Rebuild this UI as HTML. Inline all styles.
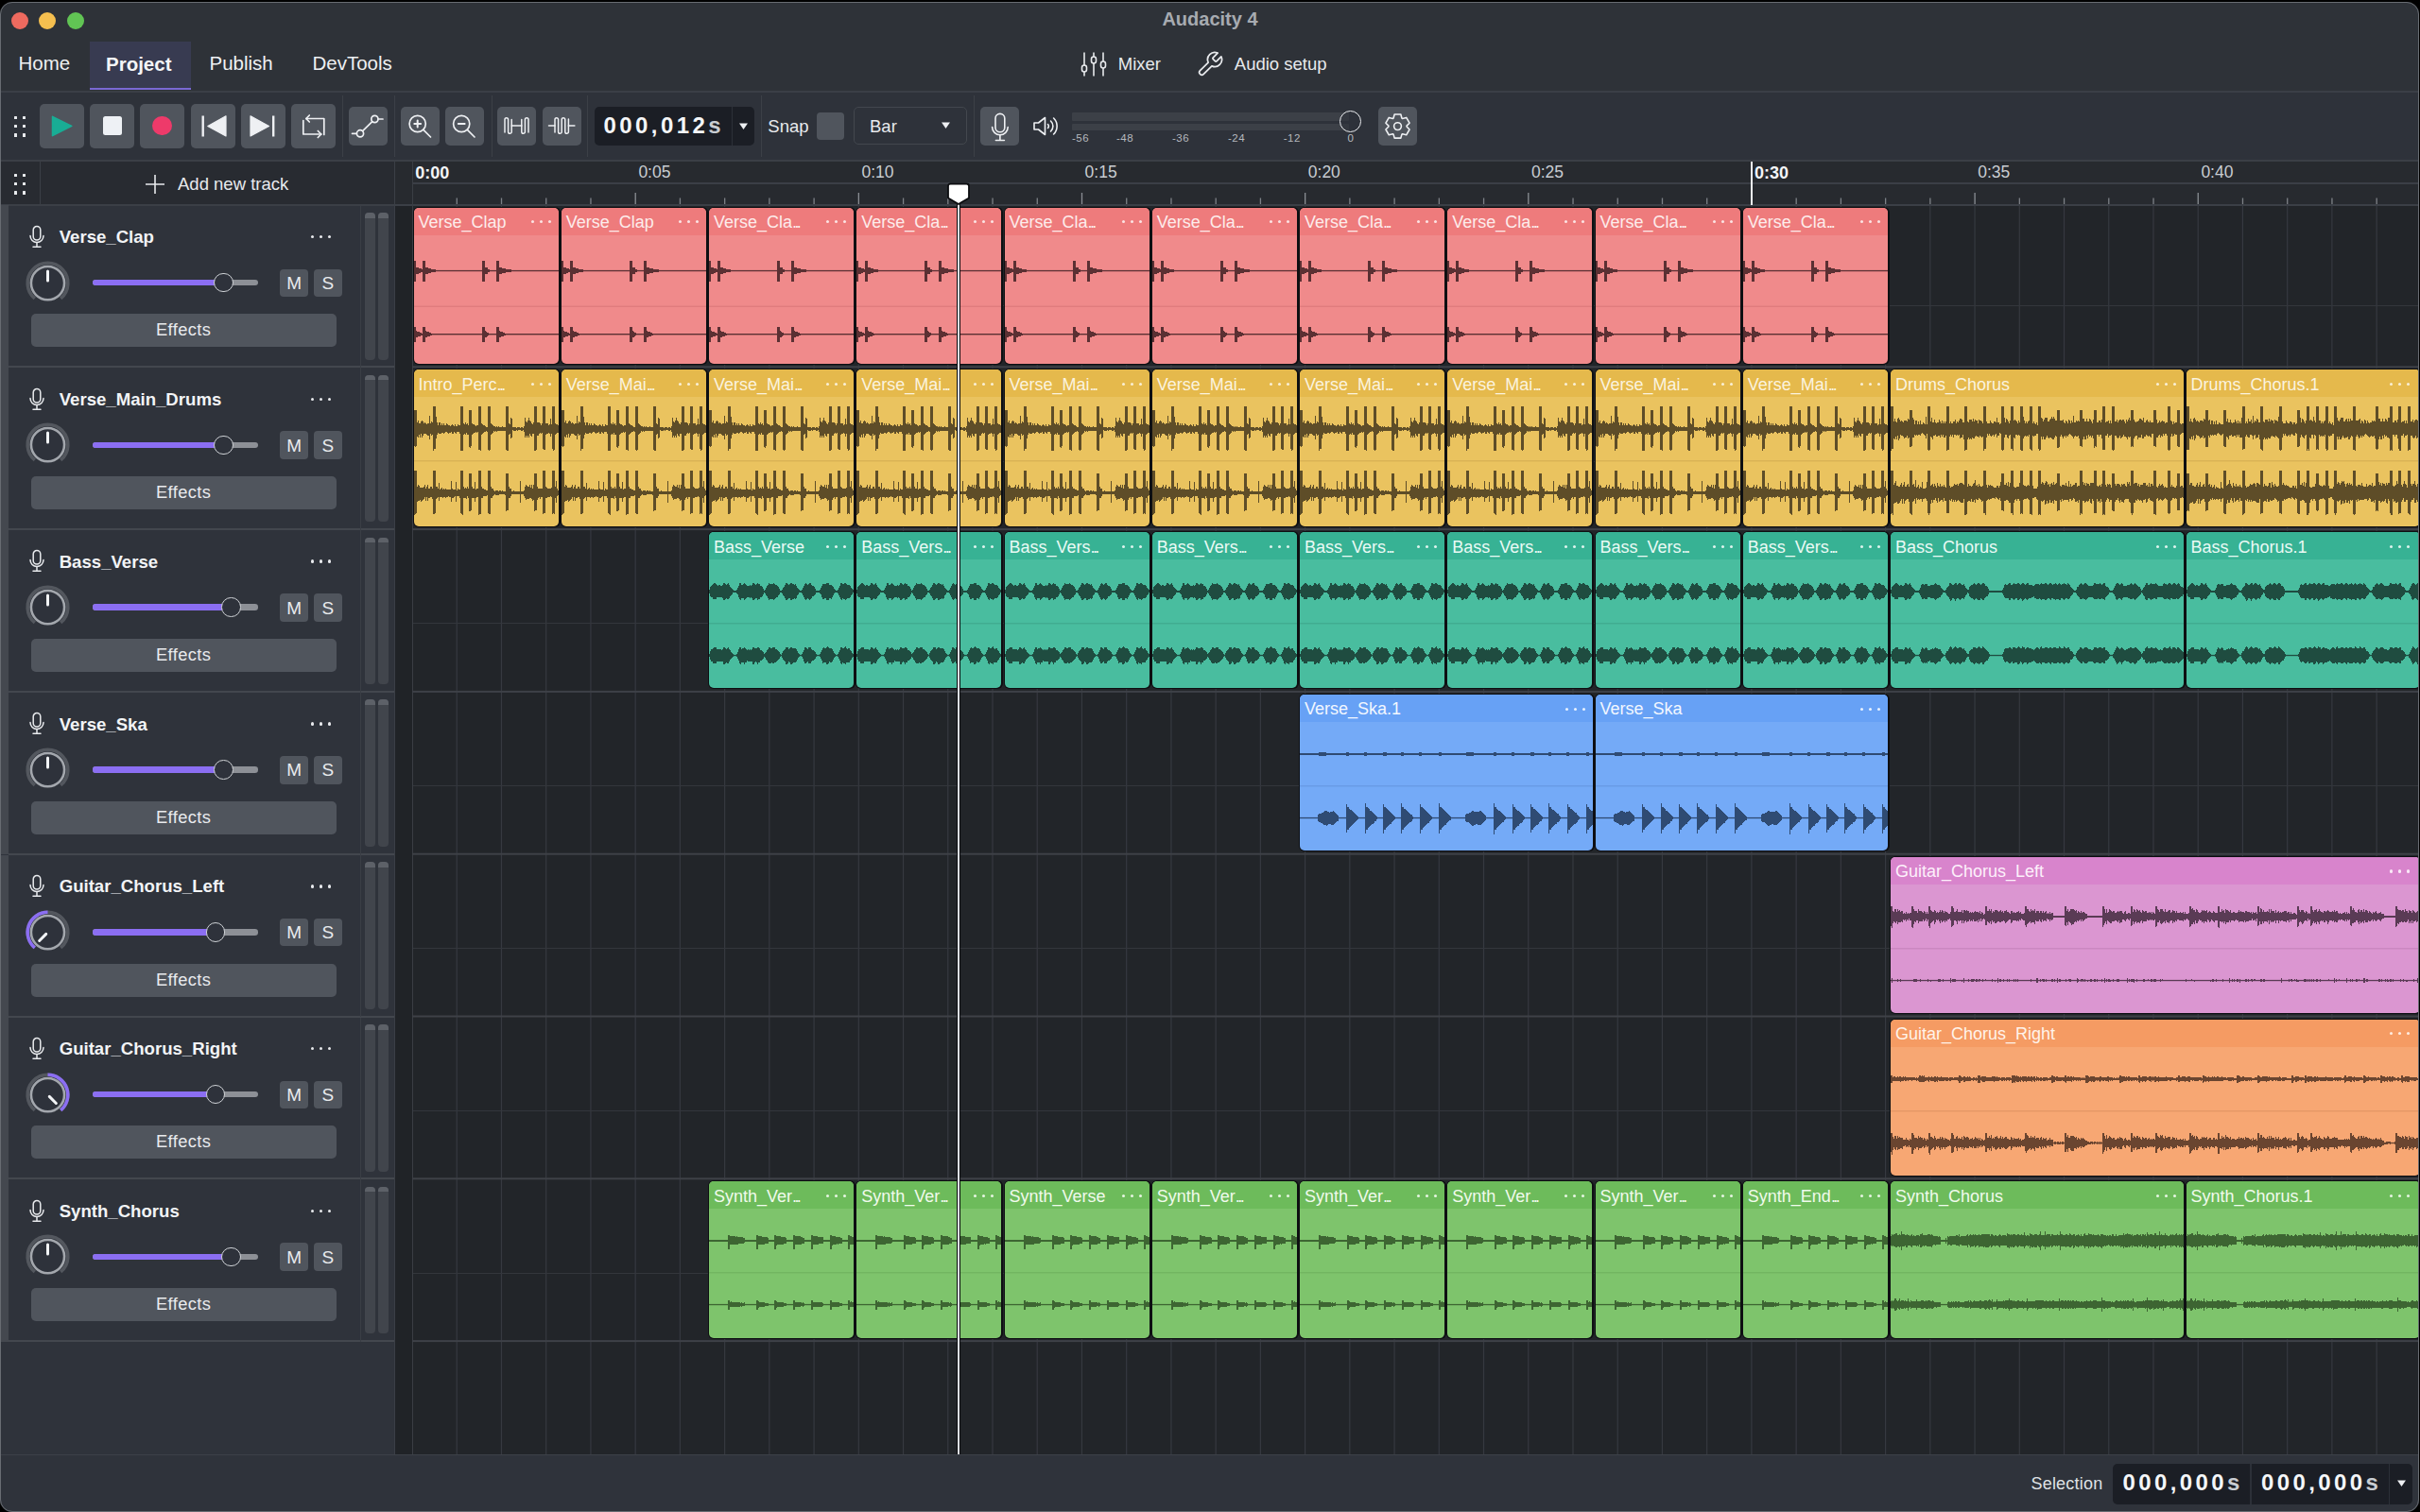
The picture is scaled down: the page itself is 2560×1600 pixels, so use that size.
<!DOCTYPE html><html><head><meta charset="utf-8"><style>
*{box-sizing:border-box;margin:0;padding:0}
html,body{width:2560px;height:1600px;overflow:hidden;background:#000;font-family:"Liberation Sans", sans-serif;}
.a{position:absolute}
.win{position:absolute;left:0;top:0;width:2560px;height:1600px;background:#2e3238;overflow:hidden;clip-path:inset(2px 1px 0px 0px round 13px);}
.wb{position:absolute;left:0;top:2px;width:2559px;height:1598px;border-radius:13px;border:1px solid #686c72;pointer-events:none}
.btn{position:absolute;background:#50555d;border-radius:5px}
.sep{position:absolute;width:1px;background:#3c4047}
.t{position:absolute;white-space:nowrap;line-height:1}
.clip{position:absolute;background:#0e0f12;border-radius:6px}
.ci{position:absolute;left:1px;top:1px;right:2px;bottom:1px;border-radius:5px;overflow:hidden}
.ch{position:absolute;left:0;top:0;right:0;height:29px}
.ct{position:absolute;left:5px;top:6.5px;font-size:18px;line-height:1;white-space:nowrap}
.cd{position:absolute;right:7px;top:13.5px;width:22px;height:4px}
.cd i{position:absolute;top:0.3px;width:3.1px;height:3.1px;border-radius:50%;opacity:0.92}
.cw{position:absolute;left:0;top:0}
</style></head><body>
<div class="win">
<svg width="0" height="0" style="position:absolute"><defs><g id="w0"><rect x="0" y="103.7" width="158" height="1" fill="rgba(120,40,45,0.18)"/><rect x="0" y="65.9" width="158" height="1.3" fill="#5b3033"/><rect x="0" y="133.1" width="158" height="1.3" fill="#5b3033"/><path d="M0 56H1V56H2H2V63H3H3V63H4H4V63H5H5V64H6H6V64H7H7V64H8H8V65H9H9V56H10H10V56H11H11V56H12H12V63H13H13V63H14H14V63H15H15V64H16H16V64H17H17V64H18H18V65H19H19V65H20H20V65H21H21V65H22H22V65H23H23V66H24H24V66H25H25V66H26H26V66H27H27V66H28H28V66H29H29V66H30H30V66H31H31V66H32H32V66H33H33V66H34H34V66H35H35V66H36H36V66H37H37V66H38H38V66H39H39V66H40H40V66H41H41V66H42H42V66H43H43V66H44H44V66H45H45V66H46H46V66H47H47V66H48H48V66H49H49V66H50H50V66H51H51V66H52H52V66H53H53V66H54H54V66H55H55V66H56H56V66H57H57V66H58H58V66H59H59V66H60H60V66H61H61V66H62H62V66H63H63V66H64H64V66H65H65V66H66H66V66H67H67V66H68H68V66H69H69V66H70H70V66H71H71V66H72H72V56H73H73V56H74H74V56H75H75V63H76H76V63H77H77V63H78H78V65H79H79V65H80H80V66H81H81V66H82H82V66H83H83V66H84H84V66H85H85V66H86H86V66H87H87V56H88H88V56H89H89V56H90H90V63H91H91V63H92H92V63H93H93V64H94H94V64H95H95V64H96H96V64H97H97V65H98H98V65H99H99V65H100H100V65H101H101V65H102H102V65H103H103V66H104H104V66H105H105V66H106H106V66H107H107V66H108H108V66H109H109V66H110H110V66H111H111V66H112H112V66H113H113V66H114H114V66H115H115V66H116H116V66H117H117V66H118H118V66H119H119V66H120H120V66H121H121V66H122H122V66H123H123V66H124H124V66H125H125V66H126H126V66H127H127V66H128H128V66H129H129V66H130H130V66H131H131V66H132H132V66H133H133V66H134H134V66H135H135V66H136H136V66H137H137V66H138H138V66H139H139V66H140H140V66H141H141V66H142H142V66H143H143V66H144H144V66H145H145V66H146H146V66H147H147V66H148H148V66H149H149V66H150H150V66H151H151V66H152H152V66H153H153V66H154H154V66H155H155V56H156H156V56H157H157V56H158H158V78H157H157V78H156H156V78H155H155V67H154H154V67H153H153V67H152H152V67H151H151V67H150H150V67H149H149V67H148H148V67H147H147V67H146H146V67H145H145V67H144H144V67H143H143V67H142H142V67H141H141V67H140H140V67H139H139V67H138H138V67H137H137V67H136H136V67H135H135V67H134H134V67H133H133V67H132H132V67H131H131V67H130H130V67H129H129V67H128H128V67H127H127V67H126H126V67H125H125V67H124H124V67H123H123V67H122H122V67H121H121V67H120H120V67H119H119V67H118H118V67H117H117V67H116H116V67H115H115V67H114H114V67H113H113V67H112H112V67H111H111V67H110H110V67H109H109V67H108H108V67H107H107V67H106H106V67H105H105V67H104H104V67H103H103V68H102H102V68H101H101V68H100H100V68H99H99V68H98H98V68H97H97V69H96H96V69H95H95V69H94H94V69H93H93V70H92H92V70H91H91V70H90H90V78H89H89V78H88H88V78H87H87V67H86H86V67H85H85V67H84H84V67H83H83V67H82H82V67H81H81V67H80H80V68H79H79V68H78H78V70H77H77V70H76H76V70H75H75V78H74H74V78H73H73V78H72H72V67H71H71V67H70H70V67H69H69V67H68H68V67H67H67V67H66H66V67H65H65V67H64H64V67H63H63V67H62H62V67H61H61V67H60H60V67H59H59V67H58H58V67H57H57V67H56H56V67H55H55V67H54H54V67H53H53V67H52H52V67H51H51V67H50H50V67H49H49V67H48H48V67H47H47V67H46H46V67H45H45V67H44H44V67H43H43V67H42H42V67H41H41V67H40H40V67H39H39V67H38H38V67H37H37V67H36H36V67H35H35V67H34H34V67H33H33V67H32H32V67H31H31V67H30H30V67H29H29V67H28H28V67H27H27V67H26H26V67H25H25V67H24H24V67H23H23V68H22H22V68H21H21V68H20H20V68H19H19V68H18H18V69H17H17V69H16H16V69H15H15V70H14H14V70H13H13V70H12H12V78H11H11V78H10H10V78H9H9V68H8H8V68H7H7V69H6H6V69H5H5V70H4H4V70H3H3V70H2H2V78H1H1V78H0H0Z" fill="#5b3033" shape-rendering="crispEdges"/><path d="M0 126H1V126H2H2V130H3H3V131H4H4V131H5H5V131H6H6V132H7H7V132H8H8V133H9H9V126H10H10V126H11H11V126H12H12V130H13H13V131H14H14V131H15H15V131H16H16V132H17H17V132H18H18V133H19H19V133H20H20V133H21H21V133H22H22V133H23H23V133H24H24V133H25H25V133H26H26V133H27H27V133H28H28V133H29H29V133H30H30V133H31H31V133H32H32V133H33H33V133H34H34V133H35H35V133H36H36V133H37H37V133H38H38V133H39H39V133H40H40V133H41H41V133H42H42V133H43H43V133H44H44V133H45H45V133H46H46V133H47H47V133H48H48V133H49H49V133H50H50V133H51H51V133H52H52V133H53H53V133H54H54V133H55H55V133H56H56V133H57H57V133H58H58V133H59H59V133H60H60V133H61H61V133H62H62V133H63H63V133H64H64V133H65H65V133H66H66V133H67H67V133H68H68V133H69H69V133H70H70V133H71H71V133H72H72V126H73H73V126H74H74V126H75H75V130H76H76V131H77H77V132H78H78V132H79H79V133H80H80V133H81H81V133H82H82V133H83H83V133H84H84V133H85H85V133H86H86V133H87H87V126H88H88V126H89H89V126H90H90V130H91H91V131H92H92V131H93H93V131H94H94V132H95H95V132H96H96V133H97H97V133H98H98V133H99H99V133H100H100V133H101H101V133H102H102V133H103H103V133H104H104V133H105H105V133H106H106V133H107H107V133H108H108V133H109H109V133H110H110V133H111H111V133H112H112V133H113H113V133H114H114V133H115H115V133H116H116V133H117H117V133H118H118V133H119H119V133H120H120V133H121H121V133H122H122V133H123H123V133H124H124V133H125H125V133H126H126V133H127H127V133H128H128V133H129H129V133H130H130V133H131H131V133H132H132V133H133H133V133H134H134V133H135H135V133H136H136V133H137H137V133H138H138V133H139H139V133H140H140V133H141H141V133H142H142V133H143H143V133H144H144V133H145H145V133H146H146V133H147H147V133H148H148V133H149H149V133H150H150V133H151H151V133H152H152V133H153H153V133H154H154V133H155H155V126H156H156V126H157H157V126H158H158V142H157H157V142H156H156V142H155H155V134H154H154V134H153H153V134H152H152V134H151H151V134H150H150V134H149H149V134H148H148V134H147H147V134H146H146V134H145H145V134H144H144V134H143H143V134H142H142V134H141H141V134H140H140V134H139H139V134H138H138V134H137H137V134H136H136V134H135H135V134H134H134V134H133H133V134H132H132V134H131H131V134H130H130V134H129H129V134H128H128V134H127H127V134H126H126V134H125H125V134H124H124V134H123H123V134H122H122V134H121H121V134H120H120V134H119H119V134H118H118V134H117H117V134H116H116V134H115H115V134H114H114V134H113H113V134H112H112V134H111H111V134H110H110V134H109H109V134H108H108V134H107H107V134H106H106V134H105H105V134H104H104V134H103H103V134H102H102V134H101H101V134H100H100V134H99H99V134H98H98V134H97H97V135H96H96V135H95H95V136H94H94V136H93H93V136H92H92V137H91H91V137H90H90V142H89H89V142H88H88V142H87H87V134H86H86V134H85H85V134H84H84V134H83H83V134H82H82V134H81H81V134H80H80V134H79H79V135H78H78V136H77H77V137H76H76V137H75H75V142H74H74V142H73H73V142H72H72V134H71H71V134H70H70V134H69H69V134H68H68V134H67H67V134H66H66V134H65H65V134H64H64V134H63H63V134H62H62V134H61H61V134H60H60V134H59H59V134H58H58V134H57H57V134H56H56V134H55H55V134H54H54V134H53H53V134H52H52V134H51H51V134H50H50V134H49H49V134H48H48V134H47H47V134H46H46V134H45H45V134H44H44V134H43H43V134H42H42V134H41H41V134H40H40V134H39H39V134H38H38V134H37H37V134H36H36V134H35H35V134H34H34V134H33H33V134H32H32V134H31H31V134H30H30V134H29H29V134H28H28V134H27H27V134H26H26V134H25H25V134H24H24V134H23H23V134H22H22V134H21H21V134H20H20V134H19H19V135H18H18V135H17H17V136H16H16V136H15H15V136H14H14V137H13H13V137H12H12V142H11H11V142H10H10V142H9H9V135H8H8V135H7H7V136H6H6V136H5H5V136H4H4V137H3H3V137H2H2V142H1H1V142H0H0Z" fill="#5b3033" shape-rendering="crispEdges"/></g><g id="w1"><rect x="0" y="96.3" width="158" height="1" fill="rgba(110,80,20,0.18)"/><rect x="0" y="62.199999999999996" width="158" height="1.3" fill="#5e4d28"/><rect x="0" y="129.9" width="158" height="1.3" fill="#5e4d28"/><path d="M0 43H1V43H2H2V43H3H3V56H4H4V54H5H5V57H6H6V57H7H7V55H8H8V54H9H9V55H10H10V57H11H11V56H12H12V57H13H13V58H14H14V57H15H15V57H16H16V49H17H17V57H18H18V55H19H19V56H20H20V39H21H21V39H22H22V39H23H23V50H24H24V56H25H25V59H26H26V56H27H27V56H28H28V59H29H29V57H30H30V59H31H31V57H32H32V59H33H33V59H34H34V57H35H35V58H36H36V59H37H37V59H38H38V60H39H39V59H40H40V58H41H41V59H42H42V60H43H43V58H44H44V60H45H45V60H46H46V58H47H47V59H48H48V59H49H49V39H50H50V39H51H51V39H52H52V57H53H53V58H54H54V56H55H55V58H56H56V57H57H57V59H58H58V43H59H59V43H60H60V43H61H61V57H62H62V58H63H63V58H64H64V59H65H65V60H66H66V59H67H67V59H68H68V39H69H69V39H70H70V39H71H71V57H72H72V58H73H73V59H74H74V59H75H75V60H76H76V61H77H77V61H78H78V39H79H79V39H80H80V39H81H81V57H82H82V58H83H83V59H84H84V60H85H85V60H86H86V61H87H87V60H88H88V61H89H89V60H90H90V61H91H91V61H92H92V61H93H93V60H94H94V61H95H95V61H96H96V61H97H97V39H98H98V39H99H99V39H100H100V57H101H101V58H102H102V51H103H103V52H104H104V61H105H105V61H106H106V61H107H107V61H108H108V62H109H109V61H110H110V61H111H111V61H112H112V62H113H113V61H114H114V61H115H115V62H116H116V60H117H117V51H118H118V55H119H119V56H120H120V54H121H121V51H122H122V54H123H123V55H124H124V57H125H125V58H126H126V56H127H127V39H128H128V39H129H129V39H130H130V56H131H131V56H132H132V56H133H133V57H134H134V59H135H135V57H136H136V39H137H137V39H138H138V39H139H139V57H140H140V57H141H141V57H142H142V59H143H143V58H144H144V52H145H145V58H146H146V39H147H147V39H148H148V39H149H149V57H150H150V58H151H151V58H152H152V59H153H153V60H154H154V59H155H155V61H156H156V39H157H157V39H158H158V86H157H157V86H156H156V66H155H155V66H154H154V67H153H153V67H152H152V67H151H151V68H150H150V69H149H149V85H148H148V86H147H147V84H146H146V68H145H145V71H144H144V68H143H143V67H142H142V68H141H141V68H140H140V69H139H139V85H138H138V85H137H137V84H136H136V67H135H135V68H134H134V67H133H133V68H132H132V70H131H131V70H130H130V85H129H129V86H128H128V86H127H127V68H126H126V68H125H125V71H124H124V70H123H123V68H122H122V72H121H121V70H120H120V72H119H119V70H118H118V72H117H117V66H116H116V64H115H115V65H114H114V65H113H113V64H112H112V64H111H111V64H110H110V65H109H109V64H108H108V65H107H107V65H106H106V65H105H105V64H104H104V72H103H103V73H102H102V68H101H101V69H100H100V86H99H99V86H98H98V85H97H97V65H96H96V65H95H95V65H94H94V65H93H93V65H92H92V65H91H91V65H90H90V65H89H89V65H88H88V66H87H87V65H86H86V66H85H85V65H84H84V67H83H83V68H82H82V69H81H81V85H80H80V86H79H79V85H78H78V66H77H77V65H76H76V66H75H75V66H74H74V67H73H73V68H72H72V69H71H71V86H70H70V85H69H69V85H68H68V66H67H67V67H66H66V66H65H65V67H64H64V67H63H63V68H62H62V69H61H61V81H60H60V83H59H59V82H58H58V69H57H57V69H56H56V67H55H55V69H54H54V68H53H53V69H52H52V86H51H51V86H50H50V86H49H49V68H48H48V66H47H47V66H46H46V66H45H45V68H44H44V67H43H43V66H42H42V68H41H41V68H40H40V66H39H39V67H38H38V67H37H37V68H36H36V67H35H35V66H34H34V66H33H33V67H32H32V68H31H31V67H30H30V67H29H29V68H28H28V68H27H27V68H26H26V67H25H25V69H24H24V73H23H23V84H22H22V84H21H21V86H20H20V69H19H19V70H18H18V68H17H17V74H16H16V70H15H15V70H14H14V69H13H13V68H12H12V68H11H11V68H10H10V70H9H9V72H8H8V68H7H7V72H6H6V69H5H5V72H4H4V71H3H3V81H2H2V82H1H1V81H0H0Z" fill="#5e4d28" shape-rendering="crispEdges"/><path d="M0 107H1V107H2H2V107H3H3V124H4H4V122H5H5V123H6H6V125H7H7V125H8H8V125H9H9V125H10H10V124H11H11V122H12H12V126H13H13V124H14H14V122H15H15V126H16H16V126H17H17V124H18H18V124H19H19V126H20H20V107H21H21V107H22H22V107H23H23V124H24H24V124H25H25V126H26H26V120H27H27V127H28H28V126H29H29V125H30H30V127H31H31V126H32H32V127H33H33V126H34H34V127H35H35V127H36H36V127H37H37V127H38H38V127H39H39V118H40H40V126H41H41V127H42H42V127H43H43V127H44H44V119H45H45V128H46H46V126H47H47V127H48H48V127H49H49V107H50H50V107H51H51V107H52H52V124H53H53V126H54H54V125H55H55V126H56H56V124H57H57V126H58H58V110H59H59V110H60H60V110H61H61V124H62H62V126H63H63V126H64H64V119H65H65V127H66H66V126H67H67V126H68H68V107H69H69V107H70H70V107H71H71V124H72H72V126H73H73V126H74H74V127H75H75V127H76H76V128H77H77V128H78H78V107H79H79V107H80H80V107H81H81V124H82H82V126H83H83V126H84H84V128H85H85V129H86H86V128H87H87V128H88H88V128H89H89V129H90H90V128H91H91V128H92H92V129H93H93V128H94H94V129H95H95V129H96H96V129H97H97V110H98H98V110H99H99V110H100H100V124H101H101V126H102H102V126H103H103V129H104H104V129H105H105V128H106H106V129H107H107V129H108H108V129H109H109V129H110H110V129H111H111V129H112H112V118H113H113V129H114H114V129H115H115V129H116H116V128H117H117V124H118H118V122H119H119V123H120H120V124H121H121V124H122H122V122H123H123V125H124H124V122H125H125V126H126H126V122H127H127V110H128H128V110H129H129V110H130H130V124H131H131V126H132H132V126H133H133V126H134H134V126H135H135V126H136H136V107H137H137V107H138H138V107H139H139V124H140H140V125H141H141V126H142H142V126H143H143V126H144H144V126H145H145V125H146H146V107H147H147V107H148H148V107H149H149V124H150H150V118H151H151V126H152H152V128H153H153V128H154H154V128H155H155V127H156H156V107H157H157V107H158H158V154H157H157V153H156H156V134H155H155V134H154H154V133H153H153V133H152H152V134H151H151V141H150H150V136H149H149V153H148H148V152H147H147V153H146H146V135H145H145V134H144H144V135H143H143V135H142H142V135H141H141V136H140H140V136H139H139V152H138H138V152H137H137V153H136H136V135H135H135V135H134H134V137H133H133V135H132H132V136H131H131V138H130H130V149H129H129V149H128H128V150H127H127V138H126H126V139H125H125V137H124H124V136H123H123V136H122H122V137H121H121V137H120H120V137H119H119V138H118H118V136H117H117V134H116H116V132H115H115V132H114H114V132H113H113V141H112H112V132H111H111V132H110H110V132H109H109V132H108H108V132H107H107V132H106H106V132H105H105V132H104H104V132H103H103V134H102H102V136H101H101V136H100H100V149H99H99V149H98H98V150H97H97V133H96H96V132H95H95V132H94H94V132H93H93V132H92H92V132H91H91V132H90H90V133H89H89V133H88H88V133H87H87V133H86H86V132H85H85V133H84H84V134H83H83V136H82H82V136H81H81V153H80H80V153H79H79V152H78H78V133H77H77V134H76H76V134H75H75V134H74H74V134H73H73V136H72H72V136H71H71V153H70H70V153H69H69V154H68H68V135H67H67V135H66H66V136H65H65V140H64H64V136H63H63V136H62H62V136H61H61V149H60H60V150H59H59V150H58H58V136H57H57V134H56H56V137H55H55V136H54H54V136H53H53V136H52H52V154H51H51V153H50H50V152H49H49V136H48H48V134H47H47V134H46H46V134H45H45V140H44H44V134H43H43V135H42H42V136H41H41V136H40H40V140H39H39V135H38H38V135H37H37V134H36H36V135H35H35V135H34H34V136H33H33V135H32H32V135H31H31V136H30H30V135H29H29V135H28H28V135H27H27V139H26H26V135H25H25V136H24H24V137H23H23V152H22H22V153H21H21V153H20H20V137H19H19V135H18H18V135H17H17V136H16H16V136H15H15V139H14H14V135H13H13V139H12H12V135H11H11V137H10H10V138H9H9V139H8H8V140H7H7V138H6H6V139H5H5V139H4H4V140H3H3V152H2H2V153H1H1V154H0H0Z" fill="#5e4d28" shape-rendering="crispEdges"/></g><g id="w2"><rect x="0" y="96.3" width="314" height="1" fill="rgba(110,80,20,0.18)"/><rect x="0" y="62.199999999999996" width="314" height="1.3" fill="#5e4d28"/><rect x="0" y="129.9" width="314" height="1.3" fill="#5e4d28"/><path d="M0 39H1V39H2H2V39H3H3V55H4H4V52H5H5V55H6H6V56H7H7V52H8H8V51H9H9V53H10H10V55H11H11V54H12H12V55H13H13V56H14H14V54H15H15V54H16H16V54H17H17V55H18H18V52H19H19V53H20H20V43H21H21V43H22H22V43H23H23V51H24H24V53H25H25V58H26H26V54H27H27V54H28H28V58H29H29V55H30H30V58H31H31V54H32H32V58H33H33V58H34H34V56H35H35V57H36H36V58H37H37V50H38H38V58H39H39V39H40H40V39H41H41V39H42H42V55H43H43V51H44H44V56H45H45V56H46H46V53H47H47V56H48H48V57H49H49V56H50H50V56H51H51V53H52H52V55H53H53V57H54H54V54H55H55V57H56H56V55H57H57V57H58H58V55H59H59V39H60H60V39H61H61V39H62H62V57H63H63V55H64H64V57H65H65V57H66H66V55H67H67V55H68H68V53H69H69V57H70H70V55H71H71V56H72H72V54H73H73V52H74H74V52H75H75V53H76H76V56H77H77V56H78H78V39H79H79V39H80H80V39H81H81V55H82H82V56H83H83V53H84H84V53H85H85V53H86H86V55H87H87V52H88H88V55H89H89V53H90H90V54H91H91V54H92H92V57H93H93V53H94H94V54H95H95V54H96H96V55H97H97V57H98H98V39H99H99V39H100H100V39H101H101V55H102H102V57H103H103V57H104H104V57H105H105V54H106H106V56H107H107V57H108H108V57H109H109V55H110H110V55H111H111V56H112H112V51H113H113V56H114H114V56H115H115V58H116H116V57H117H117V39H118H118V39H119H119V39H120H120V51H121H121V56H122H122V52H123H123V53H124H124V55H125H125V57H126H126V54H127H127V39H128H128V39H129H129V39H130H130V54H131H131V53H132H132V54H133H133V55H134H134V57H135H135V54H136H136V56H137H137V39H138H138V39H139H139V39H140H140V50H141H141V54H142H142V57H143H143V55H144H144V57H145H145V55H146H146V54H147H147V39H148H148V39H149H149V39H150H150V57H151H151V55H152H152V57H153H153V58H154H154V56H155H155V59H156H156V39H157H157V39H158H158V39H159H159V51H160H160V52H161H161V55H162H162V53H163H163V51H164H164V51H165H165V51H166H166V55H167H167V55H168H168V53H169H169V52H170H170V50H171H171V52H172H172V50H173H173V52H174H174V54H175H175V54H176H176V43H177H177V43H178H178V43H179H179V54H180H180V54H181H181V54H182H182V53H183H183V56H184H184V57H185H185V54H186H186V55H187H187V57H188H188V53H189H189V54H190H190V57H191H191V54H192H192V56H193H193V49H194H194V56H195H195V56H196H196V54H197H197V55H198H198V54H199H199V55H200H200V43H201H201V43H202H202V43H203H203V52H204H204V52H205H205V55H206H206V55H207H207V52H208H208V55H209H209V55H210H210V52H211H211V53H212H212V55H213H213V57H214H214V53H215H215V43H216H216V43H217H217V43H218H218V56H219H219V56H220H220V54H221H221V54H222H222V56H223H223V53H224H224V39H225H225V39H226H226V39H227H227V56H228H228V55H229H229V55H230H230V54H231H231V57H232H232V54H233H233V57H234H234V39H235H235V39H236H236V39H237H237V55H238H238V55H239H239V53H240H240V56H241H241V54H242H242V53H243H243V53H244H244V54H245H245V53H246H246V53H247H247V55H248H248V57H249H249V53H250H250V55H251H251V53H252H252V51H253H253V54H254H254V43H255H255V43H256H256V43H257H257V53H258H258V55H259H259V56H260H260V55H261H261V55H262H262V54H263H263V52H264H264V52H265H265V53H266H266V54H267H267V51H268H268V56H269H269V56H270H270V54H271H271V53H272H272V55H273H273V56H274H274V54H275H275V56H276H276V56H277H277V56H278H278V43H279H279V43H280H280V43H281H281V53H282H282V57H283H283V56H284H284V54H285H285V56H286H286V55H287H287V54H288H288V55H289H289V55H290H290V57H291H291V56H292H292V56H293H293V39H294H294V39H295H295V39H296H296V54H297H297V55H298H298V58H299H299V55H300H300V57H301H301V56H302H302V56H303H303V43H304H304V43H305H305V43H306H306V57H307H307V58H308H308V57H309H309V57H310H310V58H311H311V57H312H312V58H313H313V43H314H314V83H313H313V68H312H312V69H311H311V69H310H310V67H309H309V67H308H308V68H307H307V69H306H306V82H305H305V82H304H304V81H303H303V69H302H302V69H301H301V68H300H300V70H299H299V71H298H298V68H297H297V71H296H296V85H295H295V86H294H294V85H293H293V70H292H292V68H291H291V68H290H290V70H289H289V68H288H288V71H287H287V70H286H286V72H285H285V69H284H284V70H283H283V72H282H282V72H281H281V82H280H280V81H279H279V81H278H278V68H277H277V68H276H276V72H275H275V71H274H274V70H273H273V71H272H272V70H271H271V69H270H270V71H269H269V71H268H268V73H267H267V73H266H266V69H265H265V72H264H264V72H263H263V72H262H262V74H261H261V70H260H260V70H259H259V71H258H258V73H257H257V82H256H256V81H255H255V82H254H254V71H253H253V72H252H252V71H251H251V74H250H250V72H249H249V71H248H248V71H247H247V69H246H246V71H245H245V72H244H244V73H243H243V70H242H242V72H241H241V73H240H240V72H239H239V70H238H238V70H237H237V85H236H236V86H235H235V85H234H234V69H233H233V70H232H232V70H231H231V72H230H230V68H229H229V70H228H228V70H227H227V85H226H226V85H225H225V85H224H224V73H223H223V69H222H222V69H221H221V71H220H220V69H219H219V69H218H218V82H217H217V81H216H216V83H215H215V73H214H214V70H213H213V72H212H212V70H211H211V71H210H210V69H209H209V73H208H208V70H207H207V74H206H206V74H205H205V71H204H204V74H203H203V82H202H202V81H201H201V81H200H200V73H199H199V70H198H198V71H197H197V71H196H196V70H195H195V71H194H194V73H193H193V71H192H192V70H191H191V69H190H190V68H189H189V69H188H188V71H187H187V70H186H186V72H185H185V70H184H184V71H183H183V73H182H182V71H181H181V69H180H180V71H179H179V82H178H178V83H177H177V83H176H176V71H175H175V70H174H174V72H173H173V74H172H172V74H171H171V73H170H170V72H169H169V72H168H168V73H167H167V72H166H166V70H165H165V72H164H164V74H163H163V74H162H162V71H161H161V74H160H160V71H159H159V85H158H158V86H157H157V84H156H156V68H155H155V68H154H154V70H153H153V70H152H152V71H151H151V70H150H150V86H149H149V85H148H148V84H147H147V69H146H146V71H145H145V70H144H144V71H143H143V70H142H142V71H141H141V73H140H140V86H139H139V86H138H138V85H137H137V70H136H136V69H135H135V70H134H134V69H133H133V69H132H132V73H131H131V72H130H130V86H129H129V84H128H128V84H127H127V69H126H126V70H125H125V73H124H124V72H123H123V69H122H122V69H121H121V72H120H120V85H119H119V86H118H118V85H117H117V68H116H116V67H115H115V70H114H114V70H113H113V72H112H112V68H111H111V69H110H110V71H109H109V69H108H108V70H107H107V71H106H106V70H105H105V68H104H104V70H103H103V68H102H102V72H101H101V84H100H100V84H99H99V86H98H98V71H97H97V72H96H96V71H95H95V70H94H94V72H93H93V71H92H92V71H91H91V70H90H90V71H89H89V73H88H88V73H87H87V72H86H86V74H85H85V73H84H84V74H83H83V72H82H82V74H81H81V85H80H80V85H79H79V86H78H78V74H77H77V69H76H76V72H75H75V72H74H74V73H73H73V69H72H72V70H71H71V69H70H70V70H69H69V69H68H68V69H67H67V72H66H66V69H65H65V71H64H64V69H63H63V71H62H62V85H61H61V85H60H60V86H59H59V70H58H58V72H57H57V72H56H56V69H55H55V71H54H54V69H53H53V72H52H52V70H51H51V70H50H50V71H49H49V71H48H48V69H47H47V70H46H46V70H45H45V74H44H44V72H43H43V71H42H42V85H41H41V86H40H40V85H39H39V68H38H38V73H37H37V70H36H36V69H35H35V68H34H34V67H33H33V68H32H32V70H31H31V69H30H30V69H29H29V70H28H28V69H27H27V70H26H26V69H25H25V72H24H24V72H23H23V81H22H22V82H21H21V82H20H20V72H19H19V73H18H18V70H17H17V72H16H16V72H15H15V73H14H14V71H13H13V70H12H12V70H11H11V69H10H10V73H9H9V75H8H8V70H7H7V74H6H6V71H5H5V74H4H4V73H3H3V84H2H2V84H1H1V86H0H0Z" fill="#5e4d28" shape-rendering="crispEdges"/><path d="M0 107H1V107H2H2V107H3H3V122H4H4V120H5H5V118H6H6V123H7H7V123H8H8V124H9H9V124H10H10V122H11H11V120H12H12V124H13H13V122H14H14V119H15H15V124H16H16V124H17H17V122H18H18V121H19H19V124H20H20V107H21H21V107H22H22V107H23H23V122H24H24V121H25H25V124H26H26V117H27H27V125H28H28V124H29H29V122H30H30V126H31H31V124H32H32V125H33H33V119H34H34V126H35H35V126H36H36V126H37H37V125H38H38V119H39H39V107H40H40V107H41H41V107H42H42V123H43H43V122H44H44V121H45H45V124H46H46V121H47H47V123H48H48V125H49H49V120H50H50V123H51H51V124H52H52V121H53H53V124H54H54V123H55H55V124H56H56V122H57H57V124H58H58V125H59H59V107H60H60V107H61H61V107H62H62V123H63H63V125H64H64V124H65H65V124H66H66V123H67H67V121H68H68V122H69H69V122H70H70V121H71H71V123H72H72V121H73H73V120H74H74V120H75H75V120H76H76V121H77H77V122H78H78V107H79H79V107H80H80V107H81H81V124H82H82V121H83H83V123H84H84V123H85H85V124H86H86V123H87H87V121H88H88V120H89H89V117H90H90V123H91H91V122H92H92V124H93H93V121H94H94V123H95H95V124H96H96V124H97H97V123H98H98V107H99H99V107H100H100V107H101H101V122H102H102V125H103H103V122H104H104V123H105H105V122H106H106V123H107H107V123H108H108V124H109H109V125H110H110V125H111H111V125H112H112V123H113H113V123H114H114V125H115H115V123H116H116V119H117H117V110H118H118V110H119H119V110H120H120V122H121H121V122H122H122V120H123H123V123H124H124V119H125H125V124H126H126V120H127H127V107H128H128V107H129H129V107H130H130V124H131H131V125H132H132V125H133H133V124H134H134V124H135H135V124H136H136V120H137H137V107H138H138V107H139H139V107H140H140V122H141H141V123H142H142V123H143H143V124H144H144V123H145H145V122H146H146V123H147H147V107H148H148V107H149H149V107H150H150V123H151H151V126H152H152V126H153H153V126H154H154V126H155H155V124H156H156V107H157H157V107H158H158V107H159H159V121H160H160V119H161H161V120H162H162V122H163H163V120H164H164V118H165H165V119H166H166V122H167H167V121H168H168V124H169H169V121H170H170V120H171H171V122H172H172V119H173H173V122H174H174V121H175H175V120H176H176V110H177H177V110H178H178V110H179H179V123H180H180V124H181H181V122H182H182V122H183H183V122H184H184V123H185H185V120H186H186V123H187H187V124H188H188V118H189H189V124H190H190V121H191H191V124H192H192V123H193H193V122H194H194V122H195H195V120H196H196V120H197H197V124H198H198V123H199H199V123H200H200V107H201H201V107H202H202V107H203H203V119H204H204V122H205H205V120H206H206V123H207H207V120H208H208V121H209H209V121H210H210V123H211H211V120H212H212V120H213H213V120H214H214V120H215H215V107H216H216V107H217H217V107H218H218V123H219H219V124H220H220V123H221H221V122H222H222V124H223H223V121H224H224V107H225H225V107H226H226V107H227H227V122H228H228V124H229H229V121H230H230V122H231H231V121H232H232V122H233H233V125H234H234V110H235H235V110H236H236V110H237H237V121H238H238V123H239H239V121H240H240V121H241H241V121H242H242V122H243H243V124H244H244V121H245H245V122H246H246V121H247H247V121H248H248V123H249H249V124H250H250V119H251H251V121H252H252V119H253H253V123H254H254V107H255H255V107H256H256V107H257H257V121H258H258V120H259H259V120H260H260V120H261H261V123H262H262V121H263H263V124H264H264V122H265H265V122H266H266V122H267H267V120H268H268V120H269H269V120H270H270V123H271H271V122H272H272V124H273H273V120H274H274V124H275H275V121H276H276V121H277H277V123H278H278V107H279H279V107H280H280V107H281H281V124H282H282V125H283H283V123H284H284V121H285H285V123H286H286V122H287H287V121H288H288V123H289H289V125H290H290V124H291H291V125H292H292V125H293H293V107H294H294V107H295H295V107H296H296V124H297H297V122H298H298V124H299H299V124H300H300V125H301H301V125H302H302V123H303H303V110H304H304V110H305H305V110H306H306V124H307H307V123H308H308V123H309H309V125H310H310V126H311H311V126H312H312V126H313H313V107H314H314V152H313H313V135H312H312V135H311H311V137H310H310V136H309H309V135H308H308V136H307H307V136H306H306V149H305H305V149H304H304V149H303H303V137H302H302V136H301H301V137H300H300V136H299H299V136H298H298V138H297H297V139H296H296V152H295H295V153H294H294V152H293H293V138H292H292V137H291H291V136H290H290V137H289H289V138H288H288V139H287H287V138H286H286V137H285H285V138H284H284V139H283H283V136H282H282V137H281H281V154H280H280V153H279H279V153H278H278V140H277H277V139H276H276V139H275H275V138H274H274V136H273H273V137H272H272V140H271H271V141H270H270V137H269H269V138H268H268V138H267H267V141H266H266V139H265H265V138H264H264V139H263H263V138H262H262V137H261H261V139H260H260V138H259H259V141H258H258V141H257H257V152H256H256V154H255H255V152H254H254V141H253H253V140H252H252V137H251H251V137H250H250V137H249H249V137H248H248V138H247H247V141H246H246V140H245H245V140H244H244V138H243H243V141H242H242V139H241H241V136H240H240V138H239H239V138H238H238V140H237H237V150H236H236V150H235H235V149H234H234V138H233H233V138H232H232V140H231H231V137H230H230V136H229H229V138H228H228V140H227H227V154H226H226V153H225H225V154H224H224V140H223H223V137H222H222V141H221H221V139H220H220V140H219H219V137H218H218V152H217H217V152H216H216V152H215H215V139H214H214V137H213H213V142H212H212V141H211H211V137H210H210V139H209H209V140H208H208V139H207H207V140H206H206V141H205H205V139H204H204V139H203H203V153H202H202V152H201H201V154H200H200V138H199H199V141H198H198V139H197H197V140H196H196V140H195H195V137H194H194V136H193H193V138H192H192V139H191H191V137H190H190V137H189H189V140H188H188V138H187H187V138H186H186V138H185H185V138H184H184V138H183H183V139H182H182V137H181H181V140H180H180V138H179H179V149H178H178V149H177H177V150H176H176V139H175H175V139H174H174V138H173H173V142H172H172V139H171H171V141H170H170V141H169H169V138H168H168V141H167H167V142H166H166V139H165H165V142H164H164V143H163H163V138H162H162V139H161H161V140H160H160V139H159H159V154H158H158V153H157H157V154H156H156V138H155H155V137H154H154V135H153H153V135H152H152V136H151H151V136H150H150V154H149H149V153H148H148V153H147H147V138H146H146V137H145H145V136H144H144V137H143H143V137H142H142V137H141H141V138H140H140V153H139H139V152H138H138V153H137H137V139H136H136V137H135H135V137H134H134V139H133H133V137H132H132V138H131H131V141H130H130V154H129H129V152H128H128V152H127H127V141H126H126V141H125H125V139H124H124V138H123H123V138H122H122V139H121H121V139H120H120V150H119H119V149H118H118V149H117H117V139H116H116V136H115H115V138H114H114V137H113H113V136H112H112V135H111H111V137H110H110V136H109H109V136H108H108V136H107H107V137H106H106V137H105H105V138H104H104V137H103H103V138H102H102V139H101H101V154H100H100V152H99H99V152H98H98V139H97H97V140H96H96V138H95H95V137H94H94V136H93H93V138H92H92V138H91H91V137H90H90V141H89H89V138H88H88V140H87H87V140H86H86V137H85H85V140H84H84V139H83H83V139H82H82V140H81H81V153H80H80V154H79H79V154H78H78V137H77H77V141H76H76V141H75H75V141H74H74V140H73H73V139H72H72V138H71H71V139H70H70V140H69H69V138H68H68V140H67H67V138H66H66V140H65H65V137H64H64V139H63H63V138H62H62V152H61H61V152H60H60V152H59H59V139H58H58V139H57H57V136H56H56V140H55H55V138H54H54V138H53H53V139H52H52V140H51H51V136H50H50V141H49H49V139H48H48V136H47H47V138H46H46V138H45H45V141H44H44V138H43H43V142H42H42V152H41H41V154H40H40V152H39H39V139H38H38V137H37H37V136H36H36V137H35H35V137H34H34V140H33H33V137H32H32V137H31H31V138H30H30V137H29H29V138H28H28V136H27H27V142H26H26V137H25H25V139H24H24V140H23H23V154H22H22V153H21H21V152H20H20V140H19H19V137H18H18V137H17H17V138H16H16V139H15H15V142H14H14V137H13H13V142H12H12V137H11H11V139H10H10V141H9H9V142H8H8V142H7H7V140H6H6V141H5H5V141H4H4V142H3H3V154H2H2V152H1H1V153H0H0Z" fill="#5e4d28" shape-rendering="crispEdges"/></g><g id="w3"><rect x="0" y="96.3" width="252" height="1" fill="rgba(110,80,20,0.18)"/><rect x="0" y="62.199999999999996" width="252" height="1.3" fill="#5e4d28"/><rect x="0" y="129.9" width="252" height="1.3" fill="#5e4d28"/><path d="M0 39H1V39H2H2V39H3H3V55H4H4V52H5H5V55H6H6V56H7H7V52H8H8V51H9H9V53H10H10V55H11H11V54H12H12V55H13H13V56H14H14V54H15H15V54H16H16V54H17H17V55H18H18V52H19H19V53H20H20V43H21H21V43H22H22V43H23H23V54H24H24V53H25H25V58H26H26V54H27H27V54H28H28V58H29H29V55H30H30V58H31H31V54H32H32V58H33H33V58H34H34V56H35H35V57H36H36V58H37H37V58H38H38V58H39H39V43H40H40V43H41H41V43H42H42V55H43H43V52H44H44V56H45H45V56H46H46V53H47H47V56H48H48V57H49H49V56H50H50V56H51H51V53H52H52V55H53H53V57H54H54V54H55H55V57H56H56V55H57H57V57H58H58V51H59H59V39H60H60V39H61H61V39H62H62V57H63H63V55H64H64V57H65H65V52H66H66V55H67H67V55H68H68V53H69H69V57H70H70V49H71H71V56H72H72V54H73H73V55H74H74V52H75H75V53H76H76V56H77H77V56H78H78V39H79H79V39H80H80V39H81H81V55H82H82V56H83H83V53H84H84V53H85H85V53H86H86V55H87H87V52H88H88V55H89H89V53H90H90V54H91H91V54H92H92V57H93H93V53H94H94V54H95H95V54H96H96V55H97H97V50H98H98V39H99H99V39H100H100V39H101H101V55H102H102V57H103H103V57H104H104V57H105H105V54H106H106V56H107H107V57H108H108V57H109H109V55H110H110V55H111H111V56H112H112V58H113H113V56H114H114V56H115H115V58H116H116V57H117H117V43H118H118V43H119H119V43H120H120V51H121H121V56H122H122V52H123H123V53H124H124V55H125H125V57H126H126V54H127H127V39H128H128V39H129H129V39H130H130V54H131H131V53H132H132V54H133H133V55H134H134V50H135H135V54H136H136V56H137H137V39H138H138V39H139H139V39H140H140V54H141H141V54H142H142V57H143H143V55H144H144V57H145H145V55H146H146V54H147H147V39H148H148V39H149H149V39H150H150V57H151H151V55H152H152V57H153H153V58H154H154V56H155H155V59H156H156V39H157H157V39H158H158V39H159H159V51H160H160V54H161H161V55H162H162V53H163H163V51H164H164V51H165H165V51H166H166V55H167H167V55H168H168V53H169H169V52H170H170V55H171H171V52H172H172V55H173H173V52H174H174V54H175H175V54H176H176V39H177H177V39H178H178V39H179H179V54H180H180V54H181H181V54H182H182V53H183H183V52H184H184V57H185H185V54H186H186V55H187H187V57H188H188V53H189H189V54H190H190V57H191H191V54H192H192V56H193H193V57H194H194V56H195H195V56H196H196V54H197H197V55H198H198V54H199H199V55H200H200V39H201H201V39H202H202V39H203H203V52H204H204V52H205H205V55H206H206V55H207H207V52H208H208V55H209H209V55H210H210V52H211H211V53H212H212V55H213H213V51H214H214V51H215H215V39H216H216V39H217H217V39H218H218V56H219H219V56H220H220V54H221H221V54H222H222V56H223H223V53H224H224V39H225H225V39H226H226V39H227H227V56H228H228V55H229H229V55H230H230V54H231H231V57H232H232V54H233H233V57H234H234V39H235H235V39H236H236V39H237H237V55H238H238V55H239H239V53H240H240V56H241H241V54H242H242V53H243H243V53H244H244V54H245H245V53H246H246V53H247H247V55H248H248V57H249H249V53H250H250V55H251H251V53H252H252V71H251H251V74H250H250V72H249H249V71H248H248V71H247H247V69H246H246V71H245H245V72H244H244V73H243H243V70H242H242V72H241H241V73H240H240V72H239H239V70H238H238V70H237H237V85H236H236V85H235H235V86H234H234V69H233H233V70H232H232V70H231H231V72H230H230V68H229H229V70H228H228V70H227H227V86H226H226V86H225H225V84H224H224V73H223H223V69H222H222V69H221H221V71H220H220V69H219H219V69H218H218V86H217H217V85H216H216V86H215H215V73H214H214V72H213H213V72H212H212V70H211H211V71H210H210V69H209H209V73H208H208V70H207H207V74H206H206V74H205H205V71H204H204V74H203H203V84H202H202V85H201H201V84H200H200V73H199H199V70H198H198V71H197H197V71H196H196V70H195H195V71H194H194V72H193H193V71H192H192V70H191H191V69H190H190V68H189H189V69H188H188V71H187H187V70H186H186V72H185H185V70H184H184V72H183H183V73H182H182V71H181H181V69H180H180V71H179H179V86H178H178V85H177H177V85H176H176V71H175H175V70H174H174V72H173H173V74H172H172V74H171H171V71H170H170V72H169H169V72H168H168V73H167H167V72H166H166V70H165H165V72H164H164V74H163H163V74H162H162V71H161H161V74H160H160V71H159H159V85H158H158V85H157H157V85H156H156V68H155H155V68H154H154V70H153H153V70H152H152V71H151H151V70H150H150V85H149H149V86H148H148V84H147H147V69H146H146V71H145H145V70H144H144V71H143H143V70H142H142V71H141H141V69H140H140V85H139H139V84H138H138V85H137H137V70H136H136V69H135H135V73H134H134V69H133H133V69H132H132V73H131H131V72H130H130V86H129H129V84H128H128V86H127H127V69H126H126V70H125H125V73H124H124V72H123H123V71H122H122V69H121H121V72H120H120V81H119H119V82H118H118V82H117H117V68H116H116V67H115H115V70H114H114V70H113H113V69H112H112V68H111H111V69H110H110V71H109H109V69H108H108V70H107H107V71H106H106V70H105H105V68H104H104V70H103H103V68H102H102V72H101H101V85H100H100V86H99H99V85H98H98V73H97H97V72H96H96V71H95H95V70H94H94V72H93H93V71H92H92V71H91H91V70H90H90V71H89H89V73H88H88V73H87H87V72H86H86V74H85H85V73H84H84V74H83H83V72H82H82V74H81H81V86H80H80V85H79H79V84H78H78V74H77H77V69H76H76V72H75H75V72H74H74V73H73H73V69H72H72V70H71H71V74H70H70V70H69H69V69H68H68V69H67H67V72H66H66V72H65H65V71H64H64V69H63H63V71H62H62V84H61H61V84H60H60V85H59H59V72H58H58V72H57H57V72H56H56V69H55H55V71H54H54V69H53H53V72H52H52V70H51H51V70H50H50V71H49H49V71H48H48V69H47H47V70H46H46V70H45H45V74H44H44V72H43H43V71H42H42V82H41H41V82H40H40V81H39H39V68H38H38V69H37H37V70H36H36V69H35H35V68H34H34V67H33H33V68H32H32V70H31H31V69H30H30V69H29H29V70H28H28V69H27H27V70H26H26V69H25H25V72H24H24V70H23H23V82H22H22V82H21H21V82H20H20V72H19H19V73H18H18V70H17H17V72H16H16V72H15H15V73H14H14V71H13H13V70H12H12V70H11H11V69H10H10V73H9H9V75H8H8V70H7H7V74H6H6V71H5H5V74H4H4V73H3H3V85H2H2V85H1H1V85H0H0Z" fill="#5e4d28" shape-rendering="crispEdges"/><path d="M0 110H1V110H2H2V110H3H3V122H4H4V120H5H5V120H6H6V123H7H7V123H8H8V124H9H9V124H10H10V122H11H11V120H12H12V124H13H13V122H14H14V119H15H15V124H16H16V124H17H17V122H18H18V121H19H19V124H20H20V110H21H21V110H22H22V110H23H23V122H24H24V121H25H25V124H26H26V122H27H27V125H28H28V124H29H29V122H30H30V126H31H31V124H32H32V125H33H33V125H34H34V126H35H35V126H36H36V119H37H37V125H38H38V126H39H39V107H40H40V107H41H41V107H42H42V123H43H43V122H44H44V121H45H45V117H46H46V121H47H47V123H48H48V125H49H49V120H50H50V123H51H51V124H52H52V121H53H53V124H54H54V123H55H55V124H56H56V122H57H57V124H58H58V125H59H59V107H60H60V107H61H61V107H62H62V123H63H63V125H64H64V124H65H65V124H66H66V123H67H67V121H68H68V122H69H69V122H70H70V121H71H71V120H72H72V121H73H73V124H74H74V120H75H75V120H76H76V121H77H77V122H78H78V107H79H79V107H80H80V107H81H81V124H82H82V121H83H83V123H84H84V123H85H85V124H86H86V123H87H87V120H88H88V120H89H89V125H90H90V119H91H91V122H92H92V124H93H93V121H94H94V123H95H95V124H96H96V124H97H97V123H98H98V107H99H99V107H100H100V107H101H101V122H102H102V120H103H103V122H104H104V123H105H105V122H106H106V123H107H107V123H108H108V124H109H109V125H110H110V125H111H111V125H112H112V123H113H113V123H114H114V125H115H115V123H116H116V126H117H117V107H118H118V107H119H119V107H120H120V122H121H121V122H122H122V120H123H123V123H124H124V119H125H125V124H126H126V120H127H127V107H128H128V107H129H129V107H130H130V124H131H131V125H132H132V125H133H133V124H134H134V124H135H135V124H136H136V121H137H137V110H138H138V110H139H139V110H140H140V122H141H141V123H142H142V123H143H143V124H144H144V123H145H145V122H146H146V123H147H147V107H148H148V107H149H149V107H150H150V123H151H151V126H152H152V126H153H153V126H154H154V126H155H155V124H156H156V107H157H157V107H158H158V107H159H159V121H160H160V119H161H161V120H162H162V122H163H163V120H164H164V118H165H165V119H166H166V118H167H167V121H168H168V124H169H169V121H170H170V120H171H171V122H172H172V120H173H173V122H174H174V121H175H175V123H176H176V107H177H177V107H178H178V107H179H179V123H180H180V124H181H181V122H182H182V122H183H183V122H184H184V123H185H185V120H186H186V123H187H187V124H188H188V124H189H189V124H190H190V121H191H191V124H192H192V123H193H193V122H194H194V122H195H195V123H196H196V120H197H197V124H198H198V123H199H199V123H200H200V110H201H201V110H202H202V110H203H203V119H204H204V122H205H205V120H206H206V123H207H207V120H208H208V121H209H209V121H210H210V123H211H211V120H212H212V122H213H213V120H214H214V120H215H215V107H216H216V107H217H217V107H218H218V123H219H219V124H220H220V123H221H221V122H222H222V118H223H223V121H224H224V107H225H225V107H226H226V107H227H227V122H228H228V124H229H229V121H230H230V118H231H231V121H232H232V122H233H233V125H234H234V107H235H235V107H236H236V107H237H237V121H238H238V123H239H239V121H240H240V121H241H241V118H242H242V122H243H243V124H244H244V121H245H245V122H246H246V121H247H247V121H248H248V118H249H249V124H250H250V119H251H251V121H252H252V137H251H251V137H250H250V137H249H249V141H248H248V138H247H247V141H246H246V140H245H245V140H244H244V138H243H243V141H242H242V141H241H241V136H240H240V138H239H239V138H238H238V140H237H237V154H236H236V153H235H235V152H234H234V138H233H233V138H232H232V140H231H231V140H230H230V136H229H229V138H228H228V140H227H227V152H226H226V152H225H225V153H224H224V140H223H223V141H222H222V141H221H221V139H220H220V140H219H219V137H218H218V154H217H217V154H216H216V152H215H215V139H214H214V137H213H213V142H212H212V141H211H211V137H210H210V139H209H209V140H208H208V139H207H207V140H206H206V141H205H205V139H204H204V139H203H203V150H202H202V149H201H201V150H200H200V138H199H199V141H198H198V139H197H197V140H196H196V140H195H195V137H194H194V136H193H193V138H192H192V139H191H191V137H190H190V137H189H189V137H188H188V138H187H187V138H186H186V138H185H185V138H184H184V138H183H183V139H182H182V137H181H181V140H180H180V138H179H179V153H178H178V154H177H177V153H176H176V138H175H175V139H174H174V138H173H173V142H172H172V139H171H171V141H170H170V141H169H169V138H168H168V141H167H167V142H166H166V139H165H165V142H164H164V143H163H163V138H162H162V139H161H161V140H160H160V139H159H159V152H158H158V154H157H157V152H156H156V138H155H155V137H154H154V135H153H153V135H152H152V136H151H151V136H150H150V153H149H149V153H148H148V154H147H147V138H146H146V137H145H145V136H144H144V137H143H143V137H142H142V137H141H141V138H140H140V149H139H139V150H138H138V149H137H137V139H136H136V137H135H135V137H134H134V139H133H133V137H132H132V138H131H131V141H130H130V152H129H129V154H128H128V154H127H127V141H126H126V141H125H125V139H124H124V138H123H123V138H122H122V139H121H121V139H120H120V153H119H119V153H118H118V152H117H117V137H116H116V136H115H115V138H114H114V137H113H113V136H112H112V135H111H111V137H110H110V136H109H109V136H108H108V136H107H107V137H106H106V137H105H105V138H104H104V137H103H103V139H102H102V139H101H101V153H100H100V152H99H99V152H98H98V139H97H97V140H96H96V138H95H95V137H94H94V136H93H93V138H92H92V138H91H91V139H90H90V139H89H89V138H88H88V140H87H87V140H86H86V137H85H85V140H84H84V139H83H83V139H82H82V140H81H81V152H80H80V152H79H79V153H78H78V137H77H77V141H76H76V141H75H75V141H74H74V140H73H73V139H72H72V139H71H71V139H70H70V140H69H69V138H68H68V140H67H67V138H66H66V140H65H65V137H64H64V139H63H63V138H62H62V152H61H61V153H60H60V154H59H59V139H58H58V139H57H57V136H56H56V140H55H55V138H54H54V138H53H53V139H52H52V140H51H51V136H50H50V141H49H49V139H48H48V136H47H47V138H46H46V141H45H45V141H44H44V138H43H43V142H42H42V153H41H41V153H40H40V152H39H39V136H38H38V137H37H37V140H36H36V137H35H35V137H34H34V138H33H33V137H32H32V137H31H31V138H30H30V137H29H29V138H28H28V136H27H27V138H26H26V137H25H25V139H24H24V140H23H23V149H22H22V149H21H21V150H20H20V140H19H19V137H18H18V137H17H17V138H16H16V139H15H15V142H14H14V137H13H13V142H12H12V137H11H11V139H10H10V141H9H9V142H8H8V142H7H7V140H6H6V141H5H5V141H4H4V142H3H3V150H2H2V149H1H1V150H0H0Z" fill="#5e4d28" shape-rendering="crispEdges"/></g><g id="w4"><rect x="0" y="96.3" width="158" height="1" fill="rgba(20,70,55,0.2)"/><rect x="0" y="62.199999999999996" width="158" height="1.3" fill="#1f4c40"/><rect x="0" y="129.9" width="158" height="1.3" fill="#1f4c40"/><path d="M0 61H1V58H2H2V57H3H3V56H4H4V55H5H5V54H6H6V54H7H7V55H8H8V56H9H9V57H10H10V56H11H11V56H12H12V57H13H13V57H14H14V56H15H15V54H16H16V54H17H17V55H18H18V56H19H19V55H20H20V54H21H21V56H22H22V58H23H23V59H24H24V60H25H25V61H26H26V62H27H27V62H28H28V62H29H29V61H30H30V59H31H31V57H32H32V54H33H33V54H34H34V56H35H35V56H36H36V55H37H37V54H38H38V55H39H39V56H40H40V57H41H41V57H42H42V57H43H43V56H44H44V57H45H45V56H46H46V54H47H47V54H48H48V55H49H49V56H50H50V55H51H51V54H52H52V55H53H53V55H54H54V57H55H55V57H56H56V58H57H57V60H58H58V62H59H59V61H60H60V59H61H61V57H62H62V56H63H63V54H64H64V55H65H65V55H66H66V55H67H67V55H68H68V54H69H69V55H70H70V56H71H71V56H72H72V57H73H73V58H74H74V60H75H75V62H76H76V62H77H77V61H78H78V59H79H79V58H80H80V56H81H81V54H82H82V54H83H83V55H84H84V56H85H85V55H86H86V54H87H87V54H88H88V55H89H89V55H90H90V56H91H91V55H92H92V57H93H93V59H94H94V60H95H95V61H96H96V62H97H97V62H98H98V61H99H99V59H100H100V57H101H101V55H102H102V54H103H103V55H104H104V56H105H105V55H106H106V54H107H107V54H108H108V56H109H109V57H110H110V57H111H111V58H112H112V60H113H113V62H114H114V62H115H115V62H116H116V62H117H117V61H118H118V59H119H119V57H120H120V55H121H121V55H122H122V55H123H123V55H124H124V54H125H125V54H126H126V54H127H127V56H128H128V56H129H129V56H130H130V57H131H131V58H132H132V60H133H133V61H134H134V62H135H135V62H136H136V61H137H137V59H138H138V57H139H139V54H140H140V54H141H141V55H142H142V55H143H143V54H144H144V54H145H145V55H146H146V56H147H147V56H148H148V56H149H149V57H150H150V59H151H151V60H152H152V61H153H153V62H154H154V62H155H155V62H156H156V61H157H157V58H158H158V67H157H157V65H156H156V64H155H155V64H154H154V64H153H153V64H152H152V66H151H151V67H150H150V69H149H149V70H148H148V70H147H147V70H146H146V71H145H145V72H144H144V71H143H143V71H142H142V70H141H141V72H140H140V71H139H139V69H138H138V67H137H137V65H136H136V64H135H135V64H134H134V64H133H133V65H132H132V67H131H131V69H130H130V71H129H129V70H128H128V70H127H127V72H126H126V72H125H125V72H124H124V70H123H123V70H122H122V71H121H121V71H120H120V69H119H119V66H118H118V65H117H117V64H116H116V64H115H115V64H114H114V64H113H113V66H112H112V67H111H111V68H110H110V68H109H109V70H108H108V71H107H107V72H106H106V71H105H105V70H104H104V71H103H103V72H102H102V71H101H101V69H100H100V67H99H99V65H98H98V64H97H97V64H96H96V64H95H95V66H94H94V67H93H93V70H92H92V71H91H91V70H90H90V71H89H89V71H88H88V72H87H87V72H86H86V70H85H85V70H84H84V71H83H83V72H82H82V72H81H81V70H80H80V68H79H79V67H78H78V65H77H77V64H76H76V64H75H75V66H74H74V67H73H73V69H72H72V69H71H71V70H70H70V71H69H69V72H68H68V71H67H67V71H66H66V71H65H65V71H64H64V72H63H63V70H62H62V68H61H61V67H60H60V65H59H59V64H58H58V66H57H57V68H56H56V69H55H55V69H54H54V71H53H53V71H52H52V72H51H51V70H50H50V70H49H49V71H48H48V72H47H47V72H46H46V70H45H45V69H44H44V70H43H43V69H42H42V69H41H41V69H40H40V70H39H39V71H38H38V72H37H37V70H36H36V70H35H35V70H34H34V72H33H33V71H32H32V69H31H31V66H30H30V65H29H29V64H28H28V64H27H27V64H26H26V64H25H25V66H24H24V67H23H23V68H22H22V70H21H21V71H20H20V71H19H19V70H18H18V71H17H17V72H16H16V72H15H15V70H14H14V69H13H13V69H12H12V69H11H11V69H10H10V69H9H9V69H8H8V71H7H7V71H6H6V71H5H5V71H4H4V69H3H3V69H2H2V68H1H1V65H0H0Z" fill="#1f4c40" shape-rendering="crispEdges"/><path d="M0 129H1V126H2H2V124H3H3V124H4H4V123H5H5V122H6H6V122H7H7V122H8H8V124H9H9V124H10H10V124H11H11V124H12H12V124H13H13V125H14H14V124H15H15V122H16H16V122H17H17V123H18H18V124H19H19V123H20H20V122H21H21V124H22H22V125H23H23V127H24H24V128H25H25V129H26H26V130H27H27V130H28H28V130H29H29V129H30H30V127H31H31V124H32H32V122H33H33V122H34H34V124H35H35V123H36H36V123H37H37V122H38H38V123H39H39V124H40H40V125H41H41V124H42H42V125H43H43V124H44H44V125H45H45V124H46H46V122H47H47V122H48H48V123H49H49V123H50H50V123H51H51V122H52H52V122H53H53V123H54H54V125H55H55V125H56H56V126H57H57V127H58H58V129H59H59V128H60H60V127H61H61V125H62H62V124H63H63V122H64H64V122H65H65V123H66H66V123H67H67V122H68H68V122H69H69V122H70H70V124H71H71V124H72H72V125H73H73V126H74H74V127H75H75V129H76H76V130H77H77V128H78H78V126H79H79V125H80H80V124H81H81V122H82H82V122H83H83V122H84H84V124H85H85V123H86H86V122H87H87V122H88H88V123H89H89V123H90H90V123H91H91V123H92H92V124H93H93V126H94H94V128H95H95V129H96H96V130H97H97V130H98H98V129H99H99V127H100H100V125H101H101V122H102H102V122H103H103V123H104H104V124H105H105V122H106H106V122H107H107V122H108H108V124H109H109V125H110H110V125H111H111V126H112H112V127H113H113V129H114H114V130H115H115V130H116H116V130H117H117V129H118H118V127H119H119V125H120H120V123H121H121V122H122H122V123H123H123V123H124H124V122H125H125V121H126H126V122H127H127V123H128H128V123H129H129V123H130H130V124H131H131V126H132H132V128H133H133V129H134H134V130H135H135V130H136H136V129H137H137V127H138H138V125H139H139V122H140H140V122H141H141V123H142H142V123H143H143V122H144H144V121H145H145V123H146H146V124H147H147V123H148H148V123H149H149V125H150H150V126H151H151V128H152H152V129H153H153V130H154H154V130H155H155V130H156H156V129H157H157V126H158H158V135H157H157V132H156H156V131H155H155V131H154H154V131H153H153V132H152H152V133H151H151V135H150H150V136H149H149V138H148H148V138H147H147V138H146H146V138H145H145V140H144H144V139H143H143V139H142H142V138H141H141V140H140H140V139H139H139V136H138H138V134H137H137V132H136H136V131H135H135V131H134H134V132H133H133V133H132H132V135H131H131V137H130H130V138H129H129V138H128H128V137H127H127V139H126H126V140H125H125V140H124H124V138H123H123V138H122H122V138H121H121V139H120H120V136H119H119V134H118H118V132H117H117V131H116H116V131H115H115V131H114H114V132H113H113V134H112H112V135H111H111V136H110H110V136H109H109V137H108H108V139H107H107V139H106H106V139H105H105V137H104H104V138H103H103V139H102H102V139H101H101V137H100H100V134H99H99V132H98H98V131H97H97V131H96H96V132H95H95V133H94H94V135H93H93V137H92H92V138H91H91V138H90H90V138H89H89V139H88H88V140H87H87V140H86H86V138H85H85V137H84H84V139H83H83V140H82H82V140H81H81V137H80H80V136H79H79V135H78H78V133H77H77V131H76H76V132H75H75V134H74H74V135H73H73V136H72H72V137H71H71V138H70H70V138H69H69V139H68H68V139H67H67V138H66H66V139H65H65V139H64H64V139H63H63V138H62H62V136H61H61V135H60H60V133H59H59V132H58H58V134H57H57V135H56H56V136H55H55V136H54H54V138H53H53V138H52H52V140H51H51V138H50H50V137H49H49V138H48H48V140H47H47V140H46H46V137H45H45V137H44H44V137H43H43V137H42H42V137H41H41V136H40H40V138H39H39V138H38H38V140H37H37V138H36H36V138H35H35V138H34H34V140H33H33V139H32H32V136H31H31V134H30H30V132H29H29V131H28H28V131H27H27V131H26H26V132H25H25V133H24H24V134H23H23V135H22H22V137H21H21V139H20H20V139H19H19V138H18H18V139H17H17V140H16H16V140H15H15V137H14H14V137H13H13V137H12H12V137H11H11V137H10H10V137H9H9V137H8H8V139H7H7V139H6H6V139H5H5V139H4H4V137H3H3V137H2H2V135H1H1V132H0H0Z" fill="#1f4c40" shape-rendering="crispEdges"/></g><g id="w5"><rect x="0" y="96.3" width="314" height="1" fill="rgba(20,70,55,0.2)"/><rect x="0" y="62.199999999999996" width="314" height="1.3" fill="#1f4c40"/><rect x="0" y="129.9" width="314" height="1.3" fill="#1f4c40"/><path d="M0 61H1V58H2H2V57H3H3V56H4H4V55H5H5V54H6H6V54H7H7V55H8H8V56H9H9V57H10H10V56H11H11V56H12H12V57H13H13V57H14H14V56H15H15V54H16H16V54H17H17V55H18H18V56H19H19V55H20H20V54H21H21V56H22H22V58H23H23V59H24H24V60H25H25V61H26H26V62H27H27V62H28H28V62H29H29V62H30H30V61H31H31V59H32H32V56H33H33V55H34H34V55H35H35V56H36H36V55H37H37V55H38H38V55H39H39V57H40H40V57H41H41V57H42H42V56H43H43V56H44H44V56H45H45V56H46H46V55H47H47V54H48H48V55H49H49V56H50H50V56H51H51V56H52H52V57H53H53V59H54H54V60H55H55V61H56H56V62H57H57V62H58H58V61H59H59V59H60H60V58H61H61V57H62H62V54H63H63V54H64H64V55H65H65V56H66H66V56H67H67V55H68H68V54H69H69V54H70H70V56H71H71V55H72H72V54H73H73V54H74H74V55H75H75V56H76H76V56H77H77V55H78H78V57H79H79V59H80H80V60H81H81V61H82H82V61H83H83V58H84H84V57H85H85V56H86H86V56H87H87V55H88H88V54H89H89V55H90H90V56H91H91V55H92H92V54H93H93V54H94H94V55H95H95V56H96H96V55H97H97V54H98H98V54H99H99V55H100H100V57H101H101V57H102H102V58H103H103V60H104H104V62H105H105V62H106H106V62H107H107V62H108H108V62H109H109V62H110H110V62H111H111V62H112H112V62H113H113V62H114H114V62H115H115V62H116H116V62H117H117V62H118H118V61H119H119V59H120H120V56H121H121V55H122H122V56H123H123V56H124H124V55H125H125V54H126H126V54H127H127V56H128H128V56H129H129V55H130H130V54H131H131V55H132H132V55H133H133V55H134H134V54H135H135V54H136H136V55H137H137V56H138H138V55H139H139V54H140H140V54H141H141V55H142H142V56H143H143V55H144H144V54H145H145V54H146H146V56H147H147V56H148H148V56H149H149V56H150H150V57H151H151V57H152H152V56H153H153V55H154H154V55H155H155V55H156H156V55H157H157V56H158H158V55H159H159V54H160H160V55H161H161V55H162H162V55H163H163V54H164H164V54H165H165V55H166H166V56H167H167V55H168H168V54H169H169V54H170H170V55H171H171V56H172H172V55H173H173V55H174H174V54H175H175V55H176H176V56H177H177V55H178H178V54H179H179V55H180H180V56H181H181V55H182H182V55H183H183V54H184H184V55H185H185V55H186H186V56H187H187V54H188H188V55H189H189V56H190H190V58H191H191V59H192H192V60H193H193V61H194H194V62H195H195V62H196H196V61H197H197V58H198H198V58H199H199V56H200H200V55H201H201V54H202H202V55H203H203V56H204H204V55H205H205V54H206H206V54H207H207V55H208H208V56H209H209V57H210H210V57H211H211V57H212H212V57H213H213V57H214H214V56H215H215V54H216H216V54H217H217V55H218H218V55H219H219V55H220H220V55H221H221V54H222H222V55H223H223V56H224H224V55H225H225V54H226H226V54H227H227V57H228H228V58H229H229V58H230H230V59H231H231V61H232H232V62H233H233V62H234H234V62H235H235V61H236H236V59H237H237V57H238H238V55H239H239V54H240H240V54H241H241V55H242H242V56H243H243V55H244H244V54H245H245V55H246H246V57H247H247V57H248H248V57H249H249V57H250H250V56H251H251V56H252H252V56H253H253V55H254H254V54H255H255V55H256H256V56H257H257V55H258H258V54H259H259V55H260H260V56H261H261V57H262H262V58H263H263V58H264H264V60H265H265V62H266H266V61H267H267V59H268H268V58H269H269V56H270H270V54H271H271V54H272H272V56H273H273V56H274H274V55H275H275V54H276H276V55H277H277V55H278H278V55H279H279V55H280H280V54H281H281V55H282H282V56H283H283V57H284H284V57H285H285V57H286H286V57H287H287V57H288H288V55H289H289V54H290H290V55H291H291V55H292H292V56H293H293V55H294H294V54H295H295V54H296H296V55H297H297V56H298H298V55H299H299V54H300H300V54H301H301V55H302H302V56H303H303V55H304H304V54H305H305V55H306H306V57H307H307V58H308H308V58H309H309V59H310H310V61H311H311V62H312H312V62H313H313V61H314H314V65H313H313V64H312H312V64H311H311V64H310H310V66H309H309V68H308H308V68H307H307V69H306H306V70H305H305V71H304H304V71H303H303V70H302H302V71H301H301V71H300H300V71H299H299V71H298H298V70H297H297V70H296H296V72H295H295V71H294H294V71H293H293V70H292H292V71H291H291V71H290H290V71H289H289V70H288H288V69H287H287V69H286H286V69H285H285V69H284H284V69H283H283V69H282H282V71H281H281V71H280H280V70H279H279V70H278H278V71H277H277V71H276H276V72H275H275V71H274H274V70H273H273V70H272H272V72H271H271V72H270H270V71H269H269V68H268H268V67H267H267V65H266H266V64H265H265V66H264H264V67H263H263V68H262H262V69H261H261V70H260H260V71H259H259V72H258H258V71H257H257V70H256H256V71H255H255V71H254H254V71H253H253V70H252H252V70H251H251V69H250H250V69H249H249V69H248H248V69H247H247V69H246H246V70H245H245V72H244H244V71H243H243V70H242H242V70H241H241V71H240H240V72H239H239V71H238H238V68H237H237V66H236H236V65H235H235V64H234H234V64H233H233V64H232H232V64H231H231V66H230H230V67H229H229V68H228H228V69H227H227V72H226H226V71H225H225V71H224H224V70H223H223V71H222H222V71H221H221V71H220H220V70H219H219V71H218H218V71H217H217V71H216H216V71H215H215V70H214H214V69H213H213V69H212H212V69H211H211V69H210H210V69H209H209V70H208H208V71H207H207V72H206H206V71H205H205V71H204H204V70H203H203V71H202H202V71H201H201V71H200H200V69H199H199V68H198H198V67H197H197V65H196H196V64H195H195V64H194H194V64H193H193V66H192H192V67H191H191V68H190H190V70H189H189V71H188H188V71H187H187V70H186H186V70H185H185V71H184H184V72H183H183V71H182H182V70H181H181V70H180H180V72H179H179V72H178H178V71H177H177V71H176H176V71H175H175V72H174H174V71H173H173V71H172H172V70H171H171V70H170H170V72H169H169V71H168H168V70H167H167V70H166H166V71H165H165V72H164H164V72H163H163V71H162H162V71H161H161V71H160H160V72H159H159V71H158H158V70H157H157V71H156H156V71H155H155V71H154H154V70H153H153V70H152H152V68H151H151V69H150H150V69H149H149V70H148H148V70H147H147V70H146H146V71H145H145V72H144H144V71H143H143V70H142H142V71H141H141V72H140H140V73H139H139V71H138H138V70H137H137V71H136H136V72H135H135V72H134H134V70H133H133V70H132H132V71H131H131V72H130H130V71H129H129V70H128H128V70H127H127V72H126H126V72H125H125V70H124H124V70H123H123V70H122H122V70H121H121V69H120H120V67H119H119V65H118H118V64H117H117V64H116H116V64H115H115V64H114H114V64H113H113V64H112H112V64H111H111V64H110H110V64H109H109V64H108H108V64H107H107V64H106H106V64H105H105V64H104H104V66H103H103V68H102H102V68H101H101V69H100H100V70H99H99V72H98H98V72H97H97V71H96H96V70H95H95V72H94H94V72H93H93V72H92H92V71H91H91V70H90H90V71H89H89V72H88H88V71H87H87V70H86H86V70H85H85V69H84H84V68H83H83V65H82H82V64H81H81V66H80H80V67H79H79V69H78H78V71H77H77V70H76H76V70H75H75V71H74H74V72H73H73V71H72H72V70H71H71V70H70H70V71H69H69V73H68H68V71H67H67V70H66H66V70H65H65V72H64H64V73H63H63V71H62H62V69H61H61V68H60H60V67H59H59V65H58H58V64H57H57V64H56H56V64H55H55V66H54H54V67H53H53V69H52H52V69H51H51V70H50H50V70H49H49V71H48H48V72H47H47V71H46H46V70H45H45V70H44H44V70H43H43V70H42H42V69H41H41V69H40H40V69H39H39V71H38H38V71H37H37V71H36H36V70H35H35V71H34H34V71H33H33V69H32H32V67H31H31V65H30H30V64H29H29V64H28H28V64H27H27V64H26H26V64H25H25V66H24H24V67H23H23V68H22H22V70H21H21V71H20H20V71H19H19V70H18H18V71H17H17V72H16H16V72H15H15V70H14H14V69H13H13V69H12H12V69H11H11V69H10H10V69H9H9V69H8H8V71H7H7V71H6H6V71H5H5V71H4H4V69H3H3V69H2H2V68H1H1V65H0H0Z" fill="#1f4c40" shape-rendering="crispEdges"/><path d="M0 129H1V126H2H2V124H3H3V124H4H4V123H5H5V122H6H6V122H7H7V122H8H8V124H9H9V124H10H10V124H11H11V124H12H12V124H13H13V125H14H14V124H15H15V122H16H16V122H17H17V123H18H18V124H19H19V123H20H20V122H21H21V124H22H22V125H23H23V127H24H24V128H25H25V129H26H26V130H27H27V130H28H28V130H29H29V130H30H30V129H31H31V127H32H32V124H33H33V122H34H34V123H35H35V124H36H36V123H37H37V122H38H38V123H39H39V125H40H40V125H41H41V125H42H42V124H43H43V124H44H44V123H45H45V124H46H46V123H47H47V122H48H48V123H49H49V123H50H50V124H51H51V124H52H52V124H53H53V126H54H54V128H55H55V129H56H56V130H57H57V130H58H58V128H59H59V126H60H60V126H61H61V124H62H62V122H63H63V121H64H64V122H65H65V124H66H66V123H67H67V122H68H68V121H69H69V122H70H70V123H71H71V123H72H72V122H73H73V122H74H74V122H75H75V123H76H76V124H77H77V123H78H78V125H79H79V126H80H80V128H81H81V129H82H82V129H83H83V126H84H84V125H85H85V124H86H86V124H87H87V122H88H88V122H89H89V122H90H90V123H91H91V123H92H92V122H93H93V121H94H94V122H95H95V123H96H96V123H97H97V121H98H98V122H99H99V123H100H100V124H101H101V125H102H102V126H103H103V127H104H104V129H105H105V130H106H106V130H107H107V130H108H108V130H109H109V130H110H110V130H111H111V130H112H112V130H113H113V130H114H114V130H115H115V130H116H116V130H117H117V130H118H118V129H119H119V127H120H120V124H121H121V123H122H122V123H123H123V123H124H124V123H125H125V122H126H126V122H127H127V123H128H128V124H129H129V122H130H130V122H131H131V122H132H132V123H133H133V123H134H134V122H135H135V121H136H136V122H137H137V123H138H138V123H139H139V121H140H140V122H141H141V122H142H142V124H143H143V123H144H144V122H145H145V122H146H146V123H147H147V123H148H148V123H149H149V124H150H150V124H151H151V125H152H152V124H153H153V123H154H154V122H155H155V122H156H156V123H157H157V124H158H158V122H159H159V121H160H160V123H161H161V123H162H162V123H163H163V122H164H164V122H165H165V122H166H166V123H167H167V123H168H168V122H169H169V122H170H170V123H171H171V123H172H172V122H173H173V122H174H174V122H175H175V123H176H176V123H177H177V123H178H178V121H179H179V122H180H180V123H181H181V123H182H182V123H183H183V121H184H184V122H185H185V123H186H186V123H187H187V122H188H188V122H189H189V124H190H190V126H191H191V126H192H192V127H193H193V129H194H194V130H195H195V130H196H196V128H197H197V126H198H198V125H199H199V124H200H200V122H201H201V122H202H202V123H203H203V124H204H204V123H205H205V122H206H206V122H207H207V122H208H208V123H209H209V124H210H210V124H211H211V124H212H212V125H213H213V125H214H214V124H215H215V122H216H216V122H217H217V122H218H218V123H219H219V123H220H220V122H221H221V122H222H222V122H223H223V123H224H224V123H225H225V122H226H226V122H227H227V125H228H228V125H229H229V126H230H230V127H231H231V129H232H232V130H233H233V130H234H234V130H235H235V129H236H236V127H237H237V125H238H238V123H239H239V121H240H240V122H241H241V123H242H242V124H243H243V123H244H244V122H245H245V123H246H246V124H247H247V125H248H248V125H249H249V124H250H250V124H251H251V123H252H252V123H253H253V122H254H254V122H255H255V123H256H256V123H257H257V123H258H258V122H259H259V122H260H260V123H261H261V124H262H262V125H263H263V126H264H264V127H265H265V129H266H266V128H267H267V126H268H268V126H269H269V123H270H270V122H271H271V121H272H272V123H273H273V123H274H274V123H275H275V122H276H276V122H277H277V123H278H278V123H279H279V123H280H280V122H281H281V123H282H282V124H283H283V125H284H284V125H285H285V124H286H286V125H287H287V125H288H288V123H289H289V122H290H290V122H291H291V123H292H292V123H293H293V123H294H294V122H295H295V121H296H296V123H297H297V124H298H298V122H299H299V122H300H300V122H301H301V123H302H302V124H303H303V122H304H304V122H305H305V123H306H306V124H307H307V125H308H308V126H309H309V127H310H310V129H311H311V130H312H312V130H313H313V129H314H314V133H313H313V131H312H312V131H311H311V132H310H310V134H309H309V135H308H308V136H307H307V137H306H306V138H305H305V139H304H304V138H303H303V137H302H302V138H301H301V139H300H300V139H299H299V139H298H298V138H297H297V138H296H296V139H295H295V139H294H294V139H293H293V138H292H292V139H291H291V139H290H290V139H289H289V138H288H288V137H287H287V136H286H286V137H285H285V137H284H284V137H283H283V137H282H282V138H281H281V139H280H280V138H279H279V138H278H278V139H277H277V138H276H276V139H275H275V139H274H274V137H273H273V138H272H272V139H271H271V139H270H270V138H269H269V135H268H268V135H267H267V133H266H266V132H265H265V134H264H264V135H263H263V136H262H262V136H261H261V138H260H260V139H259H259V140H258H258V139H257H257V138H256H256V138H255H255V139H254H254V139H253H253V138H252H252V137H251H251V137H250H250V137H249H249V136H248H248V136H247H247V137H246H246V138H245H245V140H244H244V138H243H243V137H242H242V138H241H241V139H240H240V140H239H239V138H238H238V136H237H237V134H236H236V133H235H235V131H234H234V131H233H233V131H232H232V132H231H231V134H230H230V135H229H229V136H228H228V136H227H227V139H226H226V139H225H225V138H224H224V138H223H223V139H222H222V139H221H221V139H220H220V138H219H219V138H218H218V138H217H217V139H216H216V139H215H215V138H214H214V137H213H213V137H212H212V137H211H211V137H210H210V137H209H209V138H208H208V139H207H207V139H206H206V139H205H205V138H204H204V137H203H203V139H202H202V139H201H201V138H200H200V137H199H199V136H198H198V135H197H197V133H196H196V131H195H195V131H194H194V132H193H193V134H192H192V135H191H191V135H190H190V138H189H189V139H188H188V139H187H187V138H186H186V138H185H185V139H184H184V140H183H183V139H182H182V138H181H181V138H180H180V139H179H179V139H178H178V138H177H177V138H176H176V139H175H175V139H174H174V139H173H173V139H172H172V138H171H171V138H170H170V140H169H169V139H168H168V138H167H167V138H166H166V139H165H165V139H164H164V139H163H163V138H162H162V138H161H161V138H160H160V140H159H159V139H158H158V138H157H157V139H156H156V139H155H155V139H154H154V138H153H153V137H152H152V136H151H151V137H150H150V137H149H149V138H148H148V138H147H147V138H146H146V139H145H145V140H144H144V138H143H143V138H142H142V138H141H141V139H140H140V140H139H139V138H138H138V137H137H137V139H136H136V140H135H135V140H134H134V138H133H133V138H132H132V138H131H131V139H130H130V139H129H129V137H128H128V138H127H127V139H126H126V139H125H125V138H124H124V137H123H123V137H122H122V138H121H121V137H120H120V135H119H119V132H118H118V131H117H117V131H116H116V131H115H115V131H114H114V131H113H113V131H112H112V131H111H111V131H110H110V131H109H109V131H108H108V131H107H107V131H106H106V131H105H105V132H104H104V134H103H103V136H102H102V136H101H101V137H100H100V138H99H99V140H98H98V140H97H97V138H96H96V138H95H95V139H94H94V140H93H93V139H92H92V139H91H91V138H90H90V139H89H89V140H88H88V139H87H87V138H86H86V138H85H85V137H84H84V135H83H83V132H82H82V132H81H81V133H80H80V135H79H79V137H78H78V138H77H77V137H76H76V138H75H75V139H74H74V140H73H73V139H72H72V138H71H71V138H70H70V139H69H69V140H68H68V139H67H67V138H66H66V138H65H65V139H64H64V140H63H63V139H62H62V137H61H61V136H60H60V135H59H59V133H58H58V131H57H57V131H56H56V132H55H55V133H54H54V134H53H53V137H52H52V137H51H51V137H50H50V138H49H49V139H48H48V140H47H47V139H46H46V138H45H45V138H44H44V138H43H43V138H42H42V136H41H41V137H40H40V137H39H39V139H38H38V138H37H37V139H36H36V138H35H35V139H34H34V138H33H33V137H32H32V134H31H31V132H30H30V131H29H29V131H28H28V131H27H27V131H26H26V132H25H25V133H24H24V134H23H23V135H22H22V137H21H21V139H20H20V139H19H19V138H18H18V139H17H17V140H16H16V140H15H15V137H14H14V137H13H13V137H12H12V137H11H11V137H10H10V137H9H9V137H8H8V139H7H7V139H6H6V139H5H5V139H4H4V137H3H3V137H2H2V135H1H1V132H0H0Z" fill="#1f4c40" shape-rendering="crispEdges"/></g><g id="w6"><rect x="0" y="96.3" width="252" height="1" fill="rgba(20,70,55,0.2)"/><rect x="0" y="62.199999999999996" width="252" height="1.3" fill="#1f4c40"/><rect x="0" y="129.9" width="252" height="1.3" fill="#1f4c40"/><path d="M0 61H1V58H2H2V57H3H3V56H4H4V55H5H5V54H6H6V54H7H7V55H8H8V56H9H9V57H10H10V56H11H11V56H12H12V57H13H13V57H14H14V56H15H15V54H16H16V54H17H17V55H18H18V56H19H19V55H20H20V54H21H21V56H22H22V58H23H23V59H24H24V60H25H25V61H26H26V62H27H27V62H28H28V62H29H29V62H30H30V61H31H31V59H32H32V56H33H33V55H34H34V55H35H35V56H36H36V55H37H37V55H38H38V55H39H39V57H40H40V57H41H41V57H42H42V56H43H43V56H44H44V56H45H45V56H46H46V55H47H47V54H48H48V55H49H49V56H50H50V56H51H51V56H52H52V57H53H53V59H54H54V60H55H55V61H56H56V62H57H57V62H58H58V61H59H59V59H60H60V58H61H61V57H62H62V54H63H63V54H64H64V55H65H65V56H66H66V56H67H67V55H68H68V54H69H69V54H70H70V56H71H71V55H72H72V54H73H73V54H74H74V55H75H75V56H76H76V56H77H77V55H78H78V57H79H79V59H80H80V60H81H81V61H82H82V61H83H83V58H84H84V57H85H85V56H86H86V56H87H87V55H88H88V54H89H89V55H90H90V56H91H91V55H92H92V54H93H93V54H94H94V55H95H95V56H96H96V55H97H97V54H98H98V54H99H99V55H100H100V57H101H101V57H102H102V58H103H103V60H104H104V62H105H105V62H106H106V62H107H107V62H108H108V62H109H109V62H110H110V62H111H111V62H112H112V62H113H113V62H114H114V62H115H115V62H116H116V62H117H117V62H118H118V61H119H119V59H120H120V56H121H121V55H122H122V56H123H123V56H124H124V55H125H125V54H126H126V54H127H127V56H128H128V56H129H129V55H130H130V54H131H131V55H132H132V55H133H133V55H134H134V54H135H135V54H136H136V55H137H137V56H138H138V55H139H139V54H140H140V54H141H141V55H142H142V56H143H143V55H144H144V54H145H145V54H146H146V56H147H147V56H148H148V56H149H149V56H150H150V57H151H151V57H152H152V56H153H153V55H154H154V55H155H155V55H156H156V55H157H157V56H158H158V55H159H159V54H160H160V55H161H161V55H162H162V55H163H163V54H164H164V54H165H165V55H166H166V56H167H167V55H168H168V54H169H169V54H170H170V55H171H171V56H172H172V55H173H173V55H174H174V54H175H175V55H176H176V56H177H177V55H178H178V54H179H179V55H180H180V56H181H181V55H182H182V55H183H183V54H184H184V55H185H185V55H186H186V56H187H187V54H188H188V55H189H189V56H190H190V58H191H191V59H192H192V60H193H193V61H194H194V62H195H195V62H196H196V61H197H197V58H198H198V58H199H199V56H200H200V55H201H201V54H202H202V55H203H203V56H204H204V55H205H205V54H206H206V54H207H207V55H208H208V56H209H209V57H210H210V57H211H211V57H212H212V57H213H213V57H214H214V56H215H215V54H216H216V54H217H217V55H218H218V55H219H219V55H220H220V55H221H221V54H222H222V55H223H223V56H224H224V55H225H225V54H226H226V54H227H227V57H228H228V58H229H229V58H230H230V59H231H231V61H232H232V62H233H233V62H234H234V62H235H235V61H236H236V59H237H237V57H238H238V55H239H239V54H240H240V54H241H241V55H242H242V56H243H243V55H244H244V54H245H245V55H246H246V57H247H247V57H248H248V57H249H249V57H250H250V56H251H251V56H252H252V70H251H251V69H250H250V69H249H249V69H248H248V69H247H247V69H246H246V70H245H245V72H244H244V71H243H243V70H242H242V70H241H241V71H240H240V72H239H239V71H238H238V68H237H237V66H236H236V65H235H235V64H234H234V64H233H233V64H232H232V64H231H231V66H230H230V67H229H229V68H228H228V69H227H227V72H226H226V71H225H225V71H224H224V70H223H223V71H222H222V71H221H221V71H220H220V70H219H219V71H218H218V71H217H217V71H216H216V71H215H215V70H214H214V69H213H213V69H212H212V69H211H211V69H210H210V69H209H209V70H208H208V71H207H207V72H206H206V71H205H205V71H204H204V70H203H203V71H202H202V71H201H201V71H200H200V69H199H199V68H198H198V67H197H197V65H196H196V64H195H195V64H194H194V64H193H193V66H192H192V67H191H191V68H190H190V70H189H189V71H188H188V71H187H187V70H186H186V70H185H185V71H184H184V72H183H183V71H182H182V70H181H181V70H180H180V72H179H179V72H178H178V71H177H177V71H176H176V71H175H175V72H174H174V71H173H173V71H172H172V70H171H171V70H170H170V72H169H169V71H168H168V70H167H167V70H166H166V71H165H165V72H164H164V72H163H163V71H162H162V71H161H161V71H160H160V72H159H159V71H158H158V70H157H157V71H156H156V71H155H155V71H154H154V70H153H153V70H152H152V68H151H151V69H150H150V69H149H149V70H148H148V70H147H147V70H146H146V71H145H145V72H144H144V71H143H143V70H142H142V71H141H141V72H140H140V73H139H139V71H138H138V70H137H137V71H136H136V72H135H135V72H134H134V70H133H133V70H132H132V71H131H131V72H130H130V71H129H129V70H128H128V70H127H127V72H126H126V72H125H125V70H124H124V70H123H123V70H122H122V70H121H121V69H120H120V67H119H119V65H118H118V64H117H117V64H116H116V64H115H115V64H114H114V64H113H113V64H112H112V64H111H111V64H110H110V64H109H109V64H108H108V64H107H107V64H106H106V64H105H105V64H104H104V66H103H103V68H102H102V68H101H101V69H100H100V70H99H99V72H98H98V72H97H97V71H96H96V70H95H95V72H94H94V72H93H93V72H92H92V71H91H91V70H90H90V71H89H89V72H88H88V71H87H87V70H86H86V70H85H85V69H84H84V68H83H83V65H82H82V64H81H81V66H80H80V67H79H79V69H78H78V71H77H77V70H76H76V70H75H75V71H74H74V72H73H73V71H72H72V70H71H71V70H70H70V71H69H69V73H68H68V71H67H67V70H66H66V70H65H65V72H64H64V73H63H63V71H62H62V69H61H61V68H60H60V67H59H59V65H58H58V64H57H57V64H56H56V64H55H55V66H54H54V67H53H53V69H52H52V69H51H51V70H50H50V70H49H49V71H48H48V72H47H47V71H46H46V70H45H45V70H44H44V70H43H43V70H42H42V69H41H41V69H40H40V69H39H39V71H38H38V71H37H37V71H36H36V70H35H35V71H34H34V71H33H33V69H32H32V67H31H31V65H30H30V64H29H29V64H28H28V64H27H27V64H26H26V64H25H25V66H24H24V67H23H23V68H22H22V70H21H21V71H20H20V71H19H19V70H18H18V71H17H17V72H16H16V72H15H15V70H14H14V69H13H13V69H12H12V69H11H11V69H10H10V69H9H9V69H8H8V71H7H7V71H6H6V71H5H5V71H4H4V69H3H3V69H2H2V68H1H1V65H0H0Z" fill="#1f4c40" shape-rendering="crispEdges"/><path d="M0 129H1V126H2H2V124H3H3V124H4H4V123H5H5V122H6H6V122H7H7V122H8H8V124H9H9V124H10H10V124H11H11V124H12H12V124H13H13V125H14H14V124H15H15V122H16H16V122H17H17V123H18H18V124H19H19V123H20H20V122H21H21V124H22H22V125H23H23V127H24H24V128H25H25V129H26H26V130H27H27V130H28H28V130H29H29V130H30H30V129H31H31V127H32H32V124H33H33V122H34H34V123H35H35V124H36H36V123H37H37V122H38H38V123H39H39V125H40H40V125H41H41V125H42H42V124H43H43V124H44H44V123H45H45V124H46H46V123H47H47V122H48H48V123H49H49V123H50H50V124H51H51V124H52H52V124H53H53V126H54H54V128H55H55V129H56H56V130H57H57V130H58H58V128H59H59V126H60H60V126H61H61V124H62H62V122H63H63V121H64H64V122H65H65V124H66H66V123H67H67V122H68H68V121H69H69V122H70H70V123H71H71V123H72H72V122H73H73V122H74H74V122H75H75V123H76H76V124H77H77V123H78H78V125H79H79V126H80H80V128H81H81V129H82H82V129H83H83V126H84H84V125H85H85V124H86H86V124H87H87V122H88H88V122H89H89V122H90H90V123H91H91V123H92H92V122H93H93V121H94H94V122H95H95V123H96H96V123H97H97V121H98H98V122H99H99V123H100H100V124H101H101V125H102H102V126H103H103V127H104H104V129H105H105V130H106H106V130H107H107V130H108H108V130H109H109V130H110H110V130H111H111V130H112H112V130H113H113V130H114H114V130H115H115V130H116H116V130H117H117V130H118H118V129H119H119V127H120H120V124H121H121V123H122H122V123H123H123V123H124H124V123H125H125V122H126H126V122H127H127V123H128H128V124H129H129V122H130H130V122H131H131V122H132H132V123H133H133V123H134H134V122H135H135V121H136H136V122H137H137V123H138H138V123H139H139V121H140H140V122H141H141V122H142H142V124H143H143V123H144H144V122H145H145V122H146H146V123H147H147V123H148H148V123H149H149V124H150H150V124H151H151V125H152H152V124H153H153V123H154H154V122H155H155V122H156H156V123H157H157V124H158H158V122H159H159V121H160H160V123H161H161V123H162H162V123H163H163V122H164H164V122H165H165V122H166H166V123H167H167V123H168H168V122H169H169V122H170H170V123H171H171V123H172H172V122H173H173V122H174H174V122H175H175V123H176H176V123H177H177V123H178H178V121H179H179V122H180H180V123H181H181V123H182H182V123H183H183V121H184H184V122H185H185V123H186H186V123H187H187V122H188H188V122H189H189V124H190H190V126H191H191V126H192H192V127H193H193V129H194H194V130H195H195V130H196H196V128H197H197V126H198H198V125H199H199V124H200H200V122H201H201V122H202H202V123H203H203V124H204H204V123H205H205V122H206H206V122H207H207V122H208H208V123H209H209V124H210H210V124H211H211V124H212H212V125H213H213V125H214H214V124H215H215V122H216H216V122H217H217V122H218H218V123H219H219V123H220H220V122H221H221V122H222H222V122H223H223V123H224H224V123H225H225V122H226H226V122H227H227V125H228H228V125H229H229V126H230H230V127H231H231V129H232H232V130H233H233V130H234H234V130H235H235V129H236H236V127H237H237V125H238H238V123H239H239V121H240H240V122H241H241V123H242H242V124H243H243V123H244H244V122H245H245V123H246H246V124H247H247V125H248H248V125H249H249V124H250H250V124H251H251V123H252H252V137H251H251V137H250H250V137H249H249V136H248H248V136H247H247V137H246H246V138H245H245V140H244H244V138H243H243V137H242H242V138H241H241V139H240H240V140H239H239V138H238H238V136H237H237V134H236H236V133H235H235V131H234H234V131H233H233V131H232H232V132H231H231V134H230H230V135H229H229V136H228H228V136H227H227V139H226H226V139H225H225V138H224H224V138H223H223V139H222H222V139H221H221V139H220H220V138H219H219V138H218H218V138H217H217V139H216H216V139H215H215V138H214H214V137H213H213V137H212H212V137H211H211V137H210H210V137H209H209V138H208H208V139H207H207V139H206H206V139H205H205V138H204H204V137H203H203V139H202H202V139H201H201V138H200H200V137H199H199V136H198H198V135H197H197V133H196H196V131H195H195V131H194H194V132H193H193V134H192H192V135H191H191V135H190H190V138H189H189V139H188H188V139H187H187V138H186H186V138H185H185V139H184H184V140H183H183V139H182H182V138H181H181V138H180H180V139H179H179V139H178H178V138H177H177V138H176H176V139H175H175V139H174H174V139H173H173V139H172H172V138H171H171V138H170H170V140H169H169V139H168H168V138H167H167V138H166H166V139H165H165V139H164H164V139H163H163V138H162H162V138H161H161V138H160H160V140H159H159V139H158H158V138H157H157V139H156H156V139H155H155V139H154H154V138H153H153V137H152H152V136H151H151V137H150H150V137H149H149V138H148H148V138H147H147V138H146H146V139H145H145V140H144H144V138H143H143V138H142H142V138H141H141V139H140H140V140H139H139V138H138H138V137H137H137V139H136H136V140H135H135V140H134H134V138H133H133V138H132H132V138H131H131V139H130H130V139H129H129V137H128H128V138H127H127V139H126H126V139H125H125V138H124H124V137H123H123V137H122H122V138H121H121V137H120H120V135H119H119V132H118H118V131H117H117V131H116H116V131H115H115V131H114H114V131H113H113V131H112H112V131H111H111V131H110H110V131H109H109V131H108H108V131H107H107V131H106H106V131H105H105V132H104H104V134H103H103V136H102H102V136H101H101V137H100H100V138H99H99V140H98H98V140H97H97V138H96H96V138H95H95V139H94H94V140H93H93V139H92H92V139H91H91V138H90H90V139H89H89V140H88H88V139H87H87V138H86H86V138H85H85V137H84H84V135H83H83V132H82H82V132H81H81V133H80H80V135H79H79V137H78H78V138H77H77V137H76H76V138H75H75V139H74H74V140H73H73V139H72H72V138H71H71V138H70H70V139H69H69V140H68H68V139H67H67V138H66H66V138H65H65V139H64H64V140H63H63V139H62H62V137H61H61V136H60H60V135H59H59V133H58H58V131H57H57V131H56H56V132H55H55V133H54H54V134H53H53V137H52H52V137H51H51V137H50H50V138H49H49V139H48H48V140H47H47V139H46H46V138H45H45V138H44H44V138H43H43V138H42H42V136H41H41V137H40H40V137H39H39V139H38H38V138H37H37V139H36H36V138H35H35V139H34H34V138H33H33V137H32H32V134H31H31V132H30H30V131H29H29V131H28H28V131H27H27V131H26H26V132H25H25V133H24H24V134H23H23V135H22H22V137H21H21V139H20H20V139H19H19V138H18H18V139H17H17V140H16H16V140H15H15V137H14H14V137H13H13V137H12H12V137H11H11V137H10H10V137H9H9V137H8H8V139H7H7V139H6H6V139H5H5V139H4H4V137H3H3V137H2H2V135H1H1V132H0H0Z" fill="#1f4c40" shape-rendering="crispEdges"/></g><g id="w7"><rect x="0" y="96.3" width="314" height="1" fill="rgba(30,60,110,0.18)"/><rect x="0" y="62.199999999999996" width="314" height="1.3" fill="#2f4b73"/><rect x="0" y="129.9" width="314" height="1.3" fill="#2f4b73"/><path d="M0 62H1V62H2H2V62H3H3V62H4H4V62H5H5V62H6H6V62H7H7V62H8H8V62H9H9V62H10H10V62H11H11V62H12H12V62H13H13V62H14H14V62H15H15V62H16H16V62H17H17V62H18H18V62H19H19V62H20H20V61H21H21V61H22H22V61H23H23V61H24H24V61H25H25V61H26H26V61H27H27V61H28H28V62H29H29V62H30H30V62H31H31V62H32H32V62H33H33V62H34H34V62H35H35V62H36H36V62H37H37V62H38H38V62H39H39V62H40H40V62H41H41V62H42H42V62H43H43V62H44H44V62H45H45V62H46H46V62H47H47V62H48H48V62H49H49V61H50H50V61H51H51V61H52H52V62H53H53V62H54H54V62H55H55V62H56H56V62H57H57V62H58H58V62H59H59V62H60H60V62H61H61V62H62H62V62H63H63V62H64H64V62H65H65V62H66H66V62H67H67V62H68H68V61H69H69V61H70H70V61H71H71V62H72H72V62H73H73V62H74H74V62H75H75V62H76H76V62H77H77V62H78H78V62H79H79V62H80H80V62H81H81V62H82H82V62H83H83V62H84H84V62H85H85V62H86H86V62H87H87V62H88H88V61H89H89V61H90H90V61H91H91V61H92H92V62H93H93V62H94H94V62H95H95V62H96H96V62H97H97V62H98H98V62H99H99V62H100H100V62H101H101V62H102H102V62H103H103V62H104H104V62H105H105V62H106H106V62H107H107V61H108H108V61H109H109V61H110H110V62H111H111V62H112H112V62H113H113V62H114H114V62H115H115V62H116H116V62H117H117V62H118H118V62H119H119V62H120H120V62H121H121V62H122H122V62H123H123V62H124H124V62H125H125V62H126H126V61H127H127V61H128H128V61H129H129V62H130H130V62H131H131V62H132H132V62H133H133V62H134H134V62H135H135V62H136H136V62H137H137V62H138H138V62H139H139V62H140H140V62H141H141V62H142H142V62H143H143V62H144H144V62H145H145V62H146H146V62H147H147V61H148H148V61H149H149V61H150H150V62H151H151V62H152H152V62H153H153V62H154H154V62H155H155V62H156H156V62H157H157V62H158H158V62H159H159V62H160H160V62H161H161V62H162H162V62H163H163V62H164H164V62H165H165V62H166H166V62H167H167V62H168H168V62H169H169V62H170H170V62H171H171V62H172H172V62H173H173V62H174H174V62H175H175V62H176H176V61H177H177V61H178H178V61H179H179V61H180H180V61H181H181V61H182H182V61H183H183V61H184H184V62H185H185V62H186H186V62H187H187V62H188H188V62H189H189V62H190H190V62H191H191V62H192H192V62H193H193V62H194H194V62H195H195V62H196H196V62H197H197V62H198H198V62H199H199V62H200H200V62H201H201V62H202H202V62H203H203V62H204H204V62H205H205V61H206H206V61H207H207V61H208H208V62H209H209V62H210H210V62H211H211V62H212H212V62H213H213V62H214H214V62H215H215V62H216H216V62H217H217V62H218H218V62H219H219V62H220H220V62H221H221V62H222H222V62H223H223V62H224H224V61H225H225V61H226H226V61H227H227V62H228H228V62H229H229V62H230H230V62H231H231V62H232H232V62H233H233V62H234H234V62H235H235V62H236H236V62H237H237V62H238H238V62H239H239V62H240H240V62H241H241V62H242H242V62H243H243V62H244H244V61H245H245V61H246H246V61H247H247V61H248H248V62H249H249V62H250H250V62H251H251V62H252H252V62H253H253V62H254H254V62H255H255V62H256H256V62H257H257V62H258H258V62H259H259V62H260H260V62H261H261V62H262H262V62H263H263V61H264H264V61H265H265V61H266H266V62H267H267V62H268H268V62H269H269V62H270H270V62H271H271V62H272H272V62H273H273V62H274H274V62H275H275V62H276H276V62H277H277V62H278H278V62H279H279V62H280H280V62H281H281V62H282H282V61H283H283V61H284H284V61H285H285V62H286H286V62H287H287V62H288H288V62H289H289V62H290H290V62H291H291V62H292H292V62H293H293V62H294H294V62H295H295V62H296H296V62H297H297V62H298H298V62H299H299V62H300H300V62H301H301V62H302H302V62H303H303V61H304H304V61H305H305V61H306H306V62H307H307V62H308H308V62H309H309V62H310H310V62H311H311V62H312H312V62H313H313V62H314H314V64H313H313V64H312H312V64H311H311V64H310H310V64H309H309V64H308H308V64H307H307V64H306H306V65H305H305V65H304H304V65H303H303V64H302H302V64H301H301V64H300H300V64H299H299V64H298H298V64H297H297V64H296H296V64H295H295V64H294H294V64H293H293V64H292H292V64H291H291V64H290H290V64H289H289V64H288H288V64H287H287V64H286H286V64H285H285V65H284H284V65H283H283V65H282H282V64H281H281V64H280H280V64H279H279V64H278H278V64H277H277V64H276H276V64H275H275V64H274H274V64H273H273V64H272H272V64H271H271V64H270H270V64H269H269V64H268H268V64H267H267V64H266H266V65H265H265V65H264H264V65H263H263V64H262H262V64H261H261V64H260H260V64H259H259V64H258H258V64H257H257V64H256H256V64H255H255V64H254H254V64H253H253V64H252H252V64H251H251V64H250H250V64H249H249V64H248H248V65H247H247V65H246H246V65H245H245V65H244H244V64H243H243V64H242H242V64H241H241V64H240H240V64H239H239V64H238H238V64H237H237V64H236H236V64H235H235V64H234H234V64H233H233V64H232H232V64H231H231V64H230H230V64H229H229V64H228H228V64H227H227V65H226H226V65H225H225V65H224H224V64H223H223V64H222H222V64H221H221V64H220H220V64H219H219V64H218H218V64H217H217V64H216H216V64H215H215V64H214H214V64H213H213V64H212H212V64H211H211V64H210H210V64H209H209V64H208H208V65H207H207V65H206H206V65H205H205V64H204H204V64H203H203V64H202H202V64H201H201V64H200H200V64H199H199V64H198H198V64H197H197V64H196H196V64H195H195V64H194H194V64H193H193V64H192H192V64H191H191V64H190H190V64H189H189V64H188H188V64H187H187V64H186H186V64H185H185V64H184H184V65H183H183V65H182H182V65H181H181V65H180H180V65H179H179V65H178H178V65H177H177V65H176H176V64H175H175V64H174H174V64H173H173V64H172H172V64H171H171V64H170H170V64H169H169V64H168H168V64H167H167V64H166H166V64H165H165V64H164H164V64H163H163V64H162H162V64H161H161V64H160H160V64H159H159V64H158H158V64H157H157V64H156H156V64H155H155V64H154H154V64H153H153V64H152H152V64H151H151V64H150H150V65H149H149V65H148H148V65H147H147V64H146H146V64H145H145V64H144H144V64H143H143V64H142H142V64H141H141V64H140H140V64H139H139V64H138H138V64H137H137V64H136H136V64H135H135V64H134H134V64H133H133V64H132H132V64H131H131V64H130H130V64H129H129V65H128H128V65H127H127V65H126H126V64H125H125V64H124H124V64H123H123V64H122H122V64H121H121V64H120H120V64H119H119V64H118H118V64H117H117V64H116H116V64H115H115V64H114H114V64H113H113V64H112H112V64H111H111V64H110H110V65H109H109V65H108H108V65H107H107V64H106H106V64H105H105V64H104H104V64H103H103V64H102H102V64H101H101V64H100H100V64H99H99V64H98H98V64H97H97V64H96H96V64H95H95V64H94H94V64H93H93V64H92H92V65H91H91V65H90H90V65H89H89V65H88H88V64H87H87V64H86H86V64H85H85V64H84H84V64H83H83V64H82H82V64H81H81V64H80H80V64H79H79V64H78H78V64H77H77V64H76H76V64H75H75V64H74H74V64H73H73V64H72H72V64H71H71V65H70H70V65H69H69V65H68H68V64H67H67V64H66H66V64H65H65V64H64H64V64H63H63V64H62H62V64H61H61V64H60H60V64H59H59V64H58H58V64H57H57V64H56H56V64H55H55V64H54H54V64H53H53V64H52H52V65H51H51V65H50H50V65H49H49V64H48H48V64H47H47V64H46H46V64H45H45V64H44H44V64H43H43V64H42H42V64H41H41V64H40H40V64H39H39V64H38H38V64H37H37V64H36H36V64H35H35V64H34H34V64H33H33V64H32H32V64H31H31V64H30H30V64H29H29V64H28H28V65H27H27V65H26H26V65H25H25V65H24H24V65H23H23V65H22H22V65H21H21V65H20H20V64H19H19V64H18H18V64H17H17V64H16H16V64H15H15V64H14H14V64H13H13V64H12H12V64H11H11V64H10H10V64H9H9V64H8H8V64H7H7V64H6H6V64H5H5V64H4H4V64H3H3V64H2H2V64H1H1V64H0H0Z" fill="#2f4b73" shape-rendering="crispEdges"/><path d="M0 130H1V130H2H2V130H3H3V130H4H4V130H5H5V130H6H6V130H7H7V130H8H8V130H9H9V130H10H10V130H11H11V130H12H12V130H13H13V130H14H14V130H15H15V130H16H16V130H17H17V130H18H18V130H19H19V127H20H20V126H21H21V126H22H22V126H23H23V125H24H24V125H25H25V124H26H26V123H27H27V123H28H28V123H29H29V124H30H30V124H31H31V125H32H32V124H33H33V124H34H34V124H35H35V123H36H36V124H37H37V125H38H38V126H39H39V127H40H40V128H41H41V130H42H42V130H43H43V130H44H44V130H45H45V130H46H46V130H47H47V130H48H48V130H49H49V116H50H50V119H51H51V119H52H52V121H53H53V122H54H54V122H55H55V123H56H56V124H57H57V125H58H58V126H59H59V127H60H60V128H61H61V129H62H62V130H63H63V130H64H64V130H65H65V130H66H66V130H67H67V130H68H68V130H69H69V115H70H70V119H71H71V119H72H72V120H73H73V121H74H74V123H75H75V123H76H76V124H77H77V125H78H78V126H79H79V127H80H80V128H81H81V129H82H82V130H83H83V130H84H84V130H85H85V130H86H86V130H87H87V130H88H88V116H89H89V119H90H90V119H91H91V120H92H92V121H93H93V122H94H94V123H95H95V124H96H96V125H97H97V126H98H98V127H99H99V128H100H100V129H101H101V130H102H102V130H103H103V130H104H104V130H105H105V130H106H106V130H107H107V115H108H108V119H109H109V119H110H110V121H111H111V121H112H112V122H113H113V123H114H114V124H115H115V125H116H116V126H117H117V127H118H118V127H119H119V129H120H120V130H121H121V130H122H122V130H123H123V130H124H124V130H125H125V130H126H126V130H127H127V116H128H128V119H129H129V119H130H130V120H131H131V121H132H132V122H133H133V123H134H134V124H135H135V125H136H136V126H137H137V127H138H138V128H139H139V129H140H140V130H141H141V130H142H142V130H143H143V130H144H144V130H145H145V130H146H146V130H147H147V115H148H148V119H149H149V119H150H150V120H151H151V121H152H152V122H153H153V123H154H154V124H155H155V125H156H156V126H157H157V127H158H158V128H159H159V129H160H160V130H161H161V130H162H162V130H163H163V130H164H164V130H165H165V130H166H166V130H167H167V130H168H168V130H169H169V130H170H170V130H171H171V130H172H172V130H173H173V130H174H174V130H175H175V127H176H176V126H177H177V126H178H178V126H179H179V125H180H180V125H181H181V124H182H182V123H183H183V123H184H184V124H185H185V124H186H186V124H187H187V124H188H188V124H189H189V124H190H190V123H191H191V123H192H192V124H193H193V125H194H194V126H195H195V127H196H196V128H197H197V130H198H198V130H199H199V130H200H200V130H201H201V130H202H202V130H203H203V130H204H204V130H205H205V115H206H206V119H207H207V119H208H208V121H209H209V122H210H210V123H211H211V123H212H212V124H213H213V125H214H214V126H215H215V127H216H216V128H217H217V129H218H218V130H219H219V130H220H220V130H221H221V130H222H222V130H223H223V130H224H224V130H225H225V116H226H226V119H227H227V119H228H228V121H229H229V122H230H230V123H231H231V123H232H232V124H233H233V125H234H234V126H235H235V127H236H236V128H237H237V129H238H238V130H239H239V130H240H240V130H241H241V130H242H242V130H243H243V130H244H244V116H245H245V119H246H246V119H247H247V121H248H248V121H249H249V122H250H250V123H251H251V124H252H252V125H253H253V126H254H254V127H255H255V128H256H256V129H257H257V130H258H258V130H259H259V130H260H260V130H261H261V130H262H262V130H263H263V115H264H264V119H265H265V119H266H266V121H267H267V122H268H268V122H269H269V123H270H270V124H271H271V125H272H272V126H273H273V126H274H274V128H275H275V129H276H276V130H277H277V130H278H278V130H279H279V130H280H280V130H281H281V130H282H282V130H283H283V116H284H284V119H285H285V119H286H286V121H287H287V121H288H288V122H289H289V123H290H290V124H291H291V125H292H292V125H293H293V127H294H294V128H295H295V129H296H296V130H297H297V130H298H298V130H299H299V130H300H300V130H301H301V130H302H302V130H303H303V116H304H304V119H305H305V119H306H306V121H307H307V122H308H308V123H309H309V123H310H310V124H311H311V125H312H312V126H313H313V127H314H314V135H313H313V135H312H312V136H311H311V137H310H310V138H309H309V139H308H308V140H307H307V141H306H306V143H305H305V143H304H304V147H303H303V131H302H302V131H301H301V131H300H300V131H299H299V131H298H298V131H297H297V131H296H296V132H295H295V133H294H294V135H293H293V136H292H292V137H291H291V137H290H290V138H289H289V139H288H288V140H287H287V141H286H286V143H285H285V143H284H284V147H283H283V131H282H282V131H281H281V131H280H280V131H279H279V131H278H278V131H277H277V131H276H276V132H275H275V134H274H274V135H273H273V135H272H272V137H271H271V137H270H270V138H269H269V139H268H268V140H267H267V141H266H266V143H265H265V143H264H264V147H263H263V131H262H262V131H261H261V131H260H260V131H259H259V131H258H258V131H257H257V132H256H256V134H255H255V134H254H254V135H253H253V137H252H252V138H251H251V138H250H250V139H249H249V140H248H248V141H247H247V143H246H246V143H245H245V146H244H244V131H243H243V131H242H242V131H241H241V131H240H240V131H239H239V131H238H238V132H237H237V133H236H236V135H235H235V136H234H234V136H233H233V137H232H232V139H231H231V139H230H230V140H229H229V141H228H228V143H227H227V143H226H226V147H225H225V131H224H224V131H223H223V131H222H222V131H221H221V131H220H220V131H219H219V131H218H218V132H217H217V133H216H216V135H215H215V135H214H214V136H213H213V137H212H212V138H211H211V139H210H210V140H209H209V141H208H208V143H207H207V143H206H206V148H205H205V131H204H204V131H203H203V131H202H202V131H201H201V131H200H200V131H199H199V131H198H198V131H197H197V133H196H196V134H195H195V135H194H194V136H193H193V137H192H192V138H191H191V138H190H190V138H189H189V138H188H188V137H187H187V137H186H186V138H185H185V138H184H184V139H183H183V139H182H182V138H181H181V137H180H180V136H179H179V135H178H178V135H177H177V135H176H176V134H175H175V131H174H174V131H173H173V131H172H172V131H171H171V131H170H170V131H169H169V131H168H168V131H167H167V131H166H166V131H165H165V131H164H164V131H163H163V131H162H162V131H161H161V131H160H160V133H159H159V133H158H158V134H157H157V135H156H156V136H155H155V138H154H154V138H153H153V139H152H152V140H151H151V141H150H150V143H149H149V143H148H148V147H147H147V131H146H146V131H145H145V131H144H144V131H143H143V131H142H142V131H141H141V131H140H140V132H139H139V133H138H138V134H137H137V136H136H136V136H135H135V137H134H134V138H133H133V139H132H132V140H131H131V141H130H130V143H129H129V143H128H128V147H127H127V131H126H126V131H125H125V131H124H124V131H123H123V131H122H122V131H121H121V131H120H120V132H119H119V134H118H118V135H117H117V135H116H116V136H115H115V137H114H114V138H113H113V139H112H112V140H111H111V141H110H110V143H109H109V143H108H108V147H107H107V131H106H106V131H105H105V131H104H104V131H103H103V131H102H102V131H101H101V132H100H100V133H99H99V134H98H98V135H97H97V137H96H96V137H95H95V138H94H94V139H93H93V140H92H92V141H91H91V143H90H90V143H89H89V147H88H88V131H87H87V131H86H86V131H85H85V131H84H84V131H83H83V131H82H82V132H81H81V134H80H80V134H79H79V136H78H78V137H77H77V137H76H76V138H75H75V139H74H74V140H73H73V141H72H72V143H71H71V143H70H70V147H69H69V131H68H68V131H67H67V131H66H66V131H65H65V131H64H64V131H63H63V131H62H62V132H61H61V133H60H60V134H59H59V135H58H58V136H57H57V137H56H56V138H55H55V139H54H54V140H53H53V141H52H52V143H51H51V143H50H50V146H49H49V131H48H48V131H47H47V131H46H46V131H45H45V131H44H44V131H43H43V131H42H42V131H41H41V134H40H40V134H39H39V135H38H38V136H37H37V137H36H36V138H35H35V138H34H34V138H33H33V137H32H32V137H31H31V137H30H30V138H29H29V139H28H28V138H27H27V138H26H26V138H25H25V137H24H24V136H23H23V136H22H22V135H21H21V135H20H20V134H19H19V131H18H18V131H17H17V131H16H16V131H15H15V131H14H14V131H13H13V131H12H12V131H11H11V131H10H10V131H9H9V131H8H8V131H7H7V131H6H6V131H5H5V131H4H4V131H3H3V131H2H2V131H1H1V131H0H0Z" fill="#2f4b73" shape-rendering="crispEdges"/></g><g id="w8"><rect x="0" y="96.3" width="564" height="1" fill="rgba(90,40,85,0.18)"/><rect x="0" y="62.199999999999996" width="564" height="1.3" fill="#5a3b55"/><rect x="0" y="129.9" width="564" height="1.3" fill="#5a3b55"/><path d="M0 52H1V52H2H2V57H3H3V58H4H4V55H5H5V55H6H6V58H7H7V55H8H8V57H9H9V56H10H10V58H11H11V57H12H12V57H13H13V60H14H14V59H15H15V60H16H16V58H17H17V60H18H18V59H19H19V60H20H20V59H21H21V59H22H22V52H23H23V52H24H24V55H25H25V57H26H26V57H27H27V57H28H28V59H29H29V55H30H30V57H31H31V57H32H32V57H33H33V58H34H34V59H35H35V57H36H36V58H37H37V60H38H38V58H39H39V60H40H40V52H41H41V52H42H42V56H43H43V57H44H44V58H45H45V58H46H46V56H47H47V57H48H48V59H49H49V58H50H50V59H51H51V58H52H52V56H53H53V58H54H54V56H55H55V57H56H56V59H57H57V57H58H58V58H59H59V58H60H60V59H61H61V60H62H62V60H63H63V58H64H64V52H65H65V52H66H66V54H67H67V58H68H68V58H69H69V57H70H70V55H71H71V58H72H72V58H73H73V58H74H74V58H75H75V56H76H76V59H77H77V56H78H78V56H79H79V57H80H80V56H81H81V57H82H82V57H83H83V59H84H84V58H85H85V59H86H86V58H87H87V59H88H88V58H89H89V57H90H90V58H91H91V58H92H92V58H93H93V59H94H94V57H95H95V60H96H96V58H97H97V59H98H98V61H99H99V60H100H100V52H101H101V52H102H102V57H103H103V57H104H104V55H105H105V57H106H106V55H107H107V59H108H108V57H109H109V58H110H110V56H111H111V56H112H112V56H113H113V57H114H114V58H115H115V57H116H116V56H117H117V58H118H118V57H119H119V59H120H120V57H121H121V57H122H122V56H123H123V58H124H124V58H125H125V59H126H126V60H127H127V57H128H128V57H129H129V59H130H130V58H131H131V59H132H132V59H133H133V58H134H134V58H135H135V57H136H136V59H137H137V58H138H138V60H139H139V60H140H140V60H141H141V59H142H142V52H143H143V52H144H144V55H145H145V55H146H146V57H147H147V58H148H148V55H149H149V57H150H150V56H151H151V57H152H152V55H153H153V59H154H154V57H155H155V57H156H156V57H157H157V59H158H158V57H159H159V57H160H160V59H161H161V57H162H162V59H163H163V58H164H164V57H165H165V60H166H166V59H167H167V60H168H168V58H169H169V60H170H170V59H171H171V59H172H172V62H173H173V62H174H174V62H175H175V62H176H176V62H177H177V62H178H178V62H179H179V62H180H180V62H181H181V62H182H182V62H183H183V62H184H184V52H185H185V52H186H186V57H187H187V55H188H188V58H189H189V57H190H190V55H191H191V55H192H192V55H193H193V55H194H194V56H195H195V57H196H196V56H197H197V59H198H198V57H199H199V58H200H200V59H201H201V57H202H202V59H203H203V58H204H204V58H205H205V59H206H206V60H207H207V60H208H208V62H209H209V62H210H210V62H211H211V62H212H212V62H213H213V62H214H214V62H215H215V62H216H216V62H217H217V62H218H218V62H219H219V62H220H220V62H221H221V62H222H222V62H223H223V62H224H224V52H225H225V52H226H226V55H227H227V59H228H228V55H229H229V59H230H230V58H231H231V55H232H232V56H233H233V57H234H234V58H235H235V57H236H236V57H237H237V59H238H238V59H239H239V58H240H240V57H241H241V58H242H242V57H243H243V57H244H244V57H245H245V59H246H246V60H247H247V58H248H248V57H249H249V60H250H250V60H251H251V59H252H252V59H253H253V60H254H254V52H255H255V52H256H256V58H257H257V55H258H258V56H259H259V58H260H260V55H261H261V56H262H262V57H263H263V56H264H264V58H265H265V59H266H266V56H267H267V57H268H268V58H269H269V57H270H270V57H271H271V59H272H272V59H273H273V58H274H274V59H275H275V58H276H276V60H277H277V58H278H278V59H279H279V60H280H280V52H281H281V52H282H282V55H283H283V56H284H284V58H285H285V55H286H286V55H287H287V55H288H288V57H289H289V58H290H290V55H291H291V58H292H292V58H293H293V57H294H294V56H295H295V56H296H296V59H297H297V58H298H298V56H299H299V57H300H300V57H301H301V59H302H302V57H303H303V59H304H304V59H305H305V59H306H306V58H307H307V59H308H308V59H309H309V58H310H310V60H311H311V58H312H312V60H313H313V60H314H314V60H315H315V59H316H316V52H317H317V52H318H318V55H319H319V54H320H320V56H321H321V56H322H322V58H323H323V55H324H324V56H325H325V58H326H326V59H327H327V59H328H328V58H329H329V56H330H330V57H331H331V56H332H332V57H333H333V57H334H334V56H335H335V59H336H336V58H337H337V57H338H338V58H339H339V59H340H340V59H341H341V57H342H342V58H343H343V59H344H344V59H345H345V59H346H346V52H347H347V52H348H348V58H349H349V58H350H350V55H351H351V57H352H352V56H353H353V59H354H354V55H355H355V56H356H356V56H357H357V57H358H358V58H359H359V56H360H360V59H361H361V59H362H362V58H363H363V58H364H364V59H365H365V59H366H366V59H367H367V58H368H368V56H369H369V58H370H370V57H371H371V58H372H372V58H373H373V58H374H374V59H375H375V57H376H376V57H377H377V58H378H378V58H379H379V58H380H380V59H381H381V58H382H382V60H383H383V58H384H384V59H385H385V59H386H386V58H387H387V60H388H388V52H389H389V52H390H390V58H391H391V54H392H392V55H393H393V58H394H394V56H395H395V58H396H396V58H397H397V58H398H398V57H399H399V58H400H400V55H401H401V59H402H402V55H403H403V57H404H404V57H405H405V57H406H406V59H407H407V56H408H408V59H409H409V58H410H410V57H411H411V59H412H412V58H413H413V59H414H414V58H415H415V58H416H416V57H417H417V57H418H418V57H419H419V59H420H420V58H421H421V58H422H422V60H423H423V58H424H424V60H425H425V60H426H426V59H427H427V59H428H428V60H429H429V61H430H430V52H431H431V52H432H432V56H433H433V58H434H434V56H435H435V56H436H436V56H437H437V58H438H438V59H439H439V57H440H440V58H441H441V60H442H442V59H443H443V60H444H444V52H445H445V52H446H446V56H447H447V58H448H448V56H449H449V56H450H450V55H451H451V58H452H452V57H453H453V55H454H454V57H455H455V58H456H456V58H457H457V59H458H458V57H459H459V57H460H460V58H461H461V57H462H462V56H463H463V57H464H464V58H465H465V58H466H466V58H467H467V57H468H468V58H469H469V56H470H470V58H471H471V57H472H472V57H473H473V59H474H474V60H475H475V59H476H476V60H477H477V60H478H478V59H479H479V59H480H480V58H481H481V60H482H482V58H483H483V60H484H484V59H485H485V60H486H486V52H487H487V52H488H488V56H489H489V54H490H490V56H491H491V58H492H492V58H493H493V59H494H494V56H495H495V55H496H496V58H497H497V56H498H498V56H499H499V58H500H500V55H501H501V58H502H502V56H503H503V56H504H504V57H505H505V59H506H506V57H507H507V58H508H508V59H509H509V60H510H510V58H511H511V59H512H512V58H513H513V57H514H514V59H515H515V60H516H516V59H517H517V59H518H518V58H519H519V60H520H520V60H521H521V60H522H522V62H523H523V62H524H524V62H525H525V62H526H526V62H527H527V62H528H528V62H529H529V62H530H530V62H531H531V62H532H532V62H533H533V62H534H534V52H535H535V52H536H536V55H537H537V56H538H538V56H539H539V56H540H540V57H541H541V56H542H542V56H543H543V58H544H544V55H545H545V57H546H546V57H547H547V59H548H548V56H549H549V57H550H550V57H551H551V59H552H552V56H553H553V57H554H554V58H555H555V59H556H556V58H557H557V57H558H558V59H559H559V59H560H560V59H561H561V59H562H562V58H563H563V57H564H564V68H563H563V67H562H562V67H561H561V67H560H560V67H559H559V66H558H558V68H557H557V69H556H556V67H555H555V68H554H554V68H553H553V70H552H552V67H551H551V70H550H550V68H549H549V70H548H548V66H547H547V68H546H546V69H545H545V69H544H544V68H543H543V69H542H542V69H541H541V68H540H540V69H539H539V69H538H538V71H537H537V70H536H536V73H535H535V74H534H534V64H533H533V64H532H532V64H531H531V64H530H530V64H529H529V64H528H528V64H527H527V64H526H526V64H525H525V64H524H524V64H523H523V64H522H522V65H521H521V65H520H520V66H519H519V68H518H518V67H517H517V66H516H516V66H515H515V67H514H514V68H513H513V67H512H512V66H511H511V68H510H510V66H509H509V67H508H508V68H507H507V68H506H506V67H505H505V69H504H504V69H503H503V69H502H502V67H501H501V70H500H500V68H499H499V69H498H498V70H497H497V68H496H496V71H495H495V69H494H494V67H493H493V67H492H492V69H491H491V69H490H490V70H489H489V70H488H488V73H487H487V72H486H486V66H485H485V67H484H484V66H483H483V68H482H482V66H481H481V68H480H480V67H479H479V67H478H478V66H477H477V66H476H476V67H475H475V66H474H474V67H473H473V69H472H472V69H471H471V68H470H470V69H469H469V67H468H468V68H467H467V67H466H466V67H465H465V67H464H464V69H463H463V71H462H462V68H461H461V67H460H460V69H459H459V69H458H458V67H457H457V68H456H456V67H455H455V68H454H454V71H453H453V69H452H452V68H451H451V71H450H450V69H449H449V70H448H448V68H447H447V70H446H446V72H445H445V73H444H444V66H443H443V67H442H442V65H441H441V68H440H440V67H439H439V67H438H438V68H437H437V70H436H436V71H435H435V69H434H434V68H433H433V69H432H432V73H431H431V74H430H430V65H429H429V66H428H428V66H427H427V66H426H426V66H425H425V66H424H424V68H423H423V66H422H422V69H421H421V67H420H420V67H419H419V69H418H418V68H417H417V68H416H416V68H415H415V67H414H414V67H413H413V68H412H412V67H411H411V70H410H410V67H409H409V67H408H408V70H407H407V67H406H406V68H405H405V69H404H404V68H403H403V69H402H402V67H401H401V71H400H400V67H399H399V69H398H398V68H397H397V68H396H396V68H395H395V70H394H394V68H393H393V71H392H392V71H391H391V68H390H390V72H389H389V73H388H388V65H387H387V68H386H386V66H385H385V67H384H384V67H383H383V65H382H382V67H381H381V67H380H380V67H379H379V68H378H378V68H377H377V68H376H376V69H375H375V67H374H374V69H373H373V68H372H372V68H371H371V68H370H370V68H369H369V69H368H368V67H367H367V67H366H366V66H365H365V67H364H364V68H363H363V67H362H362V67H361H361V67H360H360V69H359H359V67H358H358V69H357H357V69H356H356V69H355H355V71H354H354V68H353H353V70H352H352V68H351H351V69H350H350V68H349H349V68H348H348V75H347H347V74H346H346V67H345H345V67H344H344V67H343H343V69H342H342V68H341H341V67H340H340V66H339H339V68H338H338V69H337H337V67H336H336V66H335H335V69H334H334V68H333H333V68H332H332V70H331H331V68H330H330V69H329H329V67H328H328V67H327H327V66H326H326V68H325H325V70H324H324V70H323H323V67H322H322V71H321H321V69H320H320V71H319H319V71H318H318V73H317H317V74H316H316V67H315H315V66H314H314V65H313H313V66H312H312V67H311H311V66H310H310V68H309H309V67H308H308V67H307H307V67H306H306V67H305H305V66H304H304V66H303H303V68H302H302V67H301H301V69H300H300V68H299H299V70H298H298V67H297H297V67H296H296V68H295H295V70H294H294V69H293H293V69H292H292V67H291H291V70H290H290V68H289H289V69H288H288V70H287H287V71H286H286V70H285H285V67H284H284V69H283H283V69H282H282V73H281H281V74H280H280V66H279H279V67H278H278V67H277H277V66H276H276V67H275H275V66H274H274V67H273H273V67H272H272V66H271H271V68H270H270V68H269H269V68H268H268V68H267H267V70H266H266V67H265H265V68H264H264V70H263H263V69H262H262V69H261H261V70H260H260V68H259H259V69H258H258V71H257H257V68H256H256V72H255H255V73H254H254V65H253H253V67H252H252V66H251H251V65H250H250V66H249H249V68H248H248V67H247H247V66H246H246V66H245H245V69H244H244V69H243H243V70H242H242V67H241H241V69H240H240V68H239H239V67H238H238V67H237H237V68H236H236V68H235H235V68H234H234V70H233H233V70H232H232V69H231H231V68H230H230V67H229H229V71H228H228V68H227H227V70H226H226V72H225H225V74H224H224V64H223H223V64H222H222V64H221H221V64H220H220V64H219H219V64H218H218V64H217H217V64H216H216V64H215H215V64H214H214V64H213H213V64H212H212V64H211H211V64H210H210V64H209H209V64H208H208V65H207H207V65H206H206V66H205H205V67H204H204V68H203H203V66H202H202V68H201H201V66H200H200V67H199H199V68H198H198V67H197H197V69H196H196V68H195H195V69H194H194V71H193H193V71H192H192V72H191H191V70H190H190V69H189H189V68H188H188V72H187H187V69H186H186V73H185H185V72H184H184V64H183H183V64H182H182V64H181H181V64H180H180V64H179H179V64H178H178V64H177H177V64H176H176V64H175H175V64H174H174V64H173H173V64H172H172V66H171H171V67H170H170V66H169H169V68H168H168V66H167H167V66H166H166V65H165H165V68H164H164V67H163H163V67H162H162V68H161H161V66H160H160V69H159H159V68H158H158V66H157H157V68H156H156V68H155H155V68H154H154V67H153H153V71H152H152V69H151H151V69H150H150V69H149H149V70H148H148V68H147H147V69H146H146V70H145H145V71H144H144V74H143H143V72H142H142V67H141H141V67H140H140V66H139H139V65H138H138V67H137H137V66H136H136V68H135H135V67H134H134V68H133H133V67H132H132V67H131H131V67H130H130V67H129H129V69H128H128V70H127H127V66H126H126V66H125H125V67H124H124V68H123H123V69H122H122V70H121H121V68H120H120V67H119H119V68H118H118V68H117H117V69H116H116V69H115H115V68H114H114V68H113H113V69H112H112V70H111H111V70H110H110V68H109H109V69H108H108V67H107H107V71H106H106V68H105H105V70H104H104V69H103H103V68H102H102V72H101H101V72H100H100V66H99H99V65H98H98V66H97H97V68H96H96V65H95H95V68H94H94V66H93H93V69H92H92V67H91H91V68H90H90V68H89H89V68H88H88V66H87H87V68H86H86V67H85H85V68H84H84V66H83H83V68H82H82V68H81H81V69H80H80V67H79H79V68H78H78V70H77H77V67H76H76V70H75H75V67H74H74V67H73H73V68H72H72V67H71H71V71H70H70V68H69H69V67H68H68V67H67H67V72H66H66V73H65H65V74H64H64V67H63H63V65H62H62V66H61H61V66H60H60V68H59H59V67H58H58V69H57H57V67H56H56V68H55H55V69H54H54V67H53H53V70H52H52V68H51H51V66H50H50V67H49H49V66H48H48V69H47H47V71H46H46V67H45H45V68H44H44V69H43H43V70H42H42V75H41H41V73H40H40V66H39H39V68H38H38V65H37H37V67H36H36V68H35H35V66H34H34V68H33H33V68H32H32V68H31H31V68H30H30V70H29H29V67H28H28V67H27H27V69H26H26V68H25H25V71H24H24V75H23H23V74H22H22V67H21H21V67H20H20V65H19H19V67H18H18V66H17H17V68H16H16V66H15H15V67H14H14V66H13H13V69H12H12V68H11H11V69H10H10V69H9H9V69H8H8V71H7H7V68H6H6V70H5H5V69H4H4V68H3H3V70H2H2V75H1H1V73H0H0Z" fill="#5a3b55" shape-rendering="crispEdges"/><path d="M0 130H1V128H2H2V130H3H3V130H4H4V130H5H5V130H6H6V130H7H7V129H8H8V130H9H9V130H10H10V129H11H11V130H12H12V130H13H13V130H14H14V130H15H15V130H16H16V130H17H17V130H18H18V130H19H19V130H20H20V130H21H21V130H22H22V130H23H23V130H24H24V129H25H25V129H26H26V129H27H27V129H28H28V130H29H29V130H30H30V130H31H31V129H32H32V130H33H33V130H34H34V130H35H35V130H36H36V130H37H37V130H38H38V130H39H39V129H40H40V130H41H41V130H42H42V130H43H43V130H44H44V130H45H45V130H46H46V130H47H47V130H48H48V130H49H49V130H50H50V129H51H51V129H52H52V129H53H53V130H54H54V130H55H55V129H56H56V130H57H57V130H58H58V130H59H59V130H60H60V130H61H61V130H62H62V130H63H63V128H64H64V130H65H65V129H66H66V129H67H67V129H68H68V129H69H69V130H70H70V130H71H71V130H72H72V130H73H73V130H74H74V130H75H75V130H76H76V130H77H77V128H78H78V130H79H79V130H80H80V130H81H81V130H82H82V129H83H83V130H84H84V130H85H85V129H86H86V129H87H87V129H88H88V129H89H89V130H90H90V129H91H91V129H92H92V130H93H93V129H94H94V129H95H95V130H96H96V130H97H97V129H98H98V130H99H99V130H100H100V129H101H101V130H102H102V130H103H103V130H104H104V130H105H105V130H106H106V130H107H107V129H108H108V130H109H109V130H110H110V130H111H111V130H112H112V130H113H113V128H114H114V130H115H115V129H116H116V129H117H117V130H118H118V130H119H119V129H120H120V130H121H121V130H122H122V130H123H123V129H124H124V130H125H125V129H126H126V130H127H127V130H128H128V130H129H129V130H130H130V129H131H131V130H132H132V129H133H133V130H134H134V129H135H135V130H136H136V130H137H137V130H138H138V130H139H139V130H140H140V130H141H141V130H142H142V130H143H143V130H144H144V130H145H145V130H146H146V130H147H147V130H148H148V129H149H149V130H150H150V130H151H151V130H152H152V130H153H153V130H154H154V128H155H155V128H156H156V130H157H157V130H158H158V129H159H159V130H160H160V129H161H161V129H162H162V129H163H163V130H164H164V129H165H165V130H166H166V130H167H167V130H168H168V130H169H169V130H170H170V129H171H171V129H172H172V130H173H173V129H174H174V130H175H175V130H176H176V128H177H177V130H178H178V129H179H179V129H180H180V130H181H181V130H182H182V130H183H183V130H184H184V130H185H185V129H186H186V130H187H187V130H188H188V129H189H189V129H190H190V129H191H191V130H192H192V130H193H193V130H194H194V130H195H195V130H196H196V130H197H197V128H198H198V129H199H199V130H200H200V130H201H201V129H202H202V129H203H203V129H204H204V130H205H205V129H206H206V130H207H207V130H208H208V130H209H209V130H210H210V130H211H211V129H212H212V129H213H213V130H214H214V130H215H215V129H216H216V129H217H217V130H218H218V129H219H219V130H220H220V130H221H221V130H222H222V130H223H223V129H224H224V130H225H225V130H226H226V128H227H227V130H228H228V129H229H229V130H230H230V129H231H231V129H232H232V130H233H233V130H234H234V130H235H235V129H236H236V130H237H237V130H238H238V130H239H239V129H240H240V129H241H241V129H242H242V130H243H243V130H244H244V130H245H245V130H246H246V130H247H247V130H248H248V130H249H249V130H250H250V128H251H251V130H252H252V129H253H253V130H254H254V129H255H255V129H256H256V129H257H257V129H258H258V130H259H259V130H260H260V129H261H261V130H262H262V130H263H263V130H264H264V130H265H265V130H266H266V130H267H267V129H268H268V129H269H269V130H270H270V130H271H271V130H272H272V129H273H273V130H274H274V130H275H275V129H276H276V129H277H277V130H278H278V129H279H279V129H280H280V129H281H281V130H282H282V130H283H283V130H284H284V130H285H285V129H286H286V130H287H287V129H288H288V130H289H289V130H290H290V130H291H291V130H292H292V130H293H293V130H294H294V130H295H295V130H296H296V130H297H297V130H298H298V130H299H299V130H300H300V130H301H301V130H302H302V130H303H303V130H304H304V130H305H305V130H306H306V130H307H307V130H308H308V130H309H309V130H310H310V130H311H311V130H312H312V129H313H313V130H314H314V130H315H315V130H316H316V130H317H317V130H318H318V129H319H319V130H320H320V130H321H321V130H322H322V130H323H323V130H324H324V130H325H325V130H326H326V130H327H327V130H328H328V130H329H329V130H330H330V130H331H331V130H332H332V130H333H333V130H334H334V130H335H335V130H336H336V130H337H337V130H338H338V130H339H339V130H340H340V129H341H341V129H342H342V130H343H343V130H344H344V129H345H345V130H346H346V130H347H347V130H348H348V130H349H349V130H350H350V130H351H351V129H352H352V130H353H353V130H354H354V130H355H355V130H356H356V130H357H357V130H358H358V128H359H359V130H360H360V130H361H361V129H362H362V130H363H363V129H364H364V130H365H365V130H366H366V129H367H367V129H368H368V130H369H369V129H370H370V130H371H371V130H372H372V130H373H373V130H374H374V130H375H375V129H376H376V129H377H377V130H378H378V129H379H379V130H380H380V130H381H381V129H382H382V129H383H383V130H384H384V129H385H385V129H386H386V130H387H387V130H388H388V130H389H389V130H390H390V130H391H391V129H392H392V129H393H393V130H394H394V129H395H395V129H396H396V130H397H397V130H398H398V130H399H399V130H400H400V130H401H401V130H402H402V130H403H403V130H404H404V130H405H405V130H406H406V130H407H407V130H408H408V130H409H409V130H410H410V130H411H411V130H412H412V130H413H413V128H414H414V130H415H415V130H416H416V130H417H417V130H418H418V130H419H419V130H420H420V130H421H421V129H422H422V130H423H423V129H424H424V129H425H425V130H426H426V130H427H427V129H428H428V130H429H429V129H430H430V130H431H431V130H432H432V130H433H433V130H434H434V130H435H435V130H436H436V130H437H437V129H438H438V129H439H439V129H440H440V130H441H441V129H442H442V130H443H443V129H444H444V130H445H445V129H446H446V130H447H447V129H448H448V130H449H449V130H450H450V129H451H451V129H452H452V130H453H453V130H454H454V129H455H455V130H456H456V130H457H457V130H458H458V130H459H459V130H460H460V130H461H461V130H462H462V130H463H463V129H464H464V130H465H465V130H466H466V130H467H467V130H468H468V130H469H469V128H470H470V130H471H471V129H472H472V130H473H473V130H474H474V129H475H475V130H476H476V130H477H477V130H478H478V130H479H479V130H480H480V130H481H481V130H482H482V128H483H483V130H484H484V130H485H485V130H486H486V129H487H487V130H488H488V129H489H489V130H490H490V130H491H491V130H492H492V129H493H493V129H494H494V130H495H495V129H496H496V130H497H497V130H498H498V130H499H499V130H500H500V128H501H501V128H502H502V130H503H503V129H504H504V129H505H505V130H506H506V130H507H507V130H508H508V130H509H509V130H510H510V130H511H511V130H512H512V130H513H513V130H514H514V130H515H515V130H516H516V129H517H517V129H518H518V130H519H519V129H520H520V130H521H521V130H522H522V130H523H523V129H524H524V130H525H525V129H526H526V130H527H527V130H528H528V129H529H529V129H530H530V130H531H531V129H532H532V130H533H533V130H534H534V130H535H535V130H536H536V130H537H537V130H538H538V130H539H539V129H540H540V130H541H541V130H542H542V129H543H543V130H544H544V130H545H545V130H546H546V130H547H547V130H548H548V130H549H549V130H550H550V130H551H551V130H552H552V130H553H553V129H554H554V130H555H555V130H556H556V130H557H557V128H558H558V129H559H559V130H560H560V130H561H561V130H562H562V130H563H563V130H564H564V131H563H563V131H562H562V131H561H561V131H560H560V132H559H559V132H558H558V133H557H557V131H556H556V131H555H555V131H554H554V132H553H553V131H552H552V131H551H551V131H550H550V131H549H549V131H548H548V131H547H547V132H546H546V132H545H545V131H544H544V131H543H543V132H542H542V131H541H541V131H540H540V132H539H539V131H538H538V131H537H537V131H536H536V131H535H535V131H534H534V131H533H533V131H532H532V132H531H531V131H530H530V132H529H529V132H528H528V131H527H527V132H526H526V132H525H525V131H524H524V132H523H523V131H522H522V131H521H521V131H520H520V132H519H519V131H518H518V132H517H517V132H516H516V131H515H515V131H514H514V131H513H513V131H512H512V131H511H511V131H510H510V131H509H509V131H508H508V131H507H507V131H506H506V131H505H505V132H504H504V132H503H503V131H502H502V133H501H501V133H500H500V131H499H499V131H498H498V131H497H497V131H496H496V131H495H495V131H494H494V132H493H493V132H492H492V131H491H491V131H490H490V131H489H489V132H488H488V131H487H487V132H486H486V131H485H485V131H484H484V131H483H483V133H482H482V131H481H481V131H480H480V131H479H479V131H478H478V131H477H477V131H476H476V131H475H475V131H474H474V131H473H473V131H472H472V132H471H471V131H470H470V133H469H469V131H468H468V131H467H467V131H466H466V131H465H465V131H464H464V131H463H463V131H462H462V131H461H461V131H460H460V131H459H459V131H458H458V131H457H457V131H456H456V131H455H455V132H454H454V131H453H453V131H452H452V132H451H451V132H450H450V131H449H449V131H448H448V132H447H447V131H446H446V132H445H445V131H444H444V132H443H443V131H442H442V132H441H441V131H440H440V132H439H439V132H438H438V132H437H437V131H436H436V131H435H435V131H434H434V131H433H433V131H432H432V132H431H431V132H430H430V132H429H429V131H428H428V131H427H427V131H426H426V131H425H425V132H424H424V131H423H423V131H422H422V132H421H421V131H420H420V131H419H419V131H418H418V131H417H417V131H416H416V131H415H415V131H414H414V133H413H413V131H412H412V131H411H411V131H410H410V131H409H409V131H408H408V131H407H407V131H406H406V131H405H405V131H404H404V131H403H403V131H402H402V131H401H401V131H400H400V131H399H399V131H398H398V131H397H397V131H396H396V132H395H395V132H394H394V131H393H393V132H392H392V132H391H391V131H390H390V131H389H389V131H388H388V131H387H387V131H386H386V131H385H385V131H384H384V131H383H383V132H382H382V131H381H381V131H380H380V131H379H379V132H378H378V131H377H377V132H376H376V132H375H375V131H374H374V131H373H373V131H372H372V131H371H371V131H370H370V133H369H369V131H368H368V132H367H367V132H366H366V131H365H365V131H364H364V132H363H363V131H362H362V132H361H361V131H360H360V131H359H359V133H358H358V131H357H357V131H356H356V131H355H355V131H354H354V131H353H353V131H352H352V132H351H351V131H350H350V131H349H349V131H348H348V131H347H347V131H346H346V131H345H345V132H344H344V131H343H343V131H342H342V132H341H341V132H340H340V131H339H339V132H338H338V131H337H337V131H336H336V131H335H335V131H334H334V131H333H333V131H332H332V131H331H331V131H330H330V131H329H329V131H328H328V131H327H327V131H326H326V131H325H325V131H324H324V131H323H323V131H322H322V132H321H321V131H320H320V131H319H319V131H318H318V131H317H317V131H316H316V131H315H315V131H314H314V131H313H313V132H312H312V131H311H311V131H310H310V131H309H309V131H308H308V131H307H307V131H306H306V131H305H305V131H304H304V131H303H303V131H302H302V131H301H301V131H300H300V131H299H299V131H298H298V131H297H297V131H296H296V131H295H295V131H294H294V131H293H293V131H292H292V131H291H291V131H290H290V131H289H289V131H288H288V131H287H287V131H286H286V132H285H285V131H284H284V131H283H283V131H282H282V131H281H281V132H280H280V132H279H279V132H278H278V131H277H277V132H276H276V132H275H275V131H274H274V131H273H273V131H272H272V131H271H271V131H270H270V131H269H269V132H268H268V132H267H267V131H266H266V131H265H265V131H264H264V131H263H263V131H262H262V131H261H261V132H260H260V131H259H259V131H258H258V133H257H257V132H256H256V132H255H255V132H254H254V131H253H253V132H252H252V131H251H251V133H250H250V131H249H249V131H248H248V131H247H247V131H246H246V131H245H245V131H244H244V131H243H243V131H242H242V132H241H241V132H240H240V132H239H239V131H238H238V131H237H237V131H236H236V132H235H235V131H234H234V131H233H233V132H232H232V132H231H231V132H230H230V131H229H229V132H228H228V131H227H227V133H226H226V131H225H225V131H224H224V132H223H223V131H222H222V131H221H221V131H220H220V131H219H219V132H218H218V131H217H217V132H216H216V132H215H215V131H214H214V131H213H213V132H212H212V132H211H211V131H210H210V131H209H209V132H208H208V131H207H207V131H206H206V132H205H205V131H204H204V132H203H203V131H202H202V132H201H201V131H200H200V131H199H199V132H198H198V133H197H197V131H196H196V131H195H195V131H194H194V131H193H193V131H192H192V131H191H191V132H190H190V132H189H189V131H188H188V131H187H187V131H186H186V132H185H185V131H184H184V131H183H183V131H182H182V131H181H181V131H180H180V132H179H179V132H178H178V131H177H177V133H176H176V131H175H175V131H174H174V132H173H173V131H172H172V132H171H171V132H170H170V131H169H169V131H168H168V131H167H167V131H166H166V131H165H165V132H164H164V131H163H163V132H162H162V132H161H161V131H160H160V131H159H159V132H158H158V131H157H157V131H156H156V133H155H155V133H154H154V131H153H153V131H152H152V131H151H151V131H150H150V131H149H149V132H148H148V131H147H147V131H146H146V131H145H145V131H144H144V131H143H143V131H142H142V131H141H141V131H140H140V131H139H139V131H138H138V131H137H137V131H136H136V131H135H135V132H134H134V131H133H133V132H132H132V131H131H131V132H130H130V131H129H129V131H128H128V131H127H127V131H126H126V132H125H125V131H124H124V132H123H123V131H122H122V131H121H121V131H120H120V132H119H119V131H118H118V131H117H117V132H116H116V132H115H115V131H114H114V133H113H113V131H112H112V131H111H111V132H110H110V131H109H109V131H108H108V132H107H107V131H106H106V131H105H105V131H104H104V131H103H103V131H102H102V131H101H101V131H100H100V131H99H99V131H98H98V132H97H97V131H96H96V131H95H95V131H94H94V132H93H93V131H92H92V132H91H91V132H90H90V131H89H89V131H88H88V132H87H87V132H86H86V132H85H85V131H84H84V131H83H83V132H82H82V131H81H81V131H80H80V131H79H79V131H78H78V133H77H77V131H76H76V132H75H75V131H74H74V131H73H73V131H72H72V131H71H71V131H70H70V131H69H69V132H68H68V132H67H67V132H66H66V132H65H65V131H64H64V133H63H63V131H62H62V131H61H61V131H60H60V131H59H59V131H58H58V131H57H57V131H56H56V132H55H55V131H54H54V131H53H53V132H52H52V132H51H51V132H50H50V131H49H49V131H48H48V131H47H47V131H46H46V131H45H45V131H44H44V131H43H43V132H42H42V131H41H41V131H40H40V132H39H39V131H38H38V131H37H37V131H36H36V131H35H35V131H34H34V131H33H33V131H32H32V132H31H31V131H30H30V131H29H29V131H28H28V132H27H27V132H26H26V132H25H25V132H24H24V131H23H23V131H22H22V131H21H21V131H20H20V131H19H19V131H18H18V131H17H17V131H16H16V131H15H15V131H14H14V131H13H13V131H12H12V131H11H11V132H10H10V131H9H9V131H8H8V132H7H7V131H6H6V131H5H5V131H4H4V131H3H3V131H2H2V133H1H1V131H0H0Z" fill="#5a3b55" shape-rendering="crispEdges"/></g><g id="w9"><rect x="0" y="96.3" width="564" height="1" fill="rgba(110,60,30,0.18)"/><rect x="0" y="62.199999999999996" width="564" height="1.3" fill="#6a4530"/><rect x="0" y="129.9" width="564" height="1.3" fill="#6a4530"/><path d="M0 59H1V59H2H2V61H3H3V60H4H4V60H5H5V61H6H6V61H7H7V60H8H8V61H9H9V60H10H10V60H11H11V61H12H12V61H13H13V60H14H14V61H15H15V60H16H16V61H17H17V61H18H18V61H19H19V61H20H20V61H21H21V61H22H22V61H23H23V61H24H24V61H25H25V61H26H26V62H27H27V61H28H28V62H29H29V61H30H30V59H31H31V59H32H32V60H33H33V59H34H34V60H35H35V59H36H36V61H37H37V61H38H38V61H39H39V61H40H40V60H41H41V61H42H42V61H43H43V60H44H44V61H45H45V61H46H46V60H47H47V60H48H48V61H49H49V60H50H50V61H51H51V61H52H52V61H53H53V60H54H54V61H55H55V61H56H56V61H57H57V61H58H58V61H59H59V61H60H60V61H61H61V62H62H62V61H63H63V61H64H64V61H65H65V61H66H66V62H67H67V61H68H68V61H69H69V61H70H70V61H71H71V61H72H72V59H73H73V59H74H74V60H75H75V61H76H76V61H77H77V60H78H78V60H79H79V61H80H80V61H81H81V60H82H82V61H83H83V60H84H84V61H85H85V62H86H86V62H87H87V61H88H88V61H89H89V62H90H90V61H91H91V62H92H92V59H93H93V59H94H94V59H95H95V61H96H96V60H97H97V60H98H98V60H99H99V60H100H100V60H101H101V61H102H102V61H103H103V61H104H104V61H105H105V61H106H106V61H107H107V60H108H108V60H109H109V60H110H110V60H111H111V61H112H112V60H113H113V61H114H114V61H115H115V61H116H116V62H117H117V61H118H118V61H119H119V61H120H120V61H121H121V62H122H122V61H123H123V61H124H124V61H125H125V61H126H126V61H127H127V62H128H128V59H129H129V59H130H130V59H131H131V59H132H132V60H133H133V59H134H134V60H135H135V60H136H136V61H137H137V60H138H138V61H139H139V60H140H140V60H141H141V60H142H142V60H143H143V60H144H144V61H145H145V60H146H146V60H147H147V61H148H148V60H149H149V60H150H150V61H151H151V60H152H152V60H153H153V62H154H154V60H155H155V61H156H156V61H157H157V62H158H158V61H159H159V61H160H160V62H161H161V61H162H162V61H163H163V61H164H164V61H165H165V61H166H166V62H167H167V62H168H168V61H169H169V61H170H170V59H171H171V59H172H172V60H173H173V60H174H174V61H175H175V60H176H176V60H177H177V61H178H178V61H179H179V61H180H180V61H181H181V61H182H182V61H183H183V61H184H184V59H185H185V59H186H186V61H187H187V60H188H188V60H189H189V61H190H190V60H191H191V60H192H192V61H193H193V60H194H194V61H195H195V61H196H196V61H197H197V61H198H198V61H199H199V61H200H200V61H201H201V62H202H202V61H203H203V62H204H204V61H205H205V62H206H206V59H207H207V59H208H208V59H209H209V60H210H210V61H211H211V60H212H212V60H213H213V60H214H214V60H215H215V60H216H216V61H217H217V61H218H218V61H219H219V61H220H220V61H221H221V60H222H222V60H223H223V61H224H224V61H225H225V61H226H226V61H227H227V61H228H228V61H229H229V60H230H230V60H231H231V61H232H232V61H233H233V61H234H234V61H235H235V62H236H236V61H237H237V62H238H238V62H239H239V61H240H240V62H241H241V61H242H242V59H243H243V59H244H244V60H245H245V60H246H246V60H247H247V60H248H248V61H249H249V60H250H250V61H251H251V60H252H252V60H253H253V61H254H254V61H255H255V61H256H256V61H257H257V61H258H258V61H259H259V61H260H260V61H261H261V62H262H262V59H263H263V59H264H264V61H265H265V61H266H266V60H267H267V60H268H268V60H269H269V60H270H270V60H271H271V61H272H272V61H273H273V60H274H274V60H275H275V60H276H276V61H277H277V60H278H278V61H279H279V60H280H280V60H281H281V61H282H282V61H283H283V60H284H284V61H285H285V61H286H286V61H287H287V61H288H288V61H289H289V61H290H290V61H291H291V60H292H292V61H293H293V61H294H294V61H295H295V61H296H296V61H297H297V61H298H298V61H299H299V62H300H300V62H301H301V62H302H302V61H303H303V61H304H304V59H305H305V59H306H306V61H307H307V61H308H308V60H309H309V60H310H310V60H311H311V60H312H312V61H313H313V61H314H314V60H315H315V60H316H316V60H317H317V61H318H318V61H319H319V61H320H320V61H321H321V61H322H322V61H323H323V61H324H324V61H325H325V61H326H326V61H327H327V61H328H328V61H329H329V62H330H330V59H331H331V59H332H332V60H333H333V60H334H334V61H335H335V61H336H336V60H337H337V61H338H338V61H339H339V61H340H340V60H341H341V61H342H342V60H343H343V61H344H344V61H345H345V60H346H346V60H347H347V61H348H348V61H349H349V61H350H350V60H351H351V61H352H352V61H353H353V61H354H354V61H355H355V62H356H356V61H357H357V61H358H358V61H359H359V61H360H360V61H361H361V61H362H362V61H363H363V62H364H364V62H365H365V62H366H366V59H367H367V59H368H368V59H369H369V60H370H370V61H371H371V61H372H372V60H373H373V60H374H374V61H375H375V61H376H376V61H377H377V61H378H378V61H379H379V61H380H380V61H381H381V61H382H382V62H383H383V62H384H384V62H385H385V61H386H386V61H387H387V61H388H388V59H389H389V59H390H390V60H391H391V61H392H392V61H393H393V60H394H394V60H395H395V60H396H396V60H397H397V60H398H398V60H399H399V61H400H400V60H401H401V61H402H402V61H403H403V61H404H404V61H405H405V61H406H406V61H407H407V61H408H408V61H409H409V61H410H410V61H411H411V60H412H412V61H413H413V62H414H414V61H415H415V61H416H416V61H417H417V61H418H418V61H419H419V62H420H420V62H421H421V62H422H422V62H423H423V62H424H424V59H425H425V59H426H426V61H427H427V61H428H428V60H429H429V60H430H430V60H431H431V60H432H432V61H433H433V61H434H434V61H435H435V61H436H436V61H437H437V62H438H438V59H439H439V59H440H440V61H441H441V60H442H442V60H443H443V60H444H444V60H445H445V60H446H446V61H447H447V61H448H448V60H449H449V60H450H450V61H451H451V60H452H452V61H453H453V61H454H454V61H455H455V61H456H456V61H457H457V61H458H458V61H459H459V61H460H460V60H461H461V61H462H462V61H463H463V61H464H464V61H465H465V61H466H466V61H467H467V61H468H468V62H469H469V61H470H470V61H471H471V61H472H472V61H473H473V61H474H474V61H475H475V61H476H476V61H477H477V62H478H478V62H479H479V61H480H480V59H481H481V59H482H482V61H483H483V61H484H484V60H485H485V60H486H486V60H487H487V60H488H488V61H489H489V61H490H490V60H491H491V61H492H492V61H493H493V61H494H494V61H495H495V61H496H496V61H497H497V61H498H498V61H499H499V62H500H500V59H501H501V59H502H502V60H503H503V61H504H504V61H505H505V60H506H506V61H507H507V61H508H508V61H509H509V61H510H510V61H511H511V61H512H512V61H513H513V61H514H514V62H515H515V61H516H516V61H517H517V62H518H518V59H519H519V59H520H520V60H521H521V60H522H522V60H523H523V61H524H524V61H525H525V60H526H526V61H527H527V60H528H528V60H529H529V61H530H530V60H531H531V60H532H532V61H533H533V61H534H534V62H535H535V62H536H536V61H537H537V61H538H538V62H539H539V62H540H540V59H541H541V59H542H542V61H543H543V61H544H544V60H545H545V60H546H546V60H547H547V60H548H548V60H549H549V61H550H550V61H551H551V61H552H552V61H553H553V61H554H554V61H555H555V61H556H556V61H557H557V62H558H558V59H559H559V59H560H560V60H561H561V61H562H562V60H563H563V60H564H564V66H563H563V65H562H562V65H561H561V66H560H560V67H559H559V67H558H558V64H557H557V64H556H556V65H555H555V65H554H554V65H553H553V64H552H552V65H551H551V64H550H550V64H549H549V66H548H548V66H547H547V66H546H546V65H545H545V66H544H544V65H543H543V65H542H542V67H541H541V66H540H540V64H539H539V64H538H538V65H537H537V65H536H536V64H535H535V64H534H534V65H533H533V64H532H532V65H531H531V66H530H530V65H529H529V66H528H528V65H527H527V64H526H526V66H525H525V65H524H524V65H523H523V66H522H522V65H521H521V65H520H520V67H519H519V67H518H518V64H517H517V64H516H516V64H515H515V64H514H514V65H513H513V64H512H512V65H511H511V64H510H510V65H509H509V65H508H508V64H507H507V64H506H506V65H505H505V65H504H504V65H503H503V66H502H502V67H501H501V67H500H500V64H499H499V64H498H498V64H497H497V64H496H496V65H495H495V65H494H494V65H493H493V65H492H492V64H491H491V66H490H490V65H489H489V64H488H488V66H487H487V66H486H486V65H485H485V65H484H484V65H483H483V65H482H482V66H481H481V67H480H480V64H479H479V64H478H478V64H477H477V64H476H476V65H475H475V64H474H474V65H473H473V65H472H472V64H471H471V65H470H470V64H469H469V64H468H468V65H467H467V65H466H466V65H465H465V65H464H464V65H463H463V65H462H462V64H461H461V65H460H460V65H459H459V65H458H458V65H457H457V65H456H456V65H455H455V65H454H454V64H453H453V65H452H452V65H451H451V65H450H450V66H449H449V66H448H448V65H447H447V65H446H446V66H445H445V65H444H444V65H443H443V66H442H442V66H441H441V65H440H440V67H439H439V67H438H438V64H437H437V64H436H436V64H435H435V65H434H434V64H433H433V64H432H432V65H431H431V65H430H430V66H429H429V66H428H428V64H427H427V65H426H426V67H425H425V67H424H424V64H423H423V64H422H422V64H421H421V64H420H420V64H419H419V64H418H418V64H417H417V65H416H416V65H415H415V65H414H414V64H413H413V65H412H412V65H411H411V65H410H410V65H409H409V64H408H408V65H407H407V64H406H406V64H405H405V65H404H404V65H403H403V64H402H402V64H401H401V65H400H400V65H399H399V65H398H398V66H397H397V65H396H396V65H395H395V65H394H394V65H393H393V65H392H392V65H391H391V66H390H390V67H389H389V67H388H388V64H387H387V64H386H386V64H385H385V64H384H384V64H383H383V64H382H382V65H381H381V64H380H380V65H379H379V64H378H378V65H377H377V65H376H376V65H375H375V64H374H374V65H373H373V65H372H372V65H371H371V65H370H370V66H369H369V66H368H368V67H367H367V67H366H366V64H365H365V64H364H364V64H363H363V65H362H362V64H361H361V65H360H360V65H359H359V65H358H358V65H357H357V64H356H356V64H355H355V64H354H354V64H353H353V64H352H352V65H351H351V65H350H350V65H349H349V65H348H348V65H347H347V65H346H346V65H345H345V65H344H344V65H343H343V65H342H342V65H341H341V65H340H340V65H339H339V65H338H338V65H337H337V66H336H336V65H335H335V65H334H334V66H333H333V65H332H332V66H331H331V67H330H330V64H329H329V65H328H328V64H327H327V64H326H326V65H325H325V65H324H324V65H323H323V65H322H322V65H321H321V64H320H320V65H319H319V64H318H318V64H317H317V66H316H316V66H315H315V65H314H314V65H313H313V65H312H312V66H311H311V65H310H310V65H309H309V65H308H308V65H307H307V65H306H306V66H305H305V66H304H304V64H303H303V65H302H302V64H301H301V64H300H300V64H299H299V64H298H298V64H297H297V65H296H296V65H295H295V64H294H294V64H293H293V65H292H292V65H291H291V65H290H290V65H289H289V65H288H288V65H287H287V65H286H286V65H285H285V65H284H284V66H283H283V65H282H282V65H281H281V66H280H280V66H279H279V64H278H278V65H277H277V64H276H276V66H275H275V65H274H274V65H273H273V64H272H272V64H271H271V65H270H270V66H269H269V65H268H268V65H267H267V66H266H266V65H265H265V65H264H264V67H263H263V66H262H262V64H261H261V65H260H260V64H259H259V64H258H258V65H257H257V64H256H256V65H255H255V65H254H254V64H253H253V65H252H252V65H251H251V64H250H250V65H249H249V65H248H248V65H247H247V65H246H246V66H245H245V66H244H244V67H243H243V67H242H242V64H241H241V64H240H240V64H239H239V64H238H238V64H237H237V64H236H236V64H235H235V65H234H234V64H233H233V65H232H232V64H231H231V66H230H230V65H229H229V65H228H228V65H227H227V64H226H226V65H225H225V65H224H224V64H223H223V65H222H222V66H221H221V65H220H220V64H219H219V65H218H218V64H217H217V65H216H216V66H215H215V66H214H214V65H213H213V66H212H212V65H211H211V65H210H210V66H209H209V67H208H208V67H207H207V67H206H206V64H205H205V64H204H204V64H203H203V64H202H202V64H201H201V65H200H200V64H199H199V65H198H198V64H197H197V65H196H196V64H195H195V64H194H194V65H193H193V64H192H192V66H191H191V65H190H190V65H189H189V65H188H188V65H187H187V65H186H186V67H185H185V66H184H184V65H183H183V65H182H182V64H181H181V65H180H180V65H179H179V65H178H178V65H177H177V65H176H176V65H175H175V64H174H174V66H173H173V66H172H172V67H171H171V67H170H170V64H169H169V64H168H168V64H167H167V64H166H166V65H165H165V64H164H164V65H163H163V65H162H162V65H161H161V64H160H160V65H159H159V65H158H158V64H157H157V65H156H156V64H155H155V65H154H154V64H153H153V66H152H152V65H151H151V64H150H150V66H149H149V65H148H148V65H147H147V65H146H146V65H145H145V65H144H144V66H143H143V65H142H142V65H141H141V66H140H140V65H139H139V64H138H138V66H137H137V65H136H136V66H135H135V66H134H134V66H133H133V65H132H132V67H131H131V66H130H130V67H129H129V67H128H128V64H127H127V64H126H126V65H125H125V64H124H124V64H123H123V65H122H122V64H121H121V65H120H120V64H119H119V65H118H118V65H117H117V64H116H116V64H115H115V65H114H114V65H113H113V65H112H112V65H111H111V65H110H110V66H109H109V65H108H108V65H107H107V65H106H106V65H105H105V65H104H104V65H103H103V65H102H102V65H101H101V65H100H100V66H99H99V66H98H98V66H97H97V65H96H96V64H95H95V67H94H94V67H93H93V67H92H92V64H91H91V65H90H90V64H89H89V64H88H88V65H87H87V64H86H86V64H85H85V65H84H84V65H83H83V65H82H82V65H81H81V65H80H80V65H79H79V66H78H78V66H77H77V64H76H76V65H75H75V65H74H74V67H73H73V67H72H72V65H71H71V64H70H70V64H69H69V64H68H68V64H67H67V64H66H66V64H65H65V64H64H64V65H63H63V65H62H62V64H61H61V65H60H60V65H59H59V65H58H58V64H57H57V65H56H56V65H55H55V65H54H54V65H53H53V65H52H52V65H51H51V64H50H50V66H49H49V65H48H48V66H47H47V66H46H46V65H45H45V65H44H44V65H43H43V65H42H42V64H41H41V66H40H40V65H39H39V64H38H38V65H37H37V65H36H36V66H35H35V66H34H34V66H33H33V66H32H32V66H31H31V66H30H30V65H29H29V64H28H28V65H27H27V64H26H26V64H25H25V64H24H24V64H23H23V65H22H22V64H21H21V64H20H20V64H19H19V65H18H18V64H17H17V65H16H16V65H15H15V64H14H14V65H13H13V65H12H12V65H11H11V66H10H10V65H9H9V65H8H8V65H7H7V65H6H6V65H5H5V65H4H4V65H3H3V65H2H2V67H1H1V67H0H0Z" fill="#6a4530" shape-rendering="crispEdges"/><path d="M0 120H1V120H2H2V124H3H3V126H4H4V123H5H5V123H6H6V126H7H7V123H8H8V125H9H9V124H10H10V125H11H11V125H12H12V125H13H13V127H14H14V127H15H15V127H16H16V125H17H17V127H18H18V127H19H19V128H20H20V126H21H21V127H22H22V120H23H23V120H24H24V122H25H25V125H26H26V125H27H27V125H28H28V126H29H29V123H30H30V125H31H31V124H32H32V125H33H33V125H34H34V127H35H35V125H36H36V126H37H37V128H38H38V126H39H39V127H40H40V120H41H41V120H42H42V124H43H43V124H44H44V125H45H45V126H46H46V123H47H47V125H48H48V127H49H49V126H50H50V126H51H51V126H52H52V124H53H53V126H54H54V124H55H55V125H56H56V127H57H57V125H58H58V126H59H59V126H60H60V127H61H61V127H62H62V128H63H63V126H64H64V120H65H65V120H66H66V122H67H67V126H68H68V126H69H69V124H70H70V123H71H71V126H72H72V125H73H73V126H74H74V126H75H75V124H76H76V127H77H77V123H78H78V124H79H79V125H80H80V124H81H81V124H82H82V125H83H83V127H84H84V126H85H85V126H86H86V125H87H87V127H88H88V126H89H89V124H90H90V125H91H91V126H92H92V125H93H93V127H94H94V125H95H95V128H96H96V126H97H97V127H98H98V128H99H99V127H100H100V120H101H101V120H102H102V125H103H103V125H104H104V123H105H105V125H106H106V122H107H107V126H108H108V125H109H109V126H110H110V124H111H111V124H112H112V123H113H113V125H114H114V126H115H115V125H116H116V123H117H117V126H118H118V124H119H119V126H120H120V125H121H121V124H122H122V124H123H123V126H124H124V126H125H125V127H126H126V127H127H127V124H128H128V125H129H129V127H130H130V125H131H131V126H132H132V126H133H133V126H134H134V126H135H135V125H136H136V127H137H137V126H138H138V128H139H139V127H140H140V127H141H141V126H142H142V120H143H143V120H144H144V122H145H145V123H146H146V125H147H147V125H148H148V123H149H149V125H150H150V124H151H151V125H152H152V123H153H153V126H154H154V125H155H155V125H156H156V125H157H157V127H158H158V125H159H159V124H160H160V127H161H161V125H162H162V126H163H163V126H164H164V125H165H165V128H166H166V127H167H167V127H168H168V125H169H169V127H170H170V127H171H171V127H172H172V130H173H173V129H174H174V129H175H175V130H176H176V129H177H177V129H178H178V130H179H179V129H180H180V130H181H181V129H182H182V129H183H183V130H184H184V120H185H185V120H186H186V124H187H187V122H188H188V125H189H189V125H190H190V123H191H191V123H192H192V123H193H193V123H194H194V124H195H195V125H196H196V124H197H197V127H198H198V125H199H199V126H200H200V127H201H201V125H202H202V126H203H203V125H204H204V126H205H205V127H206H206V128H207H207V128H208H208V129H209H209V129H210H210V130H211H211V129H212H212V129H213H213V129H214H214V130H215H215V129H216H216V129H217H217V130H218H218V129H219H219V130H220H220V129H221H221V130H222H222V129H223H223V130H224H224V120H225H225V120H226H226V123H227H227V126H228H228V122H229H229V126H230H230V125H231H231V123H232H232V124H233H233V125H234H234V126H235H235V125H236H236V125H237H237V127H238H238V127H239H239V126H240H240V125H241H241V126H242H242V124H243H243V125H244H244V125H245H245V126H246H246V128H247H247V126H248H248V125H249H249V127H250H250V128H251H251V127H252H252V127H253H253V128H254H254V120H255H255V120H256H256V125H257H257V123H258H258V124H259H259V125H260H260V123H261H261V123H262H262V125H263H263V124H264H264V126H265H265V127H266H266V124H267H267V125H268H268V126H269H269V125H270H270V125H271H271V127H272H272V126H273H273V125H274H274V127H275H275V126H276H276V127H277H277V126H278H278V126H279H279V127H280H280V120H281H281V120H282H282V123H283H283V124H284H284V125H285H285V122H286H286V123H287H287V122H288H288V125H289H289V126H290H290V123H291H291V125H292H292V125H293H293V124H294H294V124H295H295V124H296H296V127H297H297V126H298H298V124H299H299V125H300H300V125H301H301V127H302H302V125H303H303V127H304H304V127H305H305V127H306H306V126H307H307V127H308H308V127H309H309V126H310H310V128H311H311V126H312H312V128H313H313V128H314H314V128H315H315V127H316H316V120H317H317V120H318H318V123H319H319V122H320H320V124H321H321V123H322H322V126H323H323V123H324H324V124H325H325V126H326H326V127H327H327V126H328H328V126H329H329V124H330H330V125H331H331V124H332H332V125H333H333V125H334H334V124H335H335V127H336H336V126H337H337V125H338H338V125H339H339V127H340H340V127H341H341V125H342H342V125H343H343V127H344H344V126H345H345V127H346H346V120H347H347V120H348H348V126H349H349V126H350H350V123H351H351V125H352H352V124H353H353V126H354H354V122H355H355V124H356H356V124H357H357V125H358H358V126H359H359V124H360H360V127H361H361V126H362H362V126H363H363V126H364H364V127H365H365V127H366H366V126H367H367V126H368H368V124H369H369V126H370H370V125H371H371V125H372H372V126H373H373V125H374H374V127H375H375V124H376H376V125H377H377V125H378H378V125H379H379V126H380H380V127H381H381V126H382H382V128H383H383V125H384H384V127H385H385V127H386H386V126H387H387V128H388H388V120H389H389V120H390H390V125H391H391V122H392H392V122H393H393V125H394H394V124H395H395V125H396H396V126H397H397V126H398H398V124H399H399V126H400H400V123H401H401V126H402H402V123H403H403V125H404H404V125H405H405V125H406H406V127H407H407V124H408H408V126H409H409V126H410H410V124H411H411V127H412H412V126H413H413V127H414H414V126H415H415V125H416H416V125H417H417V124H418H418V125H419H419V127H420H420V126H421H421V125H422H422V128H423H423V125H424H424V128H425H425V128H426H426V127H427H427V127H428H428V128H429H429V128H430H430V120H431H431V120H432H432V124H433H433V126H434H434V124H435H435V123H436H436V124H437H437V126H438H438V126H439H439V125H440H440V126H441H441V128H442H442V127H443H443V127H444H444V120H445H445V120H446H446V124H447H447V125H448H448V124H449H449V124H450H450V123H451H451V126H452H452V125H453H453V123H454H454V125H455H455V126H456H456V126H457H457V127H458H458V124H459H459V125H460H460V126H461H461V125H462H462V123H463H463V124H464H464V126H465H465V126H466H466V126H467H467V125H468H468V125H469H469V124H470H470V125H471H471V125H472H472V125H473H473V127H474H474V127H475H475V127H476H476V127H477H477V127H478H478V127H479H479V127H480H480V126H481H481V127H482H482V126H483H483V127H484H484V126H485H485V127H486H486V120H487H487V120H488H488V123H489H489V122H490H490V124H491H491V125H492H492V126H493H493V126H494H494V124H495H495V123H496H496V126H497H497V123H498H498V123H499H499V125H500H500V123H501H501V125H502H502V124H503H503V124H504H504V125H505H505V126H506H506V125H507H507V126H508H508V126H509H509V127H510H510V126H511H511V127H512H512V126H513H513V125H514H514V126H515H515V127H516H516V126H517H517V127H518H518V125H519H519V127H520H520V128H521H521V128H522H522V130H523H523V130H524H524V129H525H525V129H526H526V129H527H527V129H528H528V129H529H529V130H530H530V130H531H531V130H532H532V130H533H533V129H534H534V120H535H535V120H536H536V123H537H537V123H538H538V124H539H539V124H540H540V125H541H541V123H542H542V124H543H543V126H544H544V123H545H545V124H546H546V124H547H547V127H548H548V123H549H549V125H550H550V124H551H551V126H552H552V124H553H553V125H554H554V126H555H555V126H556H556V125H557H557V125H558H558V127H559H559V126H560H560V127H561H561V126H562H562V126H563H563V125H564H564V135H563H563V135H562H562V134H561H561V134H560H560V135H559H559V134H558H558V136H557H557V137H556H556V135H555H555V135H554H554V136H553H553V138H552H552V135H551H551V137H550H550V136H549H549V138H548H548V134H547H547V136H546H546V137H545H545V137H544H544V135H543H543V137H542H542V137H541H541V135H540H540V136H539H539V136H538H538V138H537H537V138H536H536V141H535H535V141H534H534V132H533H533V131H532H532V131H531H531V131H530H530V131H529H529V132H528H528V131H527H527V131H526H526V132H525H525V132H524H524V132H523H523V132H522H522V133H521H521V133H520H520V134H519H519V135H518H518V135H517H517V134H516H516V134H515H515V135H514H514V136H513H513V135H512H512V134H511H511V136H510H510V134H509H509V134H508H508V135H507H507V136H506H506V135H505H505V136H504H504V137H503H503V136H502H502V135H501H501V137H500H500V135H499H499V137H498H498V137H497H497V136H496H496V139H495H495V137H494H494V135H493H493V135H492H492V136H491H491V137H490H490V138H489H489V138H488H488V141H487H487V140H486H486V134H485H485V134H484H484V134H483H483V135H482H482V134H481H481V136H480H480V134H479H479V134H478H478V133H477H477V134H476H476V135H475H475V134H474H474V134H473H473V137H472H472V136H471H471V135H470H470V137H469H469V135H468H468V135H467H467V135H466H466V135H465H465V135H464H464V137H463H463V139H462H462V136H461H461V135H460H460V137H459H459V137H458H458V135H457H457V135H456H456V135H455H455V136H454H454V138H453H453V137H452H452V136H451H451V139H450H450V137H449H449V138H448H448V136H447H447V138H446H446V140H445H445V140H444H444V134H443H443V135H442H442V133H441H441V136H440H440V135H439H439V135H438H438V135H437H437V138H436H436V139H435H435V137H434H434V136H433H433V137H432H432V140H431H431V141H430H430V133H429H429V133H428H428V134H427H427V134H426H426V133H425H425V133H424H424V136H423H423V134H422H422V136H421H421V135H420H420V134H419H419V137H418H418V136H417H417V136H416H416V136H415H415V134H414H414V135H413H413V135H412H412V135H411H411V138H410H410V135H409H409V135H408H408V137H407H407V134H406H406V136H405H405V137H404H404V136H403H403V137H402H402V135H401H401V139H400H400V135H399H399V137H398H398V136H397H397V136H396H396V136H395H395V137H394H394V136H393H393V139H392H392V139H391H391V136H390H390V140H389H389V141H388H388V133H387H387V135H386H386V134H385H385V134H384H384V135H383H383V133H382H382V135H381H381V134H380H380V134H379H379V135H378H378V135H377H377V136H376H376V137H375H375V135H374H374V136H373H373V136H372H372V136H371H371V136H370H370V136H369H369V137H368H368V135H367H367V134H366H366V134H365H365V135H364H364V135H363H363V135H362H362V135H361H361V135H360H360V137H359H359V135H358H358V137H357H357V137H356H356V137H355H355V138H354H354V135H353H353V138H352H352V135H351H351V137H350H350V136H349H349V136H348H348V142H347H347V142H346H346V135H345H345V134H344H344V134H343H343V136H342H342V135H341H341V135H340H340V134H339H339V135H338H338V137H337H337V135H336H336V134H335H335V136H334H334V136H333H333V135H332H332V138H331H331V136H330H330V136H329H329V134H328H328V135H327H327V134H326H326V136H325H325V138H324H324V138H323H323V135H322H322V138H321H321V137H320H320V138H319H319V139H318H318V141H317H317V142H316H316V135H315H315V133H314H314V133H313H313V133H312H312V135H311H311V133H310H310V135H309H309V135H308H308V134H307H307V135H306H306V134H305H305V134H304H304V133H303H303V136H302H302V135H301H301V136H300H300V136H299H299V137H298H298V135H297H297V134H296H296V136H295H295V137H294H294V136H293H293V136H292H292V135H291H291V137H290H290V135H289H289V136H288H288V138H287H287V139H286H286V138H285H285V135H284H284V136H283H283V137H282H282V141H281H281V141H280H280V134H279H279V135H278H278V135H277H277V134H276H276V135H275H275V134H274H274V135H273H273V135H272H272V134H271H271V136H270H270V136H269H269V135H268H268V135H267H267V137H266H266V135H265H265V135H264H264V137H263H263V137H262H262V137H261H261V138H260H260V135H259H259V136H258H258V138H257H257V136H256H256V140H255H255V140H254H254V133H253H253V135H252H252V134H251H251V133H250H250V133H249H249V136H248H248V135H247H247V133H246H246V134H245H245V137H244H244V137H243H243V137H242H242V135H241H241V137H240H240V136H239H239V134H238H238V135H237H237V136H236H236V136H235H235V135H234H234V137H233H233V138H232H232V137H231H231V135H230H230V135H229H229V139H228H228V135H227H227V138H226H226V140H225H225V142H224H224V131H223H223V132H222H222V131H221H221V132H220H220V131H219H219V132H218H218V131H217H217V131H216H216V132H215H215V131H214H214V132H213H213V131H212H212V132H211H211V132H210H210V132H209H209V132H208H208V133H207H207V133H206H206V134H205H205V135H204H204V135H203H203V134H202H202V136H201H201V134H200H200V135H199H199V136H198H198V135H197H197V137H196H196V136H195H195V136H194H194V139H193H193V139H192H192V139H191H191V138H190H190V136H189H189V136H188H188V140H187H187V137H186H186V140H185H185V140H184H184V131H183H183V132H182H182V132H181H181V131H180H180V132H179H179V132H178H178V132H177H177V132H176H176V131H175H175V132H174H174V132H173H173V131H172H172V134H171H171V134H170H170V133H169H169V135H168H168V133H167H167V134H166H166V133H165H165V136H164H164V135H163H163V134H162H162V136H161H161V134H160H160V137H159H159V135H158H158V134H157H157V136H156H156V136H155H155V136H154H154V135H153H153V139H152H152V137H151H151V136H150H150V137H149H149V138H148H148V136H147H147V137H146H146V138H145H145V139H144H144V141H143H143V139H142H142V134H141H141V134H140H140V134H139H139V133H138H138V135H137H137V134H136H136V135H135H135V134H134H134V135H133H133V135H132H132V134H131H131V135H130H130V134H129H129V136H128H128V138H127H127V134H126H126V134H125H125V135H124H124V136H123H123V137H122H122V137H121H121V136H120H120V135H119H119V136H118H118V135H117H117V137H116H116V137H115H115V135H114H114V136H113H113V137H112H112V138H111H111V137H110H110V135H109H109V136H108H108V134H107H107V139H106H106V136H105H105V138H104H104V136H103H103V136H102H102V140H101H101V140H100H100V134H99H99V133H98H98V134H97H97V135H96H96V133H95H95V135H94H94V134H93H93V136H92H92V134H91H91V136H90H90V136H89H89V136H88H88V134H87H87V136H86H86V135H85H85V135H84H84V134H83H83V136H82H82V136H81H81V136H80H80V135H79H79V136H78H78V138H77H77V135H76H76V137H75H75V135H74H74V135H73H73V136H72H72V135H71H71V139H70H70V136H69H69V134H68H68V135H67H67V140H66H66V141H65H65V141H64H64V134H63H63V133H62H62V134H61H61V134H60H60V135H59H59V135H58H58V137H57H57V135H56H56V135H55H55V137H54H54V135H53H53V138H52H52V136H51H51V134H50H50V135H49H49V134H48H48V137H47H47V138H46H46V135H45H45V136H44H44V137H43H43V138H42H42V143H41H41V141H40H40V134H39H39V135H38H38V133H37H37V135H36H36V136H35H35V134H34H34V135H33H33V136H32H32V136H31H31V136H30H30V138H29H29V135H28H28V135H27H27V137H26H26V136H25H25V138H24H24V142H23H23V142H22H22V135H21H21V135H20H20V133H19H19V135H18H18V134H17H17V135H16H16V133H15H15V134H14H14V134H13H13V137H12H12V136H11H11V136H10H10V137H9H9V137H8H8V138H7H7V135H6H6V138H5H5V137H4H4V135H3H3V138H2H2V143H1H1V140H0H0Z" fill="#6a4530" shape-rendering="crispEdges"/></g><g id="w10"><rect x="0" y="96.3" width="158" height="1" fill="rgba(40,90,30,0.18)"/><rect x="0" y="62.199999999999996" width="158" height="1.3" fill="#3d6532"/><rect x="0" y="129.9" width="158" height="1.3" fill="#3d6532"/><path d="M0 62H1V62H2H2V62H3H3V62H4H4V62H5H5V62H6H6V62H7H7V62H8H8V62H9H9V62H10H10V62H11H11V62H12H12V62H13H13V62H14H14V62H15H15V62H16H16V62H17H17V62H18H18V62H19H19V62H20H20V57H21H21V57H22H22V58H23H23V58H24H24V58H25H25V58H26H26V58H27H27V58H28H28V59H29H29V58H30H30V59H31H31V59H32H32V59H33H33V59H34H34V59H35H35V59H36H36V60H37H37V60H38H38V62H39H39V62H40H40V62H41H41V62H42H42V62H43H43V62H44H44V62H45H45V62H46H46V62H47H47V62H48H48V62H49H49V62H50H50V57H51H51V57H52H52V58H53H53V58H54H54V58H55H55V58H56H56V59H57H57V59H58H58V59H59H59V59H60H60V59H61H61V59H62H62V60H63H63V62H64H64V62H65H65V62H66H66V62H67H67V62H68H68V62H69H69V57H70H70V57H71H71V58H72H72V58H73H73V58H74H74V58H75H75V58H76H76V59H77H77V59H78H78V59H79H79V59H80H80V59H81H81V60H82H82V62H83H83V62H84H84V62H85H85V62H86H86V62H87H87V62H88H88V62H89H89V57H90H90V57H91H91V58H92H92V58H93H93V58H94H94V58H95H95V58H96H96V58H97H97V59H98H98V59H99H99V60H100H100V60H101H101V62H102H102V62H103H103V62H104H104V62H105H105V62H106H106V62H107H107V62H108H108V57H109H109V57H110H110V58H111H111V58H112H112V58H113H113V58H114H114V58H115H115V59H116H116V59H117H117V59H118H118V59H119H119V59H120H120V59H121H121V62H122H122V62H123H123V62H124H124V62H125H125V62H126H126V62H127H127V62H128H128V57H129H129V57H130H130V58H131H131V58H132H132V58H133H133V58H134H134V59H135H135V59H136H136V59H137H137V59H138H138V59H139H139V60H140H140V60H141H141V62H142H142V62H143H143V62H144H144V62H145H145V62H146H146V62H147H147V57H148H148V57H149H149V58H150H150V58H151H151V59H152H152V59H153H153V59H154H154V59H155H155V60H156H156V62H157H157V62H158H158V64H157H157V64H156H156V66H155H155V66H154H154V67H153H153V67H152H152V67H151H151V67H150H150V67H149H149V72H148H148V72H147H147V64H146H146V64H145H145V64H144H144V64H143H143V64H142H142V64H141H141V66H140H140V66H139H139V66H138H138V66H137H137V67H136H136V66H135H135V67H134H134V67H133H133V67H132H132V67H131H131V68H130H130V72H129H129V72H128H128V64H127H127V64H126H126V64H125H125V64H124H124V64H123H123V64H122H122V64H121H121V66H120H120V66H119H119V66H118H118V66H117H117V66H116H116V67H115H115V67H114H114V67H113H113V67H112H112V67H111H111V67H110H110V72H109H109V72H108H108V64H107H107V64H106H106V64H105H105V64H104H104V64H103H103V64H102H102V64H101H101V66H100H100V66H99H99V66H98H98V67H97H97V67H96H96V67H95H95V67H94H94V67H93H93V67H92H92V67H91H91V72H90H90V72H89H89V64H88H88V64H87H87V64H86H86V64H85H85V64H84H84V64H83H83V64H82H82V66H81H81V66H80H80V66H79H79V67H78H78V67H77H77V67H76H76V67H75H75V67H74H74V67H73H73V67H72H72V68H71H71V72H70H70V72H69H69V64H68H68V64H67H67V64H66H66V64H65H65V64H64H64V64H63H63V66H62H62V66H61H61V66H60H60V66H59H59V67H58H58V67H57H57V67H56H56V67H55H55V67H54H54V67H53H53V67H52H52V72H51H51V72H50H50V64H49H49V64H48H48V64H47H47V64H46H46V64H45H45V64H44H44V64H43H43V64H42H42V64H41H41V64H40H40V64H39H39V64H38H38V65H37H37V66H36H36V66H35H35V66H34H34V66H33H33V66H32H32V66H31H31V67H30H30V67H29H29V67H28H28V67H27H27V67H26H26V67H25H25V67H24H24V67H23H23V67H22H22V72H21H21V72H20H20V64H19H19V64H18H18V64H17H17V64H16H16V64H15H15V64H14H14V64H13H13V64H12H12V64H11H11V64H10H10V64H9H9V64H8H8V64H7H7V64H6H6V64H5H5V64H4H4V64H3H3V64H2H2V64H1H1V64H0H0Z" fill="#3d6532" shape-rendering="crispEdges"/><path d="M0 130H1V130H2H2V130H3H3V130H4H4V130H5H5V130H6H6V130H7H7V130H8H8V130H9H9V130H10H10V130H11H11V130H12H12V130H13H13V130H14H14V130H15H15V130H16H16V130H17H17V130H18H18V130H19H19V130H20H20V126H21H21V126H22H22V128H23H23V127H24H24V128H25H25V128H26H26V128H27H27V128H28H28V128H29H29V128H30H30V128H31H31V128H32H32V128H33H33V129H34H34V128H35H35V129H36H36V129H37H37V128H38H38V130H39H39V130H40H40V130H41H41V130H42H42V130H43H43V130H44H44V130H45H45V130H46H46V130H47H47V130H48H48V130H49H49V130H50H50V126H51H51V126H52H52V127H53H53V128H54H54V128H55H55V128H56H56V128H57H57V128H58H58V128H59H59V129H60H60V129H61H61V129H62H62V129H63H63V130H64H64V130H65H65V130H66H66V130H67H67V130H68H68V130H69H69V126H70H70V126H71H71V127H72H72V128H73H73V128H74H74V128H75H75V128H76H76V128H77H77V128H78H78V128H79H79V129H80H80V129H81H81V129H82H82V130H83H83V130H84H84V130H85H85V130H86H86V130H87H87V130H88H88V130H89H89V126H90H90V126H91H91V128H92H92V128H93H93V128H94H94V128H95H95V128H96H96V128H97H97V128H98H98V129H99H99V128H100H100V129H101H101V130H102H102V130H103H103V130H104H104V130H105H105V130H106H106V130H107H107V130H108H108V126H109H109V126H110H110V128H111H111V128H112H112V128H113H113V128H114H114V128H115H115V128H116H116V128H117H117V128H118H118V128H119H119V128H120H120V129H121H121V130H122H122V130H123H123V130H124H124V130H125H125V130H126H126V130H127H127V130H128H128V126H129H129V126H130H130V128H131H131V128H132H132V128H133H133V128H134H134V128H135H135V128H136H136V128H137H137V128H138H138V129H139H139V129H140H140V129H141H141V130H142H142V130H143H143V130H144H144V130H145H145V130H146H146V130H147H147V126H148H148V126H149H149V128H150H150V127H151H151V128H152H152V128H153H153V128H154H154V128H155H155V129H156H156V130H157H157V130H158H158V131H157H157V131H156H156V132H155H155V133H154H154V133H153H153V133H152H152V133H151H151V133H150H150V133H149H149V136H148H148V136H147H147V131H146H146V131H145H145V131H144H144V131H143H143V131H142H142V131H141H141V132H140H140V132H139H139V132H138H138V133H137H137V133H136H136V133H135H135V133H134H134V133H133H133V133H132H132V133H131H131V133H130H130V136H129H129V136H128H128V131H127H127V131H126H126V131H125H125V131H124H124V131H123H123V131H122H122V131H121H121V132H120H120V133H119H119V133H118H118V133H117H117V133H116H116V133H115H115V133H114H114V133H113H113V133H112H112V133H111H111V133H110H110V136H109H109V136H108H108V131H107H107V131H106H106V131H105H105V131H104H104V131H103H103V131H102H102V131H101H101V132H100H100V133H99H99V132H98H98V132H97H97V133H96H96V133H95H95V133H94H94V133H93H93V133H92H92V133H91H91V136H90H90V136H89H89V131H88H88V131H87H87V131H86H86V131H85H85V131H84H84V131H83H83V131H82H82V132H81H81V132H80H80V132H79H79V133H78H78V133H77H77V133H76H76V133H75H75V133H74H74V133H73H73V133H72H72V134H71H71V136H70H70V136H69H69V131H68H68V131H67H67V131H66H66V131H65H65V131H64H64V131H63H63V132H62H62V132H61H61V132H60H60V132H59H59V133H58H58V133H57H57V133H56H56V133H55H55V133H54H54V133H53H53V134H52H52V136H51H51V136H50H50V131H49H49V131H48H48V131H47H47V131H46H46V131H45H45V131H44H44V131H43H43V131H42H42V131H41H41V131H40H40V131H39H39V131H38H38V132H37H37V132H36H36V132H35H35V133H34H34V132H33H33V133H32H32V133H31H31V133H30H30V133H29H29V133H28H28V133H27H27V133H26H26V133H25H25V133H24H24V133H23H23V133H22H22V136H21H21V136H20H20V131H19H19V131H18H18V131H17H17V131H16H16V131H15H15V131H14H14V131H13H13V131H12H12V131H11H11V131H10H10V131H9H9V131H8H8V131H7H7V131H6H6V131H5H5V131H4H4V131H3H3V131H2H2V131H1H1V131H0H0Z" fill="#3d6532" shape-rendering="crispEdges"/></g><g id="w11"><rect x="0" y="96.3" width="314" height="1" fill="rgba(40,90,30,0.18)"/><rect x="0" y="62.199999999999996" width="314" height="1.3" fill="#3d6532"/><rect x="0" y="129.9" width="314" height="1.3" fill="#3d6532"/><path d="M0 58H1V56H2H2V57H3H3V56H4H4V56H5H5V55H6H6V55H7H7V57H8H8V57H9H9V56H10H10V57H11H11V53H12H12V56H13H13V56H14H14V56H15H15V57H16H16V57H17H17V56H18H18V57H19H19V57H20H20V58H21H21V57H22H22V56H23H23V58H24H24V57H25H25V58H26H26V58H27H27V57H28H28V57H29H29V57H30H30V58H31H31V56H32H32V56H33H33V55H34H34V57H35H35V57H36H36V57H37H37V57H38H38V57H39H39V56H40H40V56H41H41V56H42H42V57H43H43V56H44H44V57H45H45V58H46H46V58H47H47V58H48H48V58H49H49V58H50H50V59H51H51V58H52H52V59H53H53V62H54H54V62H55H55V62H56H56V62H57H57V62H58H58V60H59H59V62H60H60V58H61H61V59H62H62V58H63H63V58H64H64V58H65H65V58H66H66V58H67H67V58H68H68V58H69H69V57H70H70V57H71H71V58H72H72V56H73H73V59H74H74V58H75H75V58H76H76V58H77H77V58H78H78V58H79H79V58H80H80V57H81H81V56H82H82V58H83H83V57H84H84V56H85H85V57H86H86V57H87H87V56H88H88V57H89H89V56H90H90V57H91H91V57H92H92V57H93H93V56H94H94V57H95H95V57H96H96V56H97H97V56H98H98V56H99H99V56H100H100V56H101H101V56H102H102V56H103H103V56H104H104V56H105H105V58H106H106V56H107H107V56H108H108V57H109H109V58H110H110V57H111H111V57H112H112V58H113H113V58H114H114V57H115H115V56H116H116V57H117H117V58H118H118V57H119H119V57H120H120V57H121H121V57H122H122V58H123H123V55H124H124V56H125H125V56H126H126V57H127H127V56H128H128V57H129H129V56H130H130V56H131H131V56H132H132V57H133H133V57H134H134V56H135H135V56H136H136V57H137H137V57H138H138V56H139H139V57H140H140V57H141H141V54H142H142V57H143H143V58H144H144V57H145H145V57H146H146V58H147H147V55H148H148V56H149H149V56H150H150V57H151H151V57H152H152V56H153H153V56H154H154V56H155H155V57H156H156V57H157H157V56H158H158V53H159H159V57H160H160V57H161H161V57H162H162V57H163H163V53H164H164V57H165H165V56H166H166V56H167H167V56H168H168V56H169H169V58H170H170V56H171H171V56H172H172V57H173H173V57H174H174V57H175H175V57H176H176V56H177H177V57H178H178V57H179H179V53H180H180V56H181H181V56H182H182V57H183H183V57H184H184V57H185H185V56H186H186V56H187H187V57H188H188V57H189H189V55H190H190V56H191H191V57H192H192V57H193H193V56H194H194V56H195H195V58H196H196V57H197H197V57H198H198V56H199H199V57H200H200V58H201H201V56H202H202V58H203H203V58H204H204V56H205H205V55H206H206V57H207H207V57H208H208V57H209H209V55H210H210V56H211H211V56H212H212V56H213H213V57H214H214V56H215H215V57H216H216V57H217H217V57H218H218V57H219H219V56H220H220V57H221H221V58H222H222V56H223H223V56H224H224V56H225H225V57H226H226V57H227H227V57H228H228V58H229H229V57H230H230V58H231H231V57H232H232V57H233H233V58H234H234V56H235H235V56H236H236V58H237H237V58H238H238V56H239H239V58H240H240V58H241H241V57H242H242V57H243H243V57H244H244V57H245H245V57H246H246V55H247H247V57H248H248V56H249H249V56H250H250V55H251H251V56H252H252V56H253H253V56H254H254V57H255H255V56H256H256V58H257H257V57H258H258V57H259H259V57H260H260V56H261H261V56H262H262V57H263H263V57H264H264V56H265H265V58H266H266V56H267H267V56H268H268V57H269H269V56H270H270V58H271H271V54H272H272V56H273H273V57H274H274V56H275H275V56H276H276V56H277H277V57H278H278V57H279H279V55H280H280V55H281H281V57H282H282V57H283H283V57H284H284V53H285H285V57H286H286V56H287H287V57H288H288V57H289H289V57H290H290V55H291H291V57H292H292V57H293H293V58H294H294V58H295H295V57H296H296V56H297H297V57H298H298V56H299H299V57H300H300V57H301H301V56H302H302V55H303H303V57H304H304V57H305H305V56H306H306V57H307H307V56H308H308V57H309H309V56H310H310V57H311H311V57H312H312V58H313H313V56H314H314V69H313H313V68H312H312V70H311H311V68H310H310V70H309H309V69H308H308V70H307H307V69H306H306V70H305H305V68H304H304V68H303H303V70H302H302V69H301H301V68H300H300V68H299H299V69H298H298V68H297H297V70H296H296V68H295H295V68H294H294V68H293H293V68H292H292V69H291H291V71H290H290V68H289H289V68H288H288V69H287H287V69H286H286V69H285H285V73H284H284V68H283H283V69H282H282V69H281H281V71H280H280V71H279H279V69H278H278V69H277H277V70H276H276V69H275H275V69H274H274V68H273H273V70H272H272V71H271H271V68H270H270V70H269H269V69H268H268V69H267H267V70H266H266V67H265H265V69H264H264V69H263H263V68H262H262V70H261H261V69H260H260V69H259H259V69H258H258V69H257H257V68H256H256V70H255H255V68H254H254V69H253H253V70H252H252V69H251H251V70H250H250V70H249H249V70H248H248V69H247H247V71H246H246V69H245H245V69H244H244V70H243H243V68H242H242V69H241H241V68H240H240V68H239H239V69H238H238V68H237H237V68H236H236V69H235H235V69H234H234V68H233H233V69H232H232V68H231H231V67H230H230V68H229H229V68H228H228V69H227H227V68H226H226V69H225H225V69H224H224V71H223H223V70H222H222V69H221H221V69H220H220V70H219H219V69H218H218V69H217H217V68H216H216V69H215H215V70H214H214V69H213H213V69H212H212V70H211H211V69H210H210V71H209H209V69H208H208V69H207H207V69H206H206V71H205H205V69H204H204V68H203H203V68H202H202V69H201H201V68H200H200V69H199H199V70H198H198V69H197H197V69H196H196V68H195H195V70H194H194V71H193H193V68H192H192V69H191H191V70H190H190V70H189H189V69H188H188V69H187H187V69H186H186V70H185H185V69H184H184V69H183H183V69H182H182V69H181H181V69H180H180V73H179H179V68H178H178V68H177H177V69H176H176V68H175H175V69H174H174V68H173H173V68H172H172V69H171H171V70H170H170V68H169H169V69H168H168V70H167H167V69H166H166V70H165H165V69H164H164V72H163H163V69H162H162V69H161H161V68H160H160V69H159H159V73H158H158V70H157H157V69H156H156V68H155H155V70H154H154V70H153H153V70H152H152V69H151H151V70H150H150V70H149H149V69H148H148V71H147H147V68H146H146V69H145H145V68H144H144V68H143H143V69H142H142V71H141H141V69H140H140V69H139H139V69H138H138V69H137H137V68H136H136V69H135H135V70H134H134V69H133H133V68H132H132V69H131H131V70H130H130V70H129H129V69H128H128V70H127H127V69H126H126V71H125H125V70H124H124V70H123H123V68H122H122V68H121H121V68H120H120V68H119H119V68H118H118V68H117H117V68H116H116V70H115H115V69H114H114V68H113H113V68H112H112V68H111H111V69H110H110V68H109H109V68H108H108V69H107H107V70H106H106V68H105H105V69H104H104V70H103H103V70H102H102V70H101H101V70H100H100V69H99H99V70H98H98V69H97H97V69H96H96V69H95H95V69H94H94V70H93H93V68H92H92V68H91H91V69H90H90V70H89H89V68H88H88V69H87H87V69H86H86V69H85H85V70H84H84V68H83H83V67H82H82V70H81H81V68H80H80V68H79H79V68H78H78V68H77H77V68H76H76V68H75H75V67H74H74V67H73H73V69H72H72V68H71H71V68H70H70V68H69H69V67H68H68V67H67H67V67H66H66V67H65H65V68H64H64V68H63H63V67H62H62V67H61H61V68H60H60V64H59H59V66H58H58V64H57H57V64H56H56V64H55H55V64H54H54V64H53H53V67H52H52V67H51H51V67H50H50V67H49H49V67H48H48V68H47H47V67H46H46V67H45H45V68H44H44V70H43H43V69H42H42V69H41H41V69H40H40V69H39H39V69H38H38V68H37H37V68H36H36V69H35H35V68H34H34V69H33H33V70H32H32V70H31H31V67H30H30V69H29H29V68H28H28V69H27H27V68H26H26V68H25H25V68H24H24V68H23H23V70H22H22V69H21H21V68H20H20V68H19H19V68H18H18V70H17H17V70H16H16V68H15H15V69H14H14V69H13H13V69H12H12V73H11H11V69H10H10V70H9H9V69H8H8V69H7H7V70H6H6V70H5H5V69H4H4V69H3H3V68H2H2V69H1H1V68H0H0Z" fill="#3d6532" shape-rendering="crispEdges"/><path d="M0 127H1V126H2H2V127H3H3V126H4H4V124H5H5V124H6H6V126H7H7V127H8H8V126H9H9V124H10H10V127H11H11V126H12H12V126H13H13V126H14H14V127H15H15V126H16H16V127H17H17V127H18H18V124H19H19V127H20H20V128H21H21V126H22H22V127H23H23V127H24H24V127H25H25V127H26H26V127H27H27V125H28H28V127H29H29V127H30H30V127H31H31V127H32H32V126H33H33V126H34H34V126H35H35V127H36H36V127H37H37V126H38H38V127H39H39V126H40H40V126H41H41V126H42H42V127H43H43V127H44H44V126H45H45V127H46H46V128H47H47V128H48H48V128H49H49V128H50H50V128H51H51V128H52H52V128H53H53V130H54H54V130H55H55V130H56H56V130H57H57V130H58H58V130H59H59V130H60H60V128H61H61V127H62H62V128H63H63V128H64H64V127H65H65V128H66H66V127H67H67V128H68H68V127H69H69V127H70H70V128H71H71V127H72H72V127H73H73V128H74H74V128H75H75V128H76H76V128H77H77V128H78H78V127H79H79V127H80H80V127H81H81V127H82H82V126H83H83V128H84H84V126H85H85V127H86H86V128H87H87V127H88H88V126H89H89V127H90H90V127H91H91V127H92H92V127H93H93V127H94H94V126H95H95V126H96H96V127H97H97V127H98H98V127H99H99V126H100H100V126H101H101V126H102H102V127H103H103V126H104H104V125H105H105V126H106H106V127H107H107V125H108H108V128H109H109V127H110H110V128H111H111V127H112H112V125H113H113V127H114H114V127H115H115V127H116H116V127H117H117V127H118H118V127H119H119V126H120H120V127H121H121V126H122H122V126H123H123V126H124H124V126H125H125V124H126H126V126H127H127V126H128H128V126H129H129V127H130H130V126H131H131V127H132H132V127H133H133V127H134H134V126H135H135V126H136H136V127H137H137V127H138H138V127H139H139V126H140H140V127H141H141V127H142H142V128H143H143V127H144H144V124H145H145V127H146H146V127H147H147V127H148H148V127H149H149V127H150H150V127H151H151V127H152H152V127H153H153V126H154H154V126H155H155V126H156H156V126H157H157V126H158H158V126H159H159V126H160H160V126H161H161V126H162H162V127H163H163V127H164H164V126H165H165V127H166H166V127H167H167V127H168H168V126H169H169V127H170H170V127H171H171V126H172H172V126H173H173V127H174H174V127H175H175V127H176H176V127H177H177V127H178H178V124H179H179V127H180H180V126H181H181V126H182H182V126H183H183V127H184H184V126H185H185V126H186H186V127H187H187V126H188H188V126H189H189V127H190H190V126H191H191V127H192H192V126H193H193V126H194H194V127H195H195V127H196H196V126H197H197V127H198H198V127H199H199V127H200H200V128H201H201V127H202H202V127H203H203V128H204H204V127H205H205V127H206H206V127H207H207V126H208H208V127H209H209V127H210H210V127H211H211V126H212H212V127H213H213V127H214H214V126H215H215V126H216H216V126H217H217V126H218H218V127H219H219V127H220H220V127H221H221V127H222H222V127H223H223V123H224H224V126H225H225V126H226H226V126H227H227V127H228H228V127H229H229V127H230H230V127H231H231V127H232H232V127H233H233V128H234H234V127H235H235V128H236H236V128H237H237V127H238H238V126H239H239V126H240H240V127H241H241V127H242H242V127H243H243V126H244H244V127H245H245V127H246H246V126H247H247V127H248H248V126H249H249V127H250H250V126H251H251V126H252H252V127H253H253V127H254H254V126H255H255V127H256H256V124H257H257V127H258H258V128H259H259V128H260H260V127H261H261V127H262H262V127H263H263V127H264H264V127H265H265V127H266H266V127H267H267V126H268H268V127H269H269V126H270H270V126H271H271V123H272H272V126H273H273V126H274H274V126H275H275V126H276H276V126H277H277V127H278H278V126H279H279V126H280H280V126H281H281V126H282H282V126H283H283V126H284H284V127H285H285V127H286H286V126H287H287V127H288H288V125H289H289V127H290H290V127H291H291V127H292H292V127H293H293V128H294H294V128H295H295V127H296H296V127H297H297V127H298H298V126H299H299V127H300H300V127H301H301V127H302H302V126H303H303V126H304H304V127H305H305V126H306H306V124H307H307V126H308H308V126H309H309V124H310H310V126H311H311V127H312H312V126H313H313V127H314H314V134H313H313V135H312H312V134H311H311V134H310H310V137H309H309V135H308H308V134H307H307V136H306H306V134H305H305V134H304H304V135H303H303V135H302H302V134H301H301V134H300H300V134H299H299V135H298H298V134H297H297V134H296H296V135H295H295V133H294H294V133H293H293V133H292H292V134H291H291V134H290H290V134H289H289V137H288H288V134H287H287V135H286H286V134H285H285V134H284H284V135H283H283V135H282H282V134H281H281V135H280H280V135H279H279V136H278H278V134H277H277V135H276H276V135H275H275V136H274H274V135H273H273V134H272H272V138H271H271V134H270H270V135H269H269V134H268H268V134H267H267V134H266H266V134H265H265V134H264H264V134H263H263V134H262H262V135H261H261V134H260H260V133H259H259V134H258H258V133H257H257V137H256H256V134H255H255V135H254H254V134H253H253V134H252H252V135H251H251V135H250H250V134H249H249V135H248H248V135H247H247V135H246H246V134H245H245V135H244H244V134H243H243V134H242H242V134H241H241V134H240H240V134H239H239V135H238H238V134H237H237V133H236H236V133H235H235V133H234H234V133H233H233V134H232H232V134H231H231V134H230H230V135H229H229V134H228H228V134H227H227V135H226H226V135H225H225V134H224H224V138H223H223V134H222H222V134H221H221V134H220H220V134H219H219V134H218H218V135H217H217V135H216H216V135H215H215V135H214H214V134H213H213V134H212H212V134H211H211V134H210H210V134H209H209V134H208H208V135H207H207V135H206H206V134H205H205V134H204H204V134H203H203V134H202H202V134H201H201V134H200H200V134H199H199V134H198H198V134H197H197V134H196H196V135H195H195V134H194H194V135H193H193V135H192H192V134H191H191V135H190H190V134H189H189V135H188H188V135H187H187V134H186H186V135H185H185V135H184H184V134H183H183V135H182H182V135H181H181V134H180H180V134H179H179V137H178H178V134H177H177V134H176H176V134H175H175V134H174H174V134H173H173V135H172H172V135H171H171V134H170H170V134H169H169V135H168H168V134H167H167V134H166H166V134H165H165V135H164H164V134H163H163V134H162H162V134H161H161V134H160H160V135H159H159V135H158H158V135H157H157V135H156H156V136H155H155V134H154H154V135H153H153V134H152H152V134H151H151V135H150H150V134H149H149V134H148H148V134H147H147V134H146H146V135H145H145V137H144H144V134H143H143V134H142H142V134H141H141V135H140H140V134H139H139V134H138H138V134H137H137V134H136H136V134H135H135V135H134H134V135H133H133V134H132H132V134H131H131V134H130H130V134H129H129V135H128H128V135H127H127V135H126H126V137H125H125V135H124H124V134H123H123V135H122H122V135H121H121V134H120H120V135H119H119V134H118H118V134H117H117V134H116H116V134H115H115V134H114H114V135H113H113V136H112H112V133H111H111V133H110H110V133H109H109V133H108H108V136H107H107V134H106H106V134H105H105V136H104H104V135H103H103V134H102H102V135H101H101V136H100H100V135H99H99V134H98H98V134H97H97V134H96H96V135H95H95V135H94H94V134H93H93V134H92H92V134H91H91V134H90H90V134H89H89V134H88H88V134H87H87V134H86H86V134H85H85V135H84H84V133H83H83V134H82H82V134H81H81V134H80H80V134H79H79V134H78H78V133H77H77V134H76H76V133H75H75V133H74H74V133H73H73V134H72H72V134H71H71V133H70H70V134H69H69V134H68H68V133H67H67V134H66H66V133H65H65V134H64H64V134H63H63V134H62H62V134H61H61V133H60H60V131H59H59V131H58H58V131H57H57V131H56H56V131H55H55V131H54H54V131H53H53V133H52H52V133H51H51V133H50H50V133H49H49V134H48H48V133H47H47V133H46H46V134H45H45V135H44H44V135H43H43V134H42H42V135H41H41V134H40H40V135H39H39V135H38H38V135H37H37V134H36H36V134H35H35V135H34H34V135H33H33V135H32H32V134H31H31V134H30H30V134H29H29V134H28H28V136H27H27V134H26H26V134H25H25V134H24H24V134H23H23V134H22H22V135H21H21V133H20H20V134H19H19V137H18H18V134H17H17V134H16H16V135H15H15V134H14H14V135H13H13V135H12H12V135H11H11V134H10H10V136H9H9V135H8H8V134H7H7V136H6H6V137H5H5V137H4H4V135H3H3V134H2H2V135H1H1V134H0H0Z" fill="#3d6532" shape-rendering="crispEdges"/></g><g id="w12"><rect x="0" y="96.3" width="252" height="1" fill="rgba(40,90,30,0.18)"/><rect x="0" y="62.199999999999996" width="252" height="1.3" fill="#3d6532"/><rect x="0" y="129.9" width="252" height="1.3" fill="#3d6532"/><path d="M0 58H1V56H2H2V57H3H3V56H4H4V56H5H5V55H6H6V55H7H7V57H8H8V57H9H9V56H10H10V57H11H11V53H12H12V56H13H13V56H14H14V56H15H15V57H16H16V57H17H17V56H18H18V57H19H19V57H20H20V58H21H21V57H22H22V56H23H23V58H24H24V57H25H25V58H26H26V58H27H27V57H28H28V57H29H29V57H30H30V58H31H31V56H32H32V56H33H33V55H34H34V57H35H35V57H36H36V57H37H37V57H38H38V57H39H39V56H40H40V56H41H41V56H42H42V57H43H43V56H44H44V57H45H45V58H46H46V58H47H47V58H48H48V58H49H49V58H50H50V59H51H51V58H52H52V59H53H53V62H54H54V62H55H55V62H56H56V62H57H57V62H58H58V60H59H59V62H60H60V58H61H61V59H62H62V58H63H63V58H64H64V58H65H65V58H66H66V58H67H67V58H68H68V58H69H69V57H70H70V57H71H71V58H72H72V56H73H73V59H74H74V58H75H75V58H76H76V58H77H77V58H78H78V58H79H79V58H80H80V57H81H81V56H82H82V58H83H83V57H84H84V56H85H85V57H86H86V57H87H87V56H88H88V57H89H89V56H90H90V57H91H91V57H92H92V57H93H93V56H94H94V57H95H95V57H96H96V56H97H97V56H98H98V56H99H99V56H100H100V56H101H101V56H102H102V56H103H103V56H104H104V56H105H105V58H106H106V56H107H107V56H108H108V57H109H109V58H110H110V57H111H111V57H112H112V58H113H113V58H114H114V57H115H115V56H116H116V57H117H117V58H118H118V57H119H119V57H120H120V57H121H121V57H122H122V58H123H123V55H124H124V56H125H125V56H126H126V57H127H127V56H128H128V57H129H129V56H130H130V56H131H131V56H132H132V57H133H133V57H134H134V56H135H135V56H136H136V57H137H137V57H138H138V56H139H139V57H140H140V57H141H141V54H142H142V57H143H143V58H144H144V57H145H145V57H146H146V58H147H147V55H148H148V56H149H149V56H150H150V57H151H151V57H152H152V56H153H153V56H154H154V56H155H155V57H156H156V57H157H157V56H158H158V53H159H159V57H160H160V57H161H161V57H162H162V57H163H163V53H164H164V57H165H165V56H166H166V56H167H167V56H168H168V56H169H169V58H170H170V56H171H171V56H172H172V57H173H173V57H174H174V57H175H175V57H176H176V56H177H177V57H178H178V57H179H179V53H180H180V56H181H181V56H182H182V57H183H183V57H184H184V57H185H185V56H186H186V56H187H187V57H188H188V57H189H189V55H190H190V56H191H191V57H192H192V57H193H193V56H194H194V56H195H195V58H196H196V57H197H197V57H198H198V56H199H199V57H200H200V58H201H201V56H202H202V58H203H203V58H204H204V56H205H205V55H206H206V57H207H207V57H208H208V57H209H209V55H210H210V56H211H211V56H212H212V56H213H213V57H214H214V56H215H215V57H216H216V57H217H217V57H218H218V57H219H219V56H220H220V57H221H221V58H222H222V56H223H223V56H224H224V56H225H225V57H226H226V57H227H227V57H228H228V58H229H229V57H230H230V58H231H231V57H232H232V57H233H233V58H234H234V56H235H235V56H236H236V58H237H237V58H238H238V56H239H239V58H240H240V58H241H241V57H242H242V57H243H243V57H244H244V57H245H245V57H246H246V55H247H247V57H248H248V56H249H249V56H250H250V55H251H251V56H252H252V69H251H251V70H250H250V70H249H249V70H248H248V69H247H247V71H246H246V69H245H245V69H244H244V70H243H243V68H242H242V69H241H241V68H240H240V68H239H239V69H238H238V68H237H237V68H236H236V69H235H235V69H234H234V68H233H233V69H232H232V68H231H231V67H230H230V68H229H229V68H228H228V69H227H227V68H226H226V69H225H225V69H224H224V71H223H223V70H222H222V69H221H221V69H220H220V70H219H219V69H218H218V69H217H217V68H216H216V69H215H215V70H214H214V69H213H213V69H212H212V70H211H211V69H210H210V71H209H209V69H208H208V69H207H207V69H206H206V71H205H205V69H204H204V68H203H203V68H202H202V69H201H201V68H200H200V69H199H199V70H198H198V69H197H197V69H196H196V68H195H195V70H194H194V71H193H193V68H192H192V69H191H191V70H190H190V70H189H189V69H188H188V69H187H187V69H186H186V70H185H185V69H184H184V69H183H183V69H182H182V69H181H181V69H180H180V73H179H179V68H178H178V68H177H177V69H176H176V68H175H175V69H174H174V68H173H173V68H172H172V69H171H171V70H170H170V68H169H169V69H168H168V70H167H167V69H166H166V70H165H165V69H164H164V72H163H163V69H162H162V69H161H161V68H160H160V69H159H159V73H158H158V70H157H157V69H156H156V68H155H155V70H154H154V70H153H153V70H152H152V69H151H151V70H150H150V70H149H149V69H148H148V71H147H147V68H146H146V69H145H145V68H144H144V68H143H143V69H142H142V71H141H141V69H140H140V69H139H139V69H138H138V69H137H137V68H136H136V69H135H135V70H134H134V69H133H133V68H132H132V69H131H131V70H130H130V70H129H129V69H128H128V70H127H127V69H126H126V71H125H125V70H124H124V70H123H123V68H122H122V68H121H121V68H120H120V68H119H119V68H118H118V68H117H117V68H116H116V70H115H115V69H114H114V68H113H113V68H112H112V68H111H111V69H110H110V68H109H109V68H108H108V69H107H107V70H106H106V68H105H105V69H104H104V70H103H103V70H102H102V70H101H101V70H100H100V69H99H99V70H98H98V69H97H97V69H96H96V69H95H95V69H94H94V70H93H93V68H92H92V68H91H91V69H90H90V70H89H89V68H88H88V69H87H87V69H86H86V69H85H85V70H84H84V68H83H83V67H82H82V70H81H81V68H80H80V68H79H79V68H78H78V68H77H77V68H76H76V68H75H75V67H74H74V67H73H73V69H72H72V68H71H71V68H70H70V68H69H69V67H68H68V67H67H67V67H66H66V67H65H65V68H64H64V68H63H63V67H62H62V67H61H61V68H60H60V64H59H59V66H58H58V64H57H57V64H56H56V64H55H55V64H54H54V64H53H53V67H52H52V67H51H51V67H50H50V67H49H49V67H48H48V68H47H47V67H46H46V67H45H45V68H44H44V70H43H43V69H42H42V69H41H41V69H40H40V69H39H39V69H38H38V68H37H37V68H36H36V69H35H35V68H34H34V69H33H33V70H32H32V70H31H31V67H30H30V69H29H29V68H28H28V69H27H27V68H26H26V68H25H25V68H24H24V68H23H23V70H22H22V69H21H21V68H20H20V68H19H19V68H18H18V70H17H17V70H16H16V68H15H15V69H14H14V69H13H13V69H12H12V73H11H11V69H10H10V70H9H9V69H8H8V69H7H7V70H6H6V70H5H5V69H4H4V69H3H3V68H2H2V69H1H1V68H0H0Z" fill="#3d6532" shape-rendering="crispEdges"/><path d="M0 127H1V126H2H2V127H3H3V126H4H4V124H5H5V124H6H6V126H7H7V127H8H8V126H9H9V124H10H10V127H11H11V126H12H12V126H13H13V126H14H14V127H15H15V126H16H16V127H17H17V127H18H18V124H19H19V127H20H20V128H21H21V126H22H22V127H23H23V127H24H24V127H25H25V127H26H26V127H27H27V125H28H28V127H29H29V127H30H30V127H31H31V127H32H32V126H33H33V126H34H34V126H35H35V127H36H36V127H37H37V126H38H38V127H39H39V126H40H40V126H41H41V126H42H42V127H43H43V127H44H44V126H45H45V127H46H46V128H47H47V128H48H48V128H49H49V128H50H50V128H51H51V128H52H52V128H53H53V130H54H54V130H55H55V130H56H56V130H57H57V130H58H58V130H59H59V130H60H60V128H61H61V127H62H62V128H63H63V128H64H64V127H65H65V128H66H66V127H67H67V128H68H68V127H69H69V127H70H70V128H71H71V127H72H72V127H73H73V128H74H74V128H75H75V128H76H76V128H77H77V128H78H78V127H79H79V127H80H80V127H81H81V127H82H82V126H83H83V128H84H84V126H85H85V127H86H86V128H87H87V127H88H88V126H89H89V127H90H90V127H91H91V127H92H92V127H93H93V127H94H94V126H95H95V126H96H96V127H97H97V127H98H98V127H99H99V126H100H100V126H101H101V126H102H102V127H103H103V126H104H104V125H105H105V126H106H106V127H107H107V125H108H108V128H109H109V127H110H110V128H111H111V127H112H112V125H113H113V127H114H114V127H115H115V127H116H116V127H117H117V127H118H118V127H119H119V126H120H120V127H121H121V126H122H122V126H123H123V126H124H124V126H125H125V124H126H126V126H127H127V126H128H128V126H129H129V127H130H130V126H131H131V127H132H132V127H133H133V127H134H134V126H135H135V126H136H136V127H137H137V127H138H138V127H139H139V126H140H140V127H141H141V127H142H142V128H143H143V127H144H144V124H145H145V127H146H146V127H147H147V127H148H148V127H149H149V127H150H150V127H151H151V127H152H152V127H153H153V126H154H154V126H155H155V126H156H156V126H157H157V126H158H158V126H159H159V126H160H160V126H161H161V126H162H162V127H163H163V127H164H164V126H165H165V127H166H166V127H167H167V127H168H168V126H169H169V127H170H170V127H171H171V126H172H172V126H173H173V127H174H174V127H175H175V127H176H176V127H177H177V127H178H178V124H179H179V127H180H180V126H181H181V126H182H182V126H183H183V127H184H184V126H185H185V126H186H186V127H187H187V126H188H188V126H189H189V127H190H190V126H191H191V127H192H192V126H193H193V126H194H194V127H195H195V127H196H196V126H197H197V127H198H198V127H199H199V127H200H200V128H201H201V127H202H202V127H203H203V128H204H204V127H205H205V127H206H206V127H207H207V126H208H208V127H209H209V127H210H210V127H211H211V126H212H212V127H213H213V127H214H214V126H215H215V126H216H216V126H217H217V126H218H218V127H219H219V127H220H220V127H221H221V127H222H222V127H223H223V123H224H224V126H225H225V126H226H226V126H227H227V127H228H228V127H229H229V127H230H230V127H231H231V127H232H232V127H233H233V128H234H234V127H235H235V128H236H236V128H237H237V127H238H238V126H239H239V126H240H240V127H241H241V127H242H242V127H243H243V126H244H244V127H245H245V127H246H246V126H247H247V127H248H248V126H249H249V127H250H250V126H251H251V126H252H252V135H251H251V135H250H250V134H249H249V135H248H248V135H247H247V135H246H246V134H245H245V135H244H244V134H243H243V134H242H242V134H241H241V134H240H240V134H239H239V135H238H238V134H237H237V133H236H236V133H235H235V133H234H234V133H233H233V134H232H232V134H231H231V134H230H230V135H229H229V134H228H228V134H227H227V135H226H226V135H225H225V134H224H224V138H223H223V134H222H222V134H221H221V134H220H220V134H219H219V134H218H218V135H217H217V135H216H216V135H215H215V135H214H214V134H213H213V134H212H212V134H211H211V134H210H210V134H209H209V134H208H208V135H207H207V135H206H206V134H205H205V134H204H204V134H203H203V134H202H202V134H201H201V134H200H200V134H199H199V134H198H198V134H197H197V134H196H196V135H195H195V134H194H194V135H193H193V135H192H192V134H191H191V135H190H190V134H189H189V135H188H188V135H187H187V134H186H186V135H185H185V135H184H184V134H183H183V135H182H182V135H181H181V134H180H180V134H179H179V137H178H178V134H177H177V134H176H176V134H175H175V134H174H174V134H173H173V135H172H172V135H171H171V134H170H170V134H169H169V135H168H168V134H167H167V134H166H166V134H165H165V135H164H164V134H163H163V134H162H162V134H161H161V134H160H160V135H159H159V135H158H158V135H157H157V135H156H156V136H155H155V134H154H154V135H153H153V134H152H152V134H151H151V135H150H150V134H149H149V134H148H148V134H147H147V134H146H146V135H145H145V137H144H144V134H143H143V134H142H142V134H141H141V135H140H140V134H139H139V134H138H138V134H137H137V134H136H136V134H135H135V135H134H134V135H133H133V134H132H132V134H131H131V134H130H130V134H129H129V135H128H128V135H127H127V135H126H126V137H125H125V135H124H124V134H123H123V135H122H122V135H121H121V134H120H120V135H119H119V134H118H118V134H117H117V134H116H116V134H115H115V134H114H114V135H113H113V136H112H112V133H111H111V133H110H110V133H109H109V133H108H108V136H107H107V134H106H106V134H105H105V136H104H104V135H103H103V134H102H102V135H101H101V136H100H100V135H99H99V134H98H98V134H97H97V134H96H96V135H95H95V135H94H94V134H93H93V134H92H92V134H91H91V134H90H90V134H89H89V134H88H88V134H87H87V134H86H86V134H85H85V135H84H84V133H83H83V134H82H82V134H81H81V134H80H80V134H79H79V134H78H78V133H77H77V134H76H76V133H75H75V133H74H74V133H73H73V134H72H72V134H71H71V133H70H70V134H69H69V134H68H68V133H67H67V134H66H66V133H65H65V134H64H64V134H63H63V134H62H62V134H61H61V133H60H60V131H59H59V131H58H58V131H57H57V131H56H56V131H55H55V131H54H54V131H53H53V133H52H52V133H51H51V133H50H50V133H49H49V134H48H48V133H47H47V133H46H46V134H45H45V135H44H44V135H43H43V134H42H42V135H41H41V134H40H40V135H39H39V135H38H38V135H37H37V134H36H36V134H35H35V135H34H34V135H33H33V135H32H32V134H31H31V134H30H30V134H29H29V134H28H28V136H27H27V134H26H26V134H25H25V134H24H24V134H23H23V134H22H22V135H21H21V133H20H20V134H19H19V137H18H18V134H17H17V134H16H16V135H15H15V134H14H14V135H13H13V135H12H12V135H11H11V134H10H10V136H9H9V135H8H8V134H7H7V136H6H6V137H5H5V137H4H4V135H3H3V134H2H2V135H1H1V134H0H0Z" fill="#3d6532" shape-rendering="crispEdges"/></g></defs></svg>
<div class="a" style="left:11.8px;top:13.2px;width:18px;height:18px;border-radius:50%;background:#ee6a5f"></div>
<div class="a" style="left:41.3px;top:13.2px;width:18px;height:18px;border-radius:50%;background:#f5bf4f"></div>
<div class="a" style="left:71.2px;top:13.2px;width:18px;height:18px;border-radius:50%;background:#61c454"></div>
<div class="t" style="left:0;width:2560px;text-align:center;top:10.2px;font-size:20px;font-weight:bold;color:#a7abb1;padding-left:0px">Audacity 4</div>
<div class="a" style="left:95px;top:43.5px;width:107px;height:51.5px;background:#383b51"></div>
<div class="a" style="left:95px;top:93px;width:107px;height:2px;background:#7a68d4"></div>
<div class="t" style="left:19.5px;top:57.1px;font-size:20.5px;color:#eef0f2;">Home</div>
<div class="t" style="left:112.0px;top:57.9px;font-size:20.5px;font-weight:bold;color:#f4f5f7;">Project</div>
<div class="t" style="left:221.5px;top:57.1px;font-size:20.5px;color:#eef0f2;">Publish</div>
<div class="t" style="left:330.5px;top:57.1px;font-size:20.5px;color:#eef0f2;">DevTools</div>
<svg class="a" style="left:1142.5px;top:52px" width="32" height="32" viewBox="0 0 32 32" fill="none" stroke="#e8eaed" stroke-width="1.6">
<path d="M4 3.5v25M14 3.5v25M24 3.5v25"/>
<rect x="1.5" y="17" width="5" height="7" rx="2.5" fill="#2e3238"/>
<rect x="11.5" y="8" width="5" height="7" rx="2.5" fill="#2e3238"/>
<rect x="21.5" y="13" width="5" height="7" rx="2.5" fill="#2e3238"/>
</svg>
<div class="t" style="left:1182.8px;top:59.3px;font-size:18.5px;color:#e8eaed;">Mixer</div>
<svg class="a" style="left:1265px;top:53px" width="30" height="30" viewBox="0 0 24 24" fill="none" stroke="#e8eaed" stroke-width="1.4" stroke-linejoin="round" stroke-linecap="round">
<path d="M14.7 6.3a1 1 0 0 0 0 1.4l1.6 1.6a1 1 0 0 0 1.4 0l3.77-3.77a6 6 0 0 1-7.94 7.94l-6.91 6.91a2.12 2.12 0 0 1-3-3l6.91-6.91a6 6 0 0 1 7.94-7.94l-3.76 3.76z"/>
</svg>
<div class="t" style="left:1305.8px;top:59.3px;font-size:18.5px;color:#e8eaed;">Audio setup</div>
<div class="a" style="left:0;top:96.2px;width:2560px;height:2px;background:#3b3f46"></div>
<div class="a" style="left:0;top:98.2px;width:2560px;height:71px;background:#2e323a"></div>
<div class="a" style="left:0;top:169px;width:2560px;height:1.5px;background:#3b3f46"></div>
<div class="a" style="left:14.8px;top:123.0px;width:3.2px;height:3.2px;background:#e9ebee;border-radius:0.5px"></div><div class="a" style="left:14.8px;top:132.2px;width:3.2px;height:3.2px;background:#e9ebee;border-radius:0.5px"></div><div class="a" style="left:14.8px;top:141.4px;width:3.2px;height:3.2px;background:#e9ebee;border-radius:0.5px"></div><div class="a" style="left:23.6px;top:123.0px;width:3.2px;height:3.2px;background:#e9ebee;border-radius:0.5px"></div><div class="a" style="left:23.6px;top:132.2px;width:3.2px;height:3.2px;background:#e9ebee;border-radius:0.5px"></div><div class="a" style="left:23.6px;top:141.4px;width:3.2px;height:3.2px;background:#e9ebee;border-radius:0.5px"></div>
<div class="btn" style="left:41.8px;top:110px;width:47px;height:47px"></div>
<div class="btn" style="left:95.1px;top:110px;width:47px;height:47px"></div>
<div class="btn" style="left:148.4px;top:110px;width:47px;height:47px"></div>
<div class="btn" style="left:201.7px;top:110px;width:47px;height:47px"></div>
<div class="btn" style="left:255.0px;top:110px;width:47px;height:47px"></div>
<div class="btn" style="left:308.3px;top:110px;width:47px;height:47px"></div>
<svg class="a" style="left:41.8px;top:110px" width="47" height="47" viewBox="0 0 47 47"><path d="M13.5 13.3 L33.8 23.3 L13.5 33.7 Z" fill="#19ad95" stroke="#19ad95" stroke-width="1.5" stroke-linejoin="round"/></svg>
<div class="a" style="left:108.5px;top:123px;width:20.3px;height:20.3px;border-radius:2.5px;background:#eef1f5"></div>
<div class="a" style="left:161.3px;top:122.9px;width:20.4px;height:20.4px;border-radius:50%;background:#ee3a6a"></div>
<svg class="a" style="left:201.6px;top:110px" width="47" height="47" viewBox="0 0 47 47"><path d="M12.7 12.5v22" stroke="#eef0f3" stroke-width="2.4"/><path d="M17.8 23.5 L37 12.8 V34 Z" fill="#eef0f3" stroke="#eef0f3" stroke-width="1.2" stroke-linejoin="round"/></svg>
<svg class="a" style="left:255.3px;top:110px" width="47" height="47" viewBox="0 0 47 47"><path d="M34.2 12.5v22" stroke="#eef0f3" stroke-width="2.4"/><path d="M29.5 23.5 L10 12.8 V34 Z" fill="#eef0f3" stroke="#eef0f3" stroke-width="1.2" stroke-linejoin="round"/></svg>
<svg class="a" style="left:308.2px;top:110px" width="47" height="47" viewBox="0 0 47 47" fill="none" stroke="#eef0f3" stroke-width="1.7" stroke-linecap="round" stroke-linejoin="round">
<path d="M12.8 17.5v14.5h19"/><path d="M28.3 28.5l3.5 3.5-3.5 3.5"/>
<path d="M34.8 32.5v-17h-19"/><path d="M19.3 12l-3.5 3.5 3.5 3.5"/>
</svg>
<div class="sep" style="left:362.3px;top:101px;height:65px"></div>
<div class="sep" style="left:417.3px;top:101px;height:65px"></div>
<div class="sep" style="left:519.8px;top:101px;height:65px"></div>
<div class="sep" style="left:621.2px;top:101px;height:65px"></div>
<div class="sep" style="left:805px;top:101px;height:65px"></div>
<div class="sep" style="left:1030.4px;top:101px;height:65px"></div>
<div class="btn" style="left:369.1px;top:112.7px;width:41px;height:41px"></div>
<div class="btn" style="left:424.1px;top:112.7px;width:41px;height:41px"></div>
<div class="btn" style="left:471.4px;top:112.7px;width:41px;height:41px"></div>
<div class="btn" style="left:526.2px;top:112.7px;width:41px;height:41px"></div>
<div class="btn" style="left:573.5px;top:112.7px;width:41px;height:41px"></div>
<div class="btn" style="left:1037.3px;top:112.7px;width:41px;height:41px"></div>
<div class="btn" style="left:1458.1px;top:112.7px;width:41px;height:41px"></div>
<svg class="a" style="left:369.1px;top:112.7px" width="41" height="41" viewBox="0 0 41 41" fill="none" stroke="#eef0f3" stroke-width="1.7" stroke-linecap="round">
<circle cx="12" cy="28.3" r="3.6"/><circle cx="27.4" cy="13" r="3.6"/><path d="M14.6 25.7 L24.8 15.6"/><path d="M3.5 28.3h4.8M31 13h5"/>
</svg>
<svg class="a" style="left:424.1px;top:112.7px" width="41" height="41" viewBox="0 0 41 41" fill="none" stroke="#eef0f3" stroke-width="1.7" stroke-linecap="round">
<circle cx="17.7" cy="18" r="8.6"/><path d="M23.9 24.4 L31.5 32"/><path d="M17.7 14.6v6.8M14.3 18h6.8" stroke-width="2"/>
</svg>
<svg class="a" style="left:471.4px;top:112.7px" width="41" height="41" viewBox="0 0 41 41" fill="none" stroke="#eef0f3" stroke-width="1.7" stroke-linecap="round">
<circle cx="17.2" cy="18" r="8.6"/><path d="M23.4 24.4 L31 32"/><path d="M13.8 18h6.8" stroke-width="2"/>
</svg>
<svg class="a" style="left:526.2px;top:110.4px" width="41" height="41" viewBox="0 0 41 41" fill="none" stroke="#eef0f3" stroke-width="1.5" stroke-linecap="round" stroke-linejoin="round">
<path d="M8 30V16.5a1.8 1.8 0 0 1 3.6 0V29.5a1.8 1.8 0 0 0 3.6 0V16.5"/>
<path d="M15.2 23h10.6"/>
<path d="M25.8 16.5v13a1.8 1.8 0 0 0 3.6 0V16.5a1.8 1.8 0 0 1 3.6 0V30"/>
</svg>
<svg class="a" style="left:572.8px;top:110.4px" width="41" height="41" viewBox="0 0 41 41" fill="none" stroke="#eef0f3" stroke-width="1.5" stroke-linecap="round" stroke-linejoin="round">
<path d="M7.5 23h6.5"/><path d="M14 30V16.5a1.8 1.8 0 0 1 3.6 0V29.5a1.8 1.8 0 0 0 3.6 0V16.5a1.8 1.8 0 0 1 3.6 0V29.5a1.8 1.8 0 0 0 3.6 0V16"/><path d="M28.4 23h6.5"/>
</svg>
<div class="a" style="left:628.7px;top:113px;width:169px;height:40.6px;background:#1b1e25;border-radius:5px"></div>
<div class="a" style="left:773.5px;top:113px;width:1px;height:40.6px;background:#2c3038"></div>
<div class="t" style="left:638.6px;top:120.6px;font-size:24px;font-weight:bold;color:#f4f6f8;letter-spacing:3.4px;">000,012<span style="color:#c9cdd2">s</span></div>
<svg class="a" style="left:781px;top:128.5px" width="11" height="9" viewBox="0 0 11 9"><path d="M1 1.5h9L5.5 8z" fill="#eef0f3"/></svg>
<div class="t" style="left:812.3px;top:124.7px;font-size:18.5px;color:#e8eaed;">Snap</div>
<div class="a" style="left:864px;top:119px;width:29.3px;height:29.3px;background:#50555d;border-radius:4px"></div>
<div class="a" style="left:903px;top:113.2px;width:120px;height:40px;border:1px solid #43474e;border-radius:5px"></div>
<div class="t" style="left:920.0px;top:124.5px;font-size:18.5px;color:#e8eaed;">Bar</div>
<svg class="a" style="left:995px;top:128.3px" width="11" height="9" viewBox="0 0 11 9"><path d="M1 1.5h9L5.5 8z" fill="#eef0f3"/></svg>
<svg class="a" style="left:1037.3px;top:112.7px" width="41" height="41" viewBox="0 0 41 41" fill="none" stroke="#eef0f3" stroke-width="1.6" stroke-linecap="round">
<rect x="16" y="7.4" width="9.8" height="19.4" rx="4.9"/><path d="M12.6 21.5a8.3 8.3 0 0 0 16.6 0"/><path d="M20.9 29.8v5.6M16.4 35.5h9"/>
</svg>
<svg class="a" style="left:1090px;top:120px" width="30" height="27" viewBox="0 0 30 27" fill="none" stroke="#eef0f3" stroke-width="1.6" stroke-linejoin="round" stroke-linecap="round">
<path d="M4 10h4.5l7-5.5v18l-7-5.5H4z"/><path d="M18.5 11.5a2.8 2.8 0 0 1 0 4"/><path d="M21.5 8a7.5 7.5 0 0 1 0 11"/><path d="M24.6 5a12 12 0 0 1 0 17"/>
</svg>
<div class="a" style="left:1133.5px;top:119px;width:293px;height:8.8px;background:#3c4047;border-radius:1px"></div>
<div class="a" style="left:1133.5px;top:131.2px;width:293px;height:7.3px;background:#3c4047;border-radius:1px"></div>
<div class="a" style="left:1416.5px;top:117.2px;width:23.3px;height:23.3px;border-radius:50%;border:1.6px solid #eceef1;background:rgba(46,50,58,0.55)"></div>
<div class="t" style="left:1134.0px;top:141.1px;font-size:11.5px;color:#b5b9be;letter-spacing:0.5px;">-56</div>
<div class="t" style="left:1181.0px;top:141.1px;font-size:11.5px;color:#b5b9be;letter-spacing:0.5px;">-48</div>
<div class="t" style="left:1240.0px;top:141.1px;font-size:11.5px;color:#b5b9be;letter-spacing:0.5px;">-36</div>
<div class="t" style="left:1299.0px;top:141.1px;font-size:11.5px;color:#b5b9be;letter-spacing:0.5px;">-24</div>
<div class="t" style="left:1357.7px;top:141.1px;font-size:11.5px;color:#b5b9be;letter-spacing:0.5px;">-12</div>
<div class="t" style="left:1425.5px;top:141.1px;font-size:11.5px;color:#b5b9be;letter-spacing:0.5px;">0</div>
<svg class="a" style="left:1458.1px;top:112.7px" width="41" height="41" viewBox="0 0 41 41" fill="none" stroke="#eef0f3" stroke-width="1.6" stroke-linejoin="round">
<path d="M17.16 8.04L23.84 8.04L24.93 12.08L25.66 12.50L29.71 11.42L33.05 17.21L30.09 20.18L30.09 21.02L33.05 23.99L29.71 29.78L25.66 28.70L24.93 29.12L23.84 33.16L17.16 33.16L16.07 29.12L15.34 28.70L11.29 29.78L7.95 23.99L10.91 21.02L10.91 20.18L7.95 17.21L11.29 11.42L15.34 12.50L16.07 12.08Z"/><circle cx="20.5" cy="20.6" r="3.9"/></svg>
<div class="a" style="left:0;top:170.5px;width:417px;height:46.5px;background:#282b31"></div>
<div class="a" style="left:14.8px;top:184.0px;width:3.2px;height:3.2px;background:#e9ebee;border-radius:0.5px"></div><div class="a" style="left:14.8px;top:193.2px;width:3.2px;height:3.2px;background:#e9ebee;border-radius:0.5px"></div><div class="a" style="left:14.8px;top:202.4px;width:3.2px;height:3.2px;background:#e9ebee;border-radius:0.5px"></div><div class="a" style="left:23.6px;top:184.0px;width:3.2px;height:3.2px;background:#e9ebee;border-radius:0.5px"></div><div class="a" style="left:23.6px;top:193.2px;width:3.2px;height:3.2px;background:#e9ebee;border-radius:0.5px"></div><div class="a" style="left:23.6px;top:202.4px;width:3.2px;height:3.2px;background:#e9ebee;border-radius:0.5px"></div>
<div class="a" style="left:42px;top:170.5px;width:1px;height:46.5px;background:#3b3f46"></div>
<svg class="a" style="left:152.5px;top:183.5px" width="22" height="22" viewBox="0 0 22 22" stroke="#e8eaed" stroke-width="1.6"><path d="M11 1v20M1 11h20"/></svg>
<div class="t" style="left:188.0px;top:185.7px;font-size:18.5px;color:#e8eaed;">Add new track</div>
<div class="a" style="left:0;top:216px;width:417px;height:2px;background:#3b3f46"></div>
<div class="a" style="left:417px;top:170.5px;width:2143px;height:47px;background:#272a2f"></div>
<div class="a" style="left:436px;top:193px;width:2124px;height:1.5px;background:#3b3f46"></div>
<div class="a" style="left:417px;top:216.2px;width:2143px;height:1.6px;background:#3b3f46"></div>
<div class="a" style="left:417px;top:217.8px;width:2143px;height:1321.2px;background:#222529"></div>
<div class="a" style="left:417.5px;top:217.8px;width:18.5px;height:1321.2px;background:#202327"></div>
<div class="a" style="left:417px;top:170.5px;width:1px;height:1368.5px;background:#3b3f46"></div>
<div class="a" style="left:435.5px;top:170.5px;width:1.2px;height:1368.5px;background:#3a3e44"></div>
<svg class="a" style="left:0;top:0" width="2560" height="1600"><rect x="482.63" y="217.8" width="1.2" height="1321.2" fill="#363940"/><rect x="482.63" y="209.5" width="1.3" height="6.5" fill="#7d8187"/><rect x="529.86" y="217.8" width="1.2" height="1321.2" fill="#363940"/><rect x="529.86" y="209.5" width="1.3" height="6.5" fill="#7d8187"/><rect x="577.09" y="217.8" width="1.2" height="1321.2" fill="#363940"/><rect x="577.09" y="209.5" width="1.3" height="6.5" fill="#7d8187"/><rect x="624.32" y="217.8" width="1.2" height="1321.2" fill="#363940"/><rect x="624.32" y="209.5" width="1.3" height="6.5" fill="#7d8187"/><rect x="671.55" y="217.8" width="1.2" height="1321.2" fill="#363940"/><rect x="671.55" y="204" width="1.3" height="12" fill="#8a8e94"/><rect x="718.78" y="217.8" width="1.2" height="1321.2" fill="#363940"/><rect x="718.78" y="209.5" width="1.3" height="6.5" fill="#7d8187"/><rect x="766.01" y="217.8" width="1.2" height="1321.2" fill="#363940"/><rect x="766.01" y="209.5" width="1.3" height="6.5" fill="#7d8187"/><rect x="813.24" y="217.8" width="1.2" height="1321.2" fill="#363940"/><rect x="813.24" y="209.5" width="1.3" height="6.5" fill="#7d8187"/><rect x="860.47" y="217.8" width="1.2" height="1321.2" fill="#363940"/><rect x="860.47" y="209.5" width="1.3" height="6.5" fill="#7d8187"/><rect x="907.70" y="217.8" width="1.2" height="1321.2" fill="#363940"/><rect x="907.70" y="204" width="1.3" height="12" fill="#8a8e94"/><rect x="954.93" y="217.8" width="1.2" height="1321.2" fill="#363940"/><rect x="954.93" y="209.5" width="1.3" height="6.5" fill="#7d8187"/><rect x="1002.16" y="217.8" width="1.2" height="1321.2" fill="#363940"/><rect x="1002.16" y="209.5" width="1.3" height="6.5" fill="#7d8187"/><rect x="1049.39" y="217.8" width="1.2" height="1321.2" fill="#363940"/><rect x="1049.39" y="209.5" width="1.3" height="6.5" fill="#7d8187"/><rect x="1096.62" y="217.8" width="1.2" height="1321.2" fill="#363940"/><rect x="1096.62" y="209.5" width="1.3" height="6.5" fill="#7d8187"/><rect x="1143.85" y="217.8" width="1.2" height="1321.2" fill="#363940"/><rect x="1143.85" y="204" width="1.3" height="12" fill="#8a8e94"/><rect x="1191.08" y="217.8" width="1.2" height="1321.2" fill="#363940"/><rect x="1191.08" y="209.5" width="1.3" height="6.5" fill="#7d8187"/><rect x="1238.31" y="217.8" width="1.2" height="1321.2" fill="#363940"/><rect x="1238.31" y="209.5" width="1.3" height="6.5" fill="#7d8187"/><rect x="1285.54" y="217.8" width="1.2" height="1321.2" fill="#363940"/><rect x="1285.54" y="209.5" width="1.3" height="6.5" fill="#7d8187"/><rect x="1332.77" y="217.8" width="1.2" height="1321.2" fill="#363940"/><rect x="1332.77" y="209.5" width="1.3" height="6.5" fill="#7d8187"/><rect x="1380.00" y="217.8" width="1.2" height="1321.2" fill="#363940"/><rect x="1380.00" y="204" width="1.3" height="12" fill="#8a8e94"/><rect x="1427.23" y="217.8" width="1.2" height="1321.2" fill="#363940"/><rect x="1427.23" y="209.5" width="1.3" height="6.5" fill="#7d8187"/><rect x="1474.46" y="217.8" width="1.2" height="1321.2" fill="#363940"/><rect x="1474.46" y="209.5" width="1.3" height="6.5" fill="#7d8187"/><rect x="1521.69" y="217.8" width="1.2" height="1321.2" fill="#363940"/><rect x="1521.69" y="209.5" width="1.3" height="6.5" fill="#7d8187"/><rect x="1568.92" y="217.8" width="1.2" height="1321.2" fill="#363940"/><rect x="1568.92" y="209.5" width="1.3" height="6.5" fill="#7d8187"/><rect x="1616.15" y="217.8" width="1.2" height="1321.2" fill="#363940"/><rect x="1616.15" y="204" width="1.3" height="12" fill="#8a8e94"/><rect x="1663.38" y="217.8" width="1.2" height="1321.2" fill="#363940"/><rect x="1663.38" y="209.5" width="1.3" height="6.5" fill="#7d8187"/><rect x="1710.61" y="217.8" width="1.2" height="1321.2" fill="#363940"/><rect x="1710.61" y="209.5" width="1.3" height="6.5" fill="#7d8187"/><rect x="1757.84" y="217.8" width="1.2" height="1321.2" fill="#363940"/><rect x="1757.84" y="209.5" width="1.3" height="6.5" fill="#7d8187"/><rect x="1805.07" y="217.8" width="1.2" height="1321.2" fill="#363940"/><rect x="1805.07" y="209.5" width="1.3" height="6.5" fill="#7d8187"/><rect x="1852.30" y="217.8" width="1.2" height="1321.2" fill="#363940"/><rect x="1852.30" y="204" width="1.3" height="12" fill="#8a8e94"/><rect x="1899.53" y="217.8" width="1.2" height="1321.2" fill="#363940"/><rect x="1899.53" y="209.5" width="1.3" height="6.5" fill="#7d8187"/><rect x="1946.76" y="217.8" width="1.2" height="1321.2" fill="#363940"/><rect x="1946.76" y="209.5" width="1.3" height="6.5" fill="#7d8187"/><rect x="1993.99" y="217.8" width="1.2" height="1321.2" fill="#363940"/><rect x="1993.99" y="209.5" width="1.3" height="6.5" fill="#7d8187"/><rect x="2041.22" y="217.8" width="1.2" height="1321.2" fill="#363940"/><rect x="2041.22" y="209.5" width="1.3" height="6.5" fill="#7d8187"/><rect x="2088.45" y="217.8" width="1.2" height="1321.2" fill="#363940"/><rect x="2088.45" y="204" width="1.3" height="12" fill="#8a8e94"/><rect x="2135.68" y="217.8" width="1.2" height="1321.2" fill="#363940"/><rect x="2135.68" y="209.5" width="1.3" height="6.5" fill="#7d8187"/><rect x="2182.91" y="217.8" width="1.2" height="1321.2" fill="#363940"/><rect x="2182.91" y="209.5" width="1.3" height="6.5" fill="#7d8187"/><rect x="2230.14" y="217.8" width="1.2" height="1321.2" fill="#363940"/><rect x="2230.14" y="209.5" width="1.3" height="6.5" fill="#7d8187"/><rect x="2277.37" y="217.8" width="1.2" height="1321.2" fill="#363940"/><rect x="2277.37" y="209.5" width="1.3" height="6.5" fill="#7d8187"/><rect x="2324.60" y="217.8" width="1.2" height="1321.2" fill="#363940"/><rect x="2324.60" y="204" width="1.3" height="12" fill="#8a8e94"/><rect x="2371.83" y="217.8" width="1.2" height="1321.2" fill="#363940"/><rect x="2371.83" y="209.5" width="1.3" height="6.5" fill="#7d8187"/><rect x="2419.06" y="217.8" width="1.2" height="1321.2" fill="#363940"/><rect x="2419.06" y="209.5" width="1.3" height="6.5" fill="#7d8187"/><rect x="2466.29" y="217.8" width="1.2" height="1321.2" fill="#363940"/><rect x="2466.29" y="209.5" width="1.3" height="6.5" fill="#7d8187"/><rect x="2513.52" y="217.8" width="1.2" height="1321.2" fill="#363940"/><rect x="2513.52" y="209.5" width="1.3" height="6.5" fill="#7d8187"/><rect x="436" y="387.3" width="2124" height="2" fill="#3e4147"/><rect x="436" y="559.1" width="2124" height="2" fill="#3e4147"/><rect x="436" y="730.9" width="2124" height="2" fill="#3e4147"/><rect x="436" y="902.7" width="2124" height="2" fill="#3e4147"/><rect x="436" y="1074.5" width="2124" height="2" fill="#3e4147"/><rect x="436" y="1246.3" width="2124" height="2" fill="#3e4147"/><rect x="436" y="1418.1" width="2124" height="2" fill="#3e4147"/></svg>
<div class="t" style="left:439.2px;top:173.5px;font-size:18px;font-weight:bold;color:#f4f6f8;">0:00</div>
<div class="t" style="left:675.4px;top:174.2px;font-size:17.5px;color:#c9cdd2;">0:05</div>
<div class="t" style="left:911.5px;top:174.2px;font-size:17.5px;color:#c9cdd2;">0:10</div>
<div class="t" style="left:1147.6px;top:174.2px;font-size:17.5px;color:#c9cdd2;">0:15</div>
<div class="t" style="left:1383.8px;top:174.2px;font-size:17.5px;color:#c9cdd2;">0:20</div>
<div class="t" style="left:1620.0px;top:174.2px;font-size:17.5px;color:#c9cdd2;">0:25</div>
<div class="t" style="left:1856.1px;top:173.5px;font-size:18px;font-weight:bold;color:#f4f6f8;">0:30</div>
<div class="t" style="left:2092.2px;top:174.2px;font-size:17.5px;color:#c9cdd2;">0:35</div>
<div class="t" style="left:2328.4px;top:174.2px;font-size:17.5px;color:#c9cdd2;">0:40</div>
<div class="a" style="left:1851.9px;top:170.5px;width:2px;height:46.5px;background:#f0f2f4"></div>
<div class="a" style="left:437px;top:323.2px;width:2123px;height:1px;background:#33363c"></div>
<div class="clip" style="left:436.5px;top:218.5px;width:156.2px;height:167.3px"><div class="ci" style="background:#f08a8b"><svg class="cw" width="158" height="168"><use href="#w0"/></svg><div class="ch" style="background:#ee7b7c"></div><div class="ct" style="color:#fdeceb">Verse_Clap</div><div class="cd" style=""><i style="left:0;background:#fdeceb"></i><i style="left:9px;background:#fdeceb"></i><i style="left:18px;background:#fdeceb"></i></div></div></div>
<div class="clip" style="left:592.8px;top:218.5px;width:156.2px;height:167.3px"><div class="ci" style="background:#f08a8b"><svg class="cw" width="158" height="168"><use href="#w0"/></svg><div class="ch" style="background:#ee7b7c"></div><div class="ct" style="color:#fdeceb">Verse_Clap</div><div class="cd" style=""><i style="left:0;background:#fdeceb"></i><i style="left:9px;background:#fdeceb"></i><i style="left:18px;background:#fdeceb"></i></div></div></div>
<div class="clip" style="left:749.0px;top:218.5px;width:156.2px;height:167.3px"><div class="ci" style="background:#f08a8b"><svg class="cw" width="158" height="168"><use href="#w0"/></svg><div class="ch" style="background:#ee7b7c"></div><div class="ct" style="color:#fdeceb">Verse_Cla<span style="letter-spacing:-2.6px">...</span></div><div class="cd" style=""><i style="left:0;background:#fdeceb"></i><i style="left:9px;background:#fdeceb"></i><i style="left:18px;background:#fdeceb"></i></div></div></div>
<div class="clip" style="left:905.2px;top:218.5px;width:156.2px;height:167.3px"><div class="ci" style="background:#f08a8b"><svg class="cw" width="158" height="168"><use href="#w0"/></svg><div class="ch" style="background:#ee7b7c"></div><div class="ct" style="color:#fdeceb">Verse_Cla<span style="letter-spacing:-2.6px">...</span></div><div class="cd" style=""><i style="left:0;background:#fdeceb"></i><i style="left:9px;background:#fdeceb"></i><i style="left:18px;background:#fdeceb"></i></div></div></div>
<div class="clip" style="left:1061.5px;top:218.5px;width:156.2px;height:167.3px"><div class="ci" style="background:#f08a8b"><svg class="cw" width="158" height="168"><use href="#w0"/></svg><div class="ch" style="background:#ee7b7c"></div><div class="ct" style="color:#fdeceb">Verse_Cla<span style="letter-spacing:-2.6px">...</span></div><div class="cd" style=""><i style="left:0;background:#fdeceb"></i><i style="left:9px;background:#fdeceb"></i><i style="left:18px;background:#fdeceb"></i></div></div></div>
<div class="clip" style="left:1217.8px;top:218.5px;width:156.2px;height:167.3px"><div class="ci" style="background:#f08a8b"><svg class="cw" width="158" height="168"><use href="#w0"/></svg><div class="ch" style="background:#ee7b7c"></div><div class="ct" style="color:#fdeceb">Verse_Cla<span style="letter-spacing:-2.6px">...</span></div><div class="cd" style=""><i style="left:0;background:#fdeceb"></i><i style="left:9px;background:#fdeceb"></i><i style="left:18px;background:#fdeceb"></i></div></div></div>
<div class="clip" style="left:1374.0px;top:218.5px;width:156.2px;height:167.3px"><div class="ci" style="background:#f08a8b"><svg class="cw" width="158" height="168"><use href="#w0"/></svg><div class="ch" style="background:#ee7b7c"></div><div class="ct" style="color:#fdeceb">Verse_Cla<span style="letter-spacing:-2.6px">...</span></div><div class="cd" style=""><i style="left:0;background:#fdeceb"></i><i style="left:9px;background:#fdeceb"></i><i style="left:18px;background:#fdeceb"></i></div></div></div>
<div class="clip" style="left:1530.2px;top:218.5px;width:156.2px;height:167.3px"><div class="ci" style="background:#f08a8b"><svg class="cw" width="158" height="168"><use href="#w0"/></svg><div class="ch" style="background:#ee7b7c"></div><div class="ct" style="color:#fdeceb">Verse_Cla<span style="letter-spacing:-2.6px">...</span></div><div class="cd" style=""><i style="left:0;background:#fdeceb"></i><i style="left:9px;background:#fdeceb"></i><i style="left:18px;background:#fdeceb"></i></div></div></div>
<div class="clip" style="left:1686.5px;top:218.5px;width:156.2px;height:167.3px"><div class="ci" style="background:#f08a8b"><svg class="cw" width="158" height="168"><use href="#w0"/></svg><div class="ch" style="background:#ee7b7c"></div><div class="ct" style="color:#fdeceb">Verse_Cla<span style="letter-spacing:-2.6px">...</span></div><div class="cd" style=""><i style="left:0;background:#fdeceb"></i><i style="left:9px;background:#fdeceb"></i><i style="left:18px;background:#fdeceb"></i></div></div></div>
<div class="clip" style="left:1842.8px;top:218.5px;width:156.2px;height:167.3px"><div class="ci" style="background:#f08a8b"><svg class="cw" width="158" height="168"><use href="#w0"/></svg><div class="ch" style="background:#ee7b7c"></div><div class="ct" style="color:#fdeceb">Verse_Cla<span style="letter-spacing:-2.6px">...</span></div><div class="cd" style=""><i style="left:0;background:#fdeceb"></i><i style="left:9px;background:#fdeceb"></i><i style="left:18px;background:#fdeceb"></i></div></div></div>
<div class="a" style="left:437px;top:487.6px;width:2123px;height:1px;background:#33363c"></div>
<div class="clip" style="left:436.5px;top:390.3px;width:156.2px;height:167.3px"><div class="ci" style="background:#eac35f"><svg class="cw" width="158" height="168"><use href="#w1"/></svg><div class="ch" style="background:#e5b94c"></div><div class="ct" style="color:#fbf3df">Intro_Perc<span style="letter-spacing:-2.6px">...</span></div><div class="cd" style=""><i style="left:0;background:#fbf3df"></i><i style="left:9px;background:#fbf3df"></i><i style="left:18px;background:#fbf3df"></i></div></div></div>
<div class="clip" style="left:592.8px;top:390.3px;width:156.2px;height:167.3px"><div class="ci" style="background:#eac35f"><svg class="cw" width="158" height="168"><use href="#w1"/></svg><div class="ch" style="background:#e5b94c"></div><div class="ct" style="color:#fbf3df">Verse_Mai<span style="letter-spacing:-2.6px">...</span></div><div class="cd" style=""><i style="left:0;background:#fbf3df"></i><i style="left:9px;background:#fbf3df"></i><i style="left:18px;background:#fbf3df"></i></div></div></div>
<div class="clip" style="left:749.0px;top:390.3px;width:156.2px;height:167.3px"><div class="ci" style="background:#eac35f"><svg class="cw" width="158" height="168"><use href="#w1"/></svg><div class="ch" style="background:#e5b94c"></div><div class="ct" style="color:#fbf3df">Verse_Mai<span style="letter-spacing:-2.6px">...</span></div><div class="cd" style=""><i style="left:0;background:#fbf3df"></i><i style="left:9px;background:#fbf3df"></i><i style="left:18px;background:#fbf3df"></i></div></div></div>
<div class="clip" style="left:905.2px;top:390.3px;width:156.2px;height:167.3px"><div class="ci" style="background:#eac35f"><svg class="cw" width="158" height="168"><use href="#w1"/></svg><div class="ch" style="background:#e5b94c"></div><div class="ct" style="color:#fbf3df">Verse_Mai<span style="letter-spacing:-2.6px">...</span></div><div class="cd" style=""><i style="left:0;background:#fbf3df"></i><i style="left:9px;background:#fbf3df"></i><i style="left:18px;background:#fbf3df"></i></div></div></div>
<div class="clip" style="left:1061.5px;top:390.3px;width:156.2px;height:167.3px"><div class="ci" style="background:#eac35f"><svg class="cw" width="158" height="168"><use href="#w1"/></svg><div class="ch" style="background:#e5b94c"></div><div class="ct" style="color:#fbf3df">Verse_Mai<span style="letter-spacing:-2.6px">...</span></div><div class="cd" style=""><i style="left:0;background:#fbf3df"></i><i style="left:9px;background:#fbf3df"></i><i style="left:18px;background:#fbf3df"></i></div></div></div>
<div class="clip" style="left:1217.8px;top:390.3px;width:156.2px;height:167.3px"><div class="ci" style="background:#eac35f"><svg class="cw" width="158" height="168"><use href="#w1"/></svg><div class="ch" style="background:#e5b94c"></div><div class="ct" style="color:#fbf3df">Verse_Mai<span style="letter-spacing:-2.6px">...</span></div><div class="cd" style=""><i style="left:0;background:#fbf3df"></i><i style="left:9px;background:#fbf3df"></i><i style="left:18px;background:#fbf3df"></i></div></div></div>
<div class="clip" style="left:1374.0px;top:390.3px;width:156.2px;height:167.3px"><div class="ci" style="background:#eac35f"><svg class="cw" width="158" height="168"><use href="#w1"/></svg><div class="ch" style="background:#e5b94c"></div><div class="ct" style="color:#fbf3df">Verse_Mai<span style="letter-spacing:-2.6px">...</span></div><div class="cd" style=""><i style="left:0;background:#fbf3df"></i><i style="left:9px;background:#fbf3df"></i><i style="left:18px;background:#fbf3df"></i></div></div></div>
<div class="clip" style="left:1530.2px;top:390.3px;width:156.2px;height:167.3px"><div class="ci" style="background:#eac35f"><svg class="cw" width="158" height="168"><use href="#w1"/></svg><div class="ch" style="background:#e5b94c"></div><div class="ct" style="color:#fbf3df">Verse_Mai<span style="letter-spacing:-2.6px">...</span></div><div class="cd" style=""><i style="left:0;background:#fbf3df"></i><i style="left:9px;background:#fbf3df"></i><i style="left:18px;background:#fbf3df"></i></div></div></div>
<div class="clip" style="left:1686.5px;top:390.3px;width:156.2px;height:167.3px"><div class="ci" style="background:#eac35f"><svg class="cw" width="158" height="168"><use href="#w1"/></svg><div class="ch" style="background:#e5b94c"></div><div class="ct" style="color:#fbf3df">Verse_Mai<span style="letter-spacing:-2.6px">...</span></div><div class="cd" style=""><i style="left:0;background:#fbf3df"></i><i style="left:9px;background:#fbf3df"></i><i style="left:18px;background:#fbf3df"></i></div></div></div>
<div class="clip" style="left:1842.8px;top:390.3px;width:156.2px;height:167.3px"><div class="ci" style="background:#eac35f"><svg class="cw" width="158" height="168"><use href="#w1"/></svg><div class="ch" style="background:#e5b94c"></div><div class="ct" style="color:#fbf3df">Verse_Mai<span style="letter-spacing:-2.6px">...</span></div><div class="cd" style=""><i style="left:0;background:#fbf3df"></i><i style="left:9px;background:#fbf3df"></i><i style="left:18px;background:#fbf3df"></i></div></div></div>
<div class="clip" style="left:1999.0px;top:390.3px;width:312.5px;height:167.3px"><div class="ci" style="background:#eac35f"><svg class="cw" width="314" height="168"><use href="#w2"/></svg><div class="ch" style="background:#e5b94c"></div><div class="ct" style="color:#fbf3df">Drums_Chorus</div><div class="cd" style=""><i style="left:0;background:#fbf3df"></i><i style="left:9px;background:#fbf3df"></i><i style="left:18px;background:#fbf3df"></i></div></div></div>
<div class="clip" style="left:2311.5px;top:390.3px;width:250.0px;height:167.3px"><div class="ci" style="background:#eac35f"><svg class="cw" width="252" height="168"><use href="#w3"/></svg><div class="ch" style="background:#e5b94c"></div><div class="ct" style="color:#fbf3df">Drums_Chorus.1</div><div class="cd" style="right:9.5px"><i style="left:0;background:#fbf3df"></i><i style="left:9px;background:#fbf3df"></i><i style="left:18px;background:#fbf3df"></i></div></div></div>
<div class="a" style="left:437px;top:659.4px;width:2123px;height:1px;background:#33363c"></div>
<div class="clip" style="left:749.0px;top:562.1px;width:156.2px;height:167.3px"><div class="ci" style="background:#49bd9f"><svg class="cw" width="158" height="168"><use href="#w4"/></svg><div class="ch" style="background:#37b294"></div><div class="ct" style="color:#eafaf5">Bass_Verse</div><div class="cd" style=""><i style="left:0;background:#eafaf5"></i><i style="left:9px;background:#eafaf5"></i><i style="left:18px;background:#eafaf5"></i></div></div></div>
<div class="clip" style="left:905.2px;top:562.1px;width:156.2px;height:167.3px"><div class="ci" style="background:#49bd9f"><svg class="cw" width="158" height="168"><use href="#w4"/></svg><div class="ch" style="background:#37b294"></div><div class="ct" style="color:#eafaf5">Bass_Vers<span style="letter-spacing:-2.6px">...</span></div><div class="cd" style=""><i style="left:0;background:#eafaf5"></i><i style="left:9px;background:#eafaf5"></i><i style="left:18px;background:#eafaf5"></i></div></div></div>
<div class="clip" style="left:1061.5px;top:562.1px;width:156.2px;height:167.3px"><div class="ci" style="background:#49bd9f"><svg class="cw" width="158" height="168"><use href="#w4"/></svg><div class="ch" style="background:#37b294"></div><div class="ct" style="color:#eafaf5">Bass_Vers<span style="letter-spacing:-2.6px">...</span></div><div class="cd" style=""><i style="left:0;background:#eafaf5"></i><i style="left:9px;background:#eafaf5"></i><i style="left:18px;background:#eafaf5"></i></div></div></div>
<div class="clip" style="left:1217.8px;top:562.1px;width:156.2px;height:167.3px"><div class="ci" style="background:#49bd9f"><svg class="cw" width="158" height="168"><use href="#w4"/></svg><div class="ch" style="background:#37b294"></div><div class="ct" style="color:#eafaf5">Bass_Vers<span style="letter-spacing:-2.6px">...</span></div><div class="cd" style=""><i style="left:0;background:#eafaf5"></i><i style="left:9px;background:#eafaf5"></i><i style="left:18px;background:#eafaf5"></i></div></div></div>
<div class="clip" style="left:1374.0px;top:562.1px;width:156.2px;height:167.3px"><div class="ci" style="background:#49bd9f"><svg class="cw" width="158" height="168"><use href="#w4"/></svg><div class="ch" style="background:#37b294"></div><div class="ct" style="color:#eafaf5">Bass_Vers<span style="letter-spacing:-2.6px">...</span></div><div class="cd" style=""><i style="left:0;background:#eafaf5"></i><i style="left:9px;background:#eafaf5"></i><i style="left:18px;background:#eafaf5"></i></div></div></div>
<div class="clip" style="left:1530.2px;top:562.1px;width:156.2px;height:167.3px"><div class="ci" style="background:#49bd9f"><svg class="cw" width="158" height="168"><use href="#w4"/></svg><div class="ch" style="background:#37b294"></div><div class="ct" style="color:#eafaf5">Bass_Vers<span style="letter-spacing:-2.6px">...</span></div><div class="cd" style=""><i style="left:0;background:#eafaf5"></i><i style="left:9px;background:#eafaf5"></i><i style="left:18px;background:#eafaf5"></i></div></div></div>
<div class="clip" style="left:1686.5px;top:562.1px;width:156.2px;height:167.3px"><div class="ci" style="background:#49bd9f"><svg class="cw" width="158" height="168"><use href="#w4"/></svg><div class="ch" style="background:#37b294"></div><div class="ct" style="color:#eafaf5">Bass_Vers<span style="letter-spacing:-2.6px">...</span></div><div class="cd" style=""><i style="left:0;background:#eafaf5"></i><i style="left:9px;background:#eafaf5"></i><i style="left:18px;background:#eafaf5"></i></div></div></div>
<div class="clip" style="left:1842.8px;top:562.1px;width:156.2px;height:167.3px"><div class="ci" style="background:#49bd9f"><svg class="cw" width="158" height="168"><use href="#w4"/></svg><div class="ch" style="background:#37b294"></div><div class="ct" style="color:#eafaf5">Bass_Vers<span style="letter-spacing:-2.6px">...</span></div><div class="cd" style=""><i style="left:0;background:#eafaf5"></i><i style="left:9px;background:#eafaf5"></i><i style="left:18px;background:#eafaf5"></i></div></div></div>
<div class="clip" style="left:1999.0px;top:562.1px;width:312.5px;height:167.3px"><div class="ci" style="background:#49bd9f"><svg class="cw" width="314" height="168"><use href="#w5"/></svg><div class="ch" style="background:#37b294"></div><div class="ct" style="color:#eafaf5">Bass_Chorus</div><div class="cd" style=""><i style="left:0;background:#eafaf5"></i><i style="left:9px;background:#eafaf5"></i><i style="left:18px;background:#eafaf5"></i></div></div></div>
<div class="clip" style="left:2311.5px;top:562.1px;width:250.0px;height:167.3px"><div class="ci" style="background:#49bd9f"><svg class="cw" width="252" height="168"><use href="#w6"/></svg><div class="ch" style="background:#37b294"></div><div class="ct" style="color:#eafaf5">Bass_Chorus.1</div><div class="cd" style="right:9.5px"><i style="left:0;background:#eafaf5"></i><i style="left:9px;background:#eafaf5"></i><i style="left:18px;background:#eafaf5"></i></div></div></div>
<div class="a" style="left:437px;top:831.2px;width:2123px;height:1px;background:#33363c"></div>
<div class="clip" style="left:1374.0px;top:733.9px;width:312.5px;height:167.3px"><div class="ci" style="background:#74aaf7"><svg class="cw" width="314" height="168"><use href="#w7"/></svg><div class="ch" style="background:#67a1f5"></div><div class="ct" style="color:#f2f7ff">Verse_Ska.1</div><div class="cd" style=""><i style="left:0;background:#f2f7ff"></i><i style="left:9px;background:#f2f7ff"></i><i style="left:18px;background:#f2f7ff"></i></div></div></div>
<div class="clip" style="left:1686.5px;top:733.9px;width:312.5px;height:167.3px"><div class="ci" style="background:#74aaf7"><svg class="cw" width="314" height="168"><use href="#w7"/></svg><div class="ch" style="background:#67a1f5"></div><div class="ct" style="color:#f2f7ff">Verse_Ska</div><div class="cd" style=""><i style="left:0;background:#f2f7ff"></i><i style="left:9px;background:#f2f7ff"></i><i style="left:18px;background:#f2f7ff"></i></div></div></div>
<div class="a" style="left:437px;top:1003.0px;width:2123px;height:1px;background:#33363c"></div>
<div class="clip" style="left:1999.0px;top:905.7px;width:562.5px;height:167.3px"><div class="ci" style="background:#db96d1"><svg class="cw" width="564" height="168"><use href="#w8"/></svg><div class="ch" style="background:#d884cc"></div><div class="ct" style="color:#fdf0fb">Guitar_Chorus_Left</div><div class="cd" style="right:9.5px"><i style="left:0;background:#fdf0fb"></i><i style="left:9px;background:#fdf0fb"></i><i style="left:18px;background:#fdf0fb"></i></div></div></div>
<div class="a" style="left:437px;top:1174.8px;width:2123px;height:1px;background:#33363c"></div>
<div class="clip" style="left:1999.0px;top:1077.5px;width:562.5px;height:167.3px"><div class="ci" style="background:#f7a773"><svg class="cw" width="564" height="168"><use href="#w9"/></svg><div class="ch" style="background:#f59b63"></div><div class="ct" style="color:#fff3ea">Guitar_Chorus_Right</div><div class="cd" style="right:9.5px"><i style="left:0;background:#fff3ea"></i><i style="left:9px;background:#fff3ea"></i><i style="left:18px;background:#fff3ea"></i></div></div></div>
<div class="a" style="left:437px;top:1346.6px;width:2123px;height:1px;background:#33363c"></div>
<div class="clip" style="left:749.0px;top:1249.3px;width:156.2px;height:167.3px"><div class="ci" style="background:#7ec46c"><svg class="cw" width="158" height="168"><use href="#w10"/></svg><div class="ch" style="background:#6dbb5b"></div><div class="ct" style="color:#f0faec">Synth_Ver<span style="letter-spacing:-2.6px">...</span></div><div class="cd" style=""><i style="left:0;background:#f0faec"></i><i style="left:9px;background:#f0faec"></i><i style="left:18px;background:#f0faec"></i></div></div></div>
<div class="clip" style="left:905.2px;top:1249.3px;width:156.2px;height:167.3px"><div class="ci" style="background:#7ec46c"><svg class="cw" width="158" height="168"><use href="#w10"/></svg><div class="ch" style="background:#6dbb5b"></div><div class="ct" style="color:#f0faec">Synth_Ver<span style="letter-spacing:-2.6px">...</span></div><div class="cd" style=""><i style="left:0;background:#f0faec"></i><i style="left:9px;background:#f0faec"></i><i style="left:18px;background:#f0faec"></i></div></div></div>
<div class="clip" style="left:1061.5px;top:1249.3px;width:156.2px;height:167.3px"><div class="ci" style="background:#7ec46c"><svg class="cw" width="158" height="168"><use href="#w10"/></svg><div class="ch" style="background:#6dbb5b"></div><div class="ct" style="color:#f0faec">Synth_Verse</div><div class="cd" style=""><i style="left:0;background:#f0faec"></i><i style="left:9px;background:#f0faec"></i><i style="left:18px;background:#f0faec"></i></div></div></div>
<div class="clip" style="left:1217.8px;top:1249.3px;width:156.2px;height:167.3px"><div class="ci" style="background:#7ec46c"><svg class="cw" width="158" height="168"><use href="#w10"/></svg><div class="ch" style="background:#6dbb5b"></div><div class="ct" style="color:#f0faec">Synth_Ver<span style="letter-spacing:-2.6px">...</span></div><div class="cd" style=""><i style="left:0;background:#f0faec"></i><i style="left:9px;background:#f0faec"></i><i style="left:18px;background:#f0faec"></i></div></div></div>
<div class="clip" style="left:1374.0px;top:1249.3px;width:156.2px;height:167.3px"><div class="ci" style="background:#7ec46c"><svg class="cw" width="158" height="168"><use href="#w10"/></svg><div class="ch" style="background:#6dbb5b"></div><div class="ct" style="color:#f0faec">Synth_Ver<span style="letter-spacing:-2.6px">...</span></div><div class="cd" style=""><i style="left:0;background:#f0faec"></i><i style="left:9px;background:#f0faec"></i><i style="left:18px;background:#f0faec"></i></div></div></div>
<div class="clip" style="left:1530.2px;top:1249.3px;width:156.2px;height:167.3px"><div class="ci" style="background:#7ec46c"><svg class="cw" width="158" height="168"><use href="#w10"/></svg><div class="ch" style="background:#6dbb5b"></div><div class="ct" style="color:#f0faec">Synth_Ver<span style="letter-spacing:-2.6px">...</span></div><div class="cd" style=""><i style="left:0;background:#f0faec"></i><i style="left:9px;background:#f0faec"></i><i style="left:18px;background:#f0faec"></i></div></div></div>
<div class="clip" style="left:1686.5px;top:1249.3px;width:156.2px;height:167.3px"><div class="ci" style="background:#7ec46c"><svg class="cw" width="158" height="168"><use href="#w10"/></svg><div class="ch" style="background:#6dbb5b"></div><div class="ct" style="color:#f0faec">Synth_Ver<span style="letter-spacing:-2.6px">...</span></div><div class="cd" style=""><i style="left:0;background:#f0faec"></i><i style="left:9px;background:#f0faec"></i><i style="left:18px;background:#f0faec"></i></div></div></div>
<div class="clip" style="left:1842.8px;top:1249.3px;width:156.2px;height:167.3px"><div class="ci" style="background:#7ec46c"><svg class="cw" width="158" height="168"><use href="#w10"/></svg><div class="ch" style="background:#6dbb5b"></div><div class="ct" style="color:#f0faec">Synth_End<span style="letter-spacing:-2.6px">...</span></div><div class="cd" style=""><i style="left:0;background:#f0faec"></i><i style="left:9px;background:#f0faec"></i><i style="left:18px;background:#f0faec"></i></div></div></div>
<div class="clip" style="left:1999.0px;top:1249.3px;width:312.5px;height:167.3px"><div class="ci" style="background:#7ec46c"><svg class="cw" width="314" height="168"><use href="#w11"/></svg><div class="ch" style="background:#6dbb5b"></div><div class="ct" style="color:#f0faec">Synth_Chorus</div><div class="cd" style=""><i style="left:0;background:#f0faec"></i><i style="left:9px;background:#f0faec"></i><i style="left:18px;background:#f0faec"></i></div></div></div>
<div class="clip" style="left:2311.5px;top:1249.3px;width:250.0px;height:167.3px"><div class="ci" style="background:#7ec46c"><svg class="cw" width="252" height="168"><use href="#w12"/></svg><div class="ch" style="background:#6dbb5b"></div><div class="ct" style="color:#f0faec">Synth_Chorus.1</div><div class="cd" style="right:9.5px"><i style="left:0;background:#f0faec"></i><i style="left:9px;background:#f0faec"></i><i style="left:18px;background:#f0faec"></i></div></div></div>
<div class="a" style="left:0;top:217.8px;width:417px;height:1321.2px;background:#2f333b"></div>
<div class="a" style="left:1px;top:217.3px;width:8px;height:171.8px;background:#44484f"></div>
<div class="a" style="left:9px;top:387.3px;width:408px;height:2px;background:#43474e"></div>
<div class="a" style="left:380.5px;top:217.5px;width:1px;height:171.8px;background:#3a3e45"></div>
<div class="a" style="left:386.4px;top:225.0px;width:10.8px;height:155.5px;background:#41454c;border-radius:4px 4px 4px 4px"></div>
<div class="a" style="left:386.4px;top:225.0px;width:10.8px;height:5.5px;background:#5d6168;border-radius:4px 4px 0 0"></div>
<div class="a" style="left:400px;top:225.0px;width:10.8px;height:155.5px;background:#41454c;border-radius:4px 4px 4px 4px"></div>
<div class="a" style="left:400px;top:225.0px;width:10.8px;height:5.5px;background:#5d6168;border-radius:4px 4px 0 0"></div>
<svg class="a" style="left:28px;top:236.8px" width="22" height="28" viewBox="0 0 22 28" fill="none" stroke="#e8eaed" stroke-width="1.5" stroke-linecap="round">
<rect x="7.2" y="2.5" width="7.6" height="14.5" rx="3.8"/><path d="M4 12.5a7 7 0 0 0 14 0"/><path d="M11 19.5v4.5M7 24.3h8"/></svg>
<div class="t" style="left:62.7px;top:242.2px;font-size:18.6px;font-weight:bold;color:#f2f4f6;">Verse_Clap</div>
<div class="a" style="left:328.7px;top:248.8px;width:3.5px;height:3.5px;border-radius:50%;background:#e8eaed"></div>
<div class="a" style="left:337.7px;top:248.8px;width:3.5px;height:3.5px;border-radius:50%;background:#e8eaed"></div>
<div class="a" style="left:346.7px;top:248.8px;width:3.5px;height:3.5px;border-radius:50%;background:#e8eaed"></div>
<svg class="a" style="left:0;top:218.5px" width="120" height="172" viewBox="0 218.5 120 172"><path d="M36.81 315.42 A21.3 21.3 0 1 1 64.19 315.42" fill="none" stroke="#53575e" stroke-width="3.6"/><circle cx="50.5" cy="299.10" r="17.6" fill="#2e323b" stroke="#a3a7ad" stroke-width="2.6"/><path d="M50.50 296.60 L50.50 286.60" stroke="#f2f4f6" stroke-width="3" stroke-linecap="round"/></svg>
<div class="a" style="left:98px;top:295.8px;width:175px;height:6.6px;border-radius:3.3px;background:#8d9096"></div>
<div class="a" style="left:98px;top:295.8px;width:138.4px;height:6.6px;border-radius:3.3px;background:#8b6ef2"></div>
<div class="a" style="left:226.1px;top:288.8px;width:20.6px;height:20.6px;border-radius:50%;background:#2e323b;border:1.8px solid #cfd2d6"></div>
<div class="a" style="left:296.4px;top:284.6px;width:29.5px;height:29.5px;border-radius:4px;background:#50555d"></div>
<div class="t" style="left:296.4px;width:29.5px;text-align:center;top:290.0px;font-size:19px;color:#e8eaed">M</div>
<div class="a" style="left:332px;top:284.6px;width:29.5px;height:29.5px;border-radius:4px;background:#50555d"></div>
<div class="t" style="left:332px;width:29.5px;text-align:center;top:290.0px;font-size:19px;color:#e8eaed">S</div>
<div class="a" style="left:32.7px;top:332.3px;width:323px;height:35px;border-radius:5px;background:#50555d"></div>
<div class="t" style="left:32.7px;width:323px;text-align:center;top:340.3px;font-size:18.3px;color:#e8eaed;letter-spacing:0.4px">Effects</div>
<div class="a" style="left:1px;top:389.1px;width:8px;height:171.8px;background:#44484f"></div>
<div class="a" style="left:9px;top:559.1px;width:408px;height:2px;background:#43474e"></div>
<div class="a" style="left:380.5px;top:389.3px;width:1px;height:171.8px;background:#3a3e45"></div>
<div class="a" style="left:386.4px;top:396.8px;width:10.8px;height:155.5px;background:#41454c;border-radius:4px 4px 4px 4px"></div>
<div class="a" style="left:386.4px;top:396.8px;width:10.8px;height:5.5px;background:#5d6168;border-radius:4px 4px 0 0"></div>
<div class="a" style="left:400px;top:396.8px;width:10.8px;height:155.5px;background:#41454c;border-radius:4px 4px 4px 4px"></div>
<div class="a" style="left:400px;top:396.8px;width:10.8px;height:5.5px;background:#5d6168;border-radius:4px 4px 0 0"></div>
<svg class="a" style="left:28px;top:408.6px" width="22" height="28" viewBox="0 0 22 28" fill="none" stroke="#e8eaed" stroke-width="1.5" stroke-linecap="round">
<rect x="7.2" y="2.5" width="7.6" height="14.5" rx="3.8"/><path d="M4 12.5a7 7 0 0 0 14 0"/><path d="M11 19.5v4.5M7 24.3h8"/></svg>
<div class="t" style="left:62.7px;top:414.0px;font-size:18.6px;font-weight:bold;color:#f2f4f6;">Verse_Main_Drums</div>
<div class="a" style="left:328.7px;top:420.6px;width:3.5px;height:3.5px;border-radius:50%;background:#e8eaed"></div>
<div class="a" style="left:337.7px;top:420.6px;width:3.5px;height:3.5px;border-radius:50%;background:#e8eaed"></div>
<div class="a" style="left:346.7px;top:420.6px;width:3.5px;height:3.5px;border-radius:50%;background:#e8eaed"></div>
<svg class="a" style="left:0;top:390.3px" width="120" height="172" viewBox="0 390.3 120 172"><path d="M36.81 487.22 A21.3 21.3 0 1 1 64.19 487.22" fill="none" stroke="#53575e" stroke-width="3.6"/><circle cx="50.5" cy="470.90" r="17.6" fill="#2e323b" stroke="#a3a7ad" stroke-width="2.6"/><path d="M50.50 468.40 L50.50 458.40" stroke="#f2f4f6" stroke-width="3" stroke-linecap="round"/></svg>
<div class="a" style="left:98px;top:467.6px;width:175px;height:6.6px;border-radius:3.3px;background:#8d9096"></div>
<div class="a" style="left:98px;top:467.6px;width:138.4px;height:6.6px;border-radius:3.3px;background:#8b6ef2"></div>
<div class="a" style="left:226.1px;top:460.6px;width:20.6px;height:20.6px;border-radius:50%;background:#2e323b;border:1.8px solid #cfd2d6"></div>
<div class="a" style="left:296.4px;top:456.4px;width:29.5px;height:29.5px;border-radius:4px;background:#50555d"></div>
<div class="t" style="left:296.4px;width:29.5px;text-align:center;top:461.8px;font-size:19px;color:#e8eaed">M</div>
<div class="a" style="left:332px;top:456.4px;width:29.5px;height:29.5px;border-radius:4px;background:#50555d"></div>
<div class="t" style="left:332px;width:29.5px;text-align:center;top:461.8px;font-size:19px;color:#e8eaed">S</div>
<div class="a" style="left:32.7px;top:504.1px;width:323px;height:35px;border-radius:5px;background:#50555d"></div>
<div class="t" style="left:32.7px;width:323px;text-align:center;top:512.1px;font-size:18.3px;color:#e8eaed;letter-spacing:0.4px">Effects</div>
<div class="a" style="left:1px;top:560.9px;width:8px;height:171.8px;background:#44484f"></div>
<div class="a" style="left:9px;top:730.9px;width:408px;height:2px;background:#43474e"></div>
<div class="a" style="left:380.5px;top:561.1px;width:1px;height:171.8px;background:#3a3e45"></div>
<div class="a" style="left:386.4px;top:568.6px;width:10.8px;height:155.5px;background:#41454c;border-radius:4px 4px 4px 4px"></div>
<div class="a" style="left:386.4px;top:568.6px;width:10.8px;height:5.5px;background:#5d6168;border-radius:4px 4px 0 0"></div>
<div class="a" style="left:400px;top:568.6px;width:10.8px;height:155.5px;background:#41454c;border-radius:4px 4px 4px 4px"></div>
<div class="a" style="left:400px;top:568.6px;width:10.8px;height:5.5px;background:#5d6168;border-radius:4px 4px 0 0"></div>
<svg class="a" style="left:28px;top:580.4px" width="22" height="28" viewBox="0 0 22 28" fill="none" stroke="#e8eaed" stroke-width="1.5" stroke-linecap="round">
<rect x="7.2" y="2.5" width="7.6" height="14.5" rx="3.8"/><path d="M4 12.5a7 7 0 0 0 14 0"/><path d="M11 19.5v4.5M7 24.3h8"/></svg>
<div class="t" style="left:62.7px;top:585.8px;font-size:18.6px;font-weight:bold;color:#f2f4f6;">Bass_Verse</div>
<div class="a" style="left:328.7px;top:592.4px;width:3.5px;height:3.5px;border-radius:50%;background:#e8eaed"></div>
<div class="a" style="left:337.7px;top:592.4px;width:3.5px;height:3.5px;border-radius:50%;background:#e8eaed"></div>
<div class="a" style="left:346.7px;top:592.4px;width:3.5px;height:3.5px;border-radius:50%;background:#e8eaed"></div>
<svg class="a" style="left:0;top:562.1px" width="120" height="172" viewBox="0 562.1 120 172"><path d="M36.81 659.02 A21.3 21.3 0 1 1 64.19 659.02" fill="none" stroke="#53575e" stroke-width="3.6"/><circle cx="50.5" cy="642.70" r="17.6" fill="#2e323b" stroke="#a3a7ad" stroke-width="2.6"/><path d="M50.50 640.20 L50.50 630.20" stroke="#f2f4f6" stroke-width="3" stroke-linecap="round"/></svg>
<div class="a" style="left:98px;top:639.4px;width:175px;height:6.6px;border-radius:3.3px;background:#8d9096"></div>
<div class="a" style="left:98px;top:639.4px;width:146.4px;height:6.6px;border-radius:3.3px;background:#8b6ef2"></div>
<div class="a" style="left:234.1px;top:632.4px;width:20.6px;height:20.6px;border-radius:50%;background:#2e323b;border:1.8px solid #cfd2d6"></div>
<div class="a" style="left:296.4px;top:628.2px;width:29.5px;height:29.5px;border-radius:4px;background:#50555d"></div>
<div class="t" style="left:296.4px;width:29.5px;text-align:center;top:633.6px;font-size:19px;color:#e8eaed">M</div>
<div class="a" style="left:332px;top:628.2px;width:29.5px;height:29.5px;border-radius:4px;background:#50555d"></div>
<div class="t" style="left:332px;width:29.5px;text-align:center;top:633.6px;font-size:19px;color:#e8eaed">S</div>
<div class="a" style="left:32.7px;top:675.9px;width:323px;height:35px;border-radius:5px;background:#50555d"></div>
<div class="t" style="left:32.7px;width:323px;text-align:center;top:683.9px;font-size:18.3px;color:#e8eaed;letter-spacing:0.4px">Effects</div>
<div class="a" style="left:1px;top:732.7px;width:8px;height:171.8px;background:#44484f"></div>
<div class="a" style="left:9px;top:902.7px;width:408px;height:2px;background:#43474e"></div>
<div class="a" style="left:380.5px;top:732.9px;width:1px;height:171.8px;background:#3a3e45"></div>
<div class="a" style="left:386.4px;top:740.4px;width:10.8px;height:155.5px;background:#41454c;border-radius:4px 4px 4px 4px"></div>
<div class="a" style="left:386.4px;top:740.4px;width:10.8px;height:5.5px;background:#5d6168;border-radius:4px 4px 0 0"></div>
<div class="a" style="left:400px;top:740.4px;width:10.8px;height:155.5px;background:#41454c;border-radius:4px 4px 4px 4px"></div>
<div class="a" style="left:400px;top:740.4px;width:10.8px;height:5.5px;background:#5d6168;border-radius:4px 4px 0 0"></div>
<svg class="a" style="left:28px;top:752.2px" width="22" height="28" viewBox="0 0 22 28" fill="none" stroke="#e8eaed" stroke-width="1.5" stroke-linecap="round">
<rect x="7.2" y="2.5" width="7.6" height="14.5" rx="3.8"/><path d="M4 12.5a7 7 0 0 0 14 0"/><path d="M11 19.5v4.5M7 24.3h8"/></svg>
<div class="t" style="left:62.7px;top:757.6px;font-size:18.6px;font-weight:bold;color:#f2f4f6;">Verse_Ska</div>
<div class="a" style="left:328.7px;top:764.2px;width:3.5px;height:3.5px;border-radius:50%;background:#e8eaed"></div>
<div class="a" style="left:337.7px;top:764.2px;width:3.5px;height:3.5px;border-radius:50%;background:#e8eaed"></div>
<div class="a" style="left:346.7px;top:764.2px;width:3.5px;height:3.5px;border-radius:50%;background:#e8eaed"></div>
<svg class="a" style="left:0;top:733.9px" width="120" height="172" viewBox="0 733.9 120 172"><path d="M36.81 830.82 A21.3 21.3 0 1 1 64.19 830.82" fill="none" stroke="#53575e" stroke-width="3.6"/><circle cx="50.5" cy="814.50" r="17.6" fill="#2e323b" stroke="#a3a7ad" stroke-width="2.6"/><path d="M50.50 812.00 L50.50 802.00" stroke="#f2f4f6" stroke-width="3" stroke-linecap="round"/></svg>
<div class="a" style="left:98px;top:811.2px;width:175px;height:6.6px;border-radius:3.3px;background:#8d9096"></div>
<div class="a" style="left:98px;top:811.2px;width:138.4px;height:6.6px;border-radius:3.3px;background:#8b6ef2"></div>
<div class="a" style="left:226.1px;top:804.2px;width:20.6px;height:20.6px;border-radius:50%;background:#2e323b;border:1.8px solid #cfd2d6"></div>
<div class="a" style="left:296.4px;top:800.0px;width:29.5px;height:29.5px;border-radius:4px;background:#50555d"></div>
<div class="t" style="left:296.4px;width:29.5px;text-align:center;top:805.4px;font-size:19px;color:#e8eaed">M</div>
<div class="a" style="left:332px;top:800.0px;width:29.5px;height:29.5px;border-radius:4px;background:#50555d"></div>
<div class="t" style="left:332px;width:29.5px;text-align:center;top:805.4px;font-size:19px;color:#e8eaed">S</div>
<div class="a" style="left:32.7px;top:847.7px;width:323px;height:35px;border-radius:5px;background:#50555d"></div>
<div class="t" style="left:32.7px;width:323px;text-align:center;top:855.7px;font-size:18.3px;color:#e8eaed;letter-spacing:0.4px">Effects</div>
<div class="a" style="left:1px;top:904.5px;width:8px;height:171.8px;background:#44484f"></div>
<div class="a" style="left:9px;top:1074.5px;width:408px;height:2px;background:#43474e"></div>
<div class="a" style="left:380.5px;top:904.7px;width:1px;height:171.8px;background:#3a3e45"></div>
<div class="a" style="left:386.4px;top:912.2px;width:10.8px;height:155.5px;background:#41454c;border-radius:4px 4px 4px 4px"></div>
<div class="a" style="left:386.4px;top:912.2px;width:10.8px;height:5.5px;background:#5d6168;border-radius:4px 4px 0 0"></div>
<div class="a" style="left:400px;top:912.2px;width:10.8px;height:155.5px;background:#41454c;border-radius:4px 4px 4px 4px"></div>
<div class="a" style="left:400px;top:912.2px;width:10.8px;height:5.5px;background:#5d6168;border-radius:4px 4px 0 0"></div>
<svg class="a" style="left:28px;top:924.0px" width="22" height="28" viewBox="0 0 22 28" fill="none" stroke="#e8eaed" stroke-width="1.5" stroke-linecap="round">
<rect x="7.2" y="2.5" width="7.6" height="14.5" rx="3.8"/><path d="M4 12.5a7 7 0 0 0 14 0"/><path d="M11 19.5v4.5M7 24.3h8"/></svg>
<div class="t" style="left:62.7px;top:929.4px;font-size:18.6px;font-weight:bold;color:#f2f4f6;">Guitar_Chorus_Left</div>
<div class="a" style="left:328.7px;top:936.0px;width:3.5px;height:3.5px;border-radius:50%;background:#e8eaed"></div>
<div class="a" style="left:337.7px;top:936.0px;width:3.5px;height:3.5px;border-radius:50%;background:#e8eaed"></div>
<div class="a" style="left:346.7px;top:936.0px;width:3.5px;height:3.5px;border-radius:50%;background:#e8eaed"></div>
<svg class="a" style="left:0;top:905.7px" width="120" height="172" viewBox="0 905.7 120 172"><path d="M36.81 1002.62 A21.3 21.3 0 1 1 64.19 1002.62" fill="none" stroke="#53575e" stroke-width="3.6"/><path d="M36.81 1002.62 A21.3 21.3 0 0 1 50.50 965.00" fill="none" stroke="#8b6ef2" stroke-width="3.6"/><circle cx="50.5" cy="986.30" r="17.6" fill="#2e323b" stroke="#a3a7ad" stroke-width="2.6"/><path d="M48.73 988.07 L41.66 995.14" stroke="#f2f4f6" stroke-width="3" stroke-linecap="round"/></svg>
<div class="a" style="left:98px;top:983.0px;width:175px;height:6.6px;border-radius:3.3px;background:#8d9096"></div>
<div class="a" style="left:98px;top:983.0px;width:130.0px;height:6.6px;border-radius:3.3px;background:#8b6ef2"></div>
<div class="a" style="left:217.7px;top:976.0px;width:20.6px;height:20.6px;border-radius:50%;background:#2e323b;border:1.8px solid #cfd2d6"></div>
<div class="a" style="left:296.4px;top:971.8px;width:29.5px;height:29.5px;border-radius:4px;background:#50555d"></div>
<div class="t" style="left:296.4px;width:29.5px;text-align:center;top:977.2px;font-size:19px;color:#e8eaed">M</div>
<div class="a" style="left:332px;top:971.8px;width:29.5px;height:29.5px;border-radius:4px;background:#50555d"></div>
<div class="t" style="left:332px;width:29.5px;text-align:center;top:977.2px;font-size:19px;color:#e8eaed">S</div>
<div class="a" style="left:32.7px;top:1019.5px;width:323px;height:35px;border-radius:5px;background:#50555d"></div>
<div class="t" style="left:32.7px;width:323px;text-align:center;top:1027.5px;font-size:18.3px;color:#e8eaed;letter-spacing:0.4px">Effects</div>
<div class="a" style="left:1px;top:1076.3px;width:8px;height:171.8px;background:#44484f"></div>
<div class="a" style="left:9px;top:1246.3px;width:408px;height:2px;background:#43474e"></div>
<div class="a" style="left:380.5px;top:1076.5px;width:1px;height:171.8px;background:#3a3e45"></div>
<div class="a" style="left:386.4px;top:1084.0px;width:10.8px;height:155.5px;background:#41454c;border-radius:4px 4px 4px 4px"></div>
<div class="a" style="left:386.4px;top:1084.0px;width:10.8px;height:5.5px;background:#5d6168;border-radius:4px 4px 0 0"></div>
<div class="a" style="left:400px;top:1084.0px;width:10.8px;height:155.5px;background:#41454c;border-radius:4px 4px 4px 4px"></div>
<div class="a" style="left:400px;top:1084.0px;width:10.8px;height:5.5px;background:#5d6168;border-radius:4px 4px 0 0"></div>
<svg class="a" style="left:28px;top:1095.8px" width="22" height="28" viewBox="0 0 22 28" fill="none" stroke="#e8eaed" stroke-width="1.5" stroke-linecap="round">
<rect x="7.2" y="2.5" width="7.6" height="14.5" rx="3.8"/><path d="M4 12.5a7 7 0 0 0 14 0"/><path d="M11 19.5v4.5M7 24.3h8"/></svg>
<div class="t" style="left:62.7px;top:1101.2px;font-size:18.6px;font-weight:bold;color:#f2f4f6;">Guitar_Chorus_Right</div>
<div class="a" style="left:328.7px;top:1107.8px;width:3.5px;height:3.5px;border-radius:50%;background:#e8eaed"></div>
<div class="a" style="left:337.7px;top:1107.8px;width:3.5px;height:3.5px;border-radius:50%;background:#e8eaed"></div>
<div class="a" style="left:346.7px;top:1107.8px;width:3.5px;height:3.5px;border-radius:50%;background:#e8eaed"></div>
<svg class="a" style="left:0;top:1077.5px" width="120" height="172" viewBox="0 1077.5 120 172"><path d="M36.81 1174.42 A21.3 21.3 0 1 1 64.19 1174.42" fill="none" stroke="#53575e" stroke-width="3.6"/><path d="M50.50 1136.80 A21.3 21.3 0 0 1 64.19 1174.42" fill="none" stroke="#8b6ef2" stroke-width="3.6"/><circle cx="50.5" cy="1158.10" r="17.6" fill="#2e323b" stroke="#a3a7ad" stroke-width="2.6"/><path d="M52.27 1159.87 L59.34 1166.94" stroke="#f2f4f6" stroke-width="3" stroke-linecap="round"/></svg>
<div class="a" style="left:98px;top:1154.8px;width:175px;height:6.6px;border-radius:3.3px;background:#8d9096"></div>
<div class="a" style="left:98px;top:1154.8px;width:130.0px;height:6.6px;border-radius:3.3px;background:#8b6ef2"></div>
<div class="a" style="left:217.7px;top:1147.8px;width:20.6px;height:20.6px;border-radius:50%;background:#2e323b;border:1.8px solid #cfd2d6"></div>
<div class="a" style="left:296.4px;top:1143.6px;width:29.5px;height:29.5px;border-radius:4px;background:#50555d"></div>
<div class="t" style="left:296.4px;width:29.5px;text-align:center;top:1149.0px;font-size:19px;color:#e8eaed">M</div>
<div class="a" style="left:332px;top:1143.6px;width:29.5px;height:29.5px;border-radius:4px;background:#50555d"></div>
<div class="t" style="left:332px;width:29.5px;text-align:center;top:1149.0px;font-size:19px;color:#e8eaed">S</div>
<div class="a" style="left:32.7px;top:1191.3px;width:323px;height:35px;border-radius:5px;background:#50555d"></div>
<div class="t" style="left:32.7px;width:323px;text-align:center;top:1199.3px;font-size:18.3px;color:#e8eaed;letter-spacing:0.4px">Effects</div>
<div class="a" style="left:1px;top:1248.1px;width:8px;height:171.8px;background:#44484f"></div>
<div class="a" style="left:9px;top:1418.1px;width:408px;height:2px;background:#43474e"></div>
<div class="a" style="left:380.5px;top:1248.3px;width:1px;height:171.8px;background:#3a3e45"></div>
<div class="a" style="left:386.4px;top:1255.8px;width:10.8px;height:155.5px;background:#41454c;border-radius:4px 4px 4px 4px"></div>
<div class="a" style="left:386.4px;top:1255.8px;width:10.8px;height:5.5px;background:#5d6168;border-radius:4px 4px 0 0"></div>
<div class="a" style="left:400px;top:1255.8px;width:10.8px;height:155.5px;background:#41454c;border-radius:4px 4px 4px 4px"></div>
<div class="a" style="left:400px;top:1255.8px;width:10.8px;height:5.5px;background:#5d6168;border-radius:4px 4px 0 0"></div>
<svg class="a" style="left:28px;top:1267.6px" width="22" height="28" viewBox="0 0 22 28" fill="none" stroke="#e8eaed" stroke-width="1.5" stroke-linecap="round">
<rect x="7.2" y="2.5" width="7.6" height="14.5" rx="3.8"/><path d="M4 12.5a7 7 0 0 0 14 0"/><path d="M11 19.5v4.5M7 24.3h8"/></svg>
<div class="t" style="left:62.7px;top:1273.0px;font-size:18.6px;font-weight:bold;color:#f2f4f6;">Synth_Chorus</div>
<div class="a" style="left:328.7px;top:1279.6px;width:3.5px;height:3.5px;border-radius:50%;background:#e8eaed"></div>
<div class="a" style="left:337.7px;top:1279.6px;width:3.5px;height:3.5px;border-radius:50%;background:#e8eaed"></div>
<div class="a" style="left:346.7px;top:1279.6px;width:3.5px;height:3.5px;border-radius:50%;background:#e8eaed"></div>
<svg class="a" style="left:0;top:1249.3px" width="120" height="172" viewBox="0 1249.3 120 172"><path d="M36.81 1346.22 A21.3 21.3 0 1 1 64.19 1346.22" fill="none" stroke="#53575e" stroke-width="3.6"/><circle cx="50.5" cy="1329.90" r="17.6" fill="#2e323b" stroke="#a3a7ad" stroke-width="2.6"/><path d="M50.50 1327.40 L50.50 1317.40" stroke="#f2f4f6" stroke-width="3" stroke-linecap="round"/></svg>
<div class="a" style="left:98px;top:1326.6px;width:175px;height:6.6px;border-radius:3.3px;background:#8d9096"></div>
<div class="a" style="left:98px;top:1326.6px;width:146.4px;height:6.6px;border-radius:3.3px;background:#8b6ef2"></div>
<div class="a" style="left:234.1px;top:1319.6px;width:20.6px;height:20.6px;border-radius:50%;background:#2e323b;border:1.8px solid #cfd2d6"></div>
<div class="a" style="left:296.4px;top:1315.4px;width:29.5px;height:29.5px;border-radius:4px;background:#50555d"></div>
<div class="t" style="left:296.4px;width:29.5px;text-align:center;top:1320.8px;font-size:19px;color:#e8eaed">M</div>
<div class="a" style="left:332px;top:1315.4px;width:29.5px;height:29.5px;border-radius:4px;background:#50555d"></div>
<div class="t" style="left:332px;width:29.5px;text-align:center;top:1320.8px;font-size:19px;color:#e8eaed">S</div>
<div class="a" style="left:32.7px;top:1363.1px;width:323px;height:35px;border-radius:5px;background:#50555d"></div>
<div class="t" style="left:32.7px;width:323px;text-align:center;top:1371.1px;font-size:18.3px;color:#e8eaed;letter-spacing:0.4px">Effects</div>
<div class="a" style="left:1012.2px;top:205px;width:4.2px;height:1334.0px;background:#0c0d10"></div>
<div class="a" style="left:1013.1px;top:205px;width:2.4px;height:1334.0px;background:#dcdfe3"></div>
<svg class="a" style="left:1000.3px;top:192px" width="28" height="28" viewBox="0 0 28 28">
<path d="M3 5a2.5 2.5 0 0 1 2.5-2.5h17a2.5 2.5 0 0 1 2.5 2.5v12.5l-11 6.5-11-6.5z" fill="#ffffff" stroke="#0c0d10" stroke-width="1.8" stroke-linejoin="round"/></svg>
<div class="a" style="left:0;top:1539px;width:2560px;height:61px;background:#2f333b"></div>
<div class="a" style="left:0;top:1538.5px;width:2560px;height:1.6px;background:#3d4148"></div>
<div class="t" style="left:2148.5px;top:1560.5px;font-size:18px;color:#dfe2e5;letter-spacing:0.2px;">Selection</div>
<div class="a" style="left:2235px;top:1548.5px;width:317px;height:43.7px;border-radius:5px;background:#1b1e25"></div>
<div class="a" style="left:2380px;top:1548.5px;width:1.5px;height:43.7px;background:#2c3038"></div>
<div class="a" style="left:2526.5px;top:1548.5px;width:1.5px;height:43.7px;background:#2c3038"></div>
<div class="t" style="left:2245.4px;top:1556.6px;font-size:24px;font-weight:bold;color:#f4f6f8;letter-spacing:3.4px;">000,000<span style="color:#c9cdd2">s</span></div>
<div class="t" style="left:2392.0px;top:1556.6px;font-size:24px;font-weight:bold;color:#f4f6f8;letter-spacing:3.4px;">000,000<span style="color:#c9cdd2">s</span></div>
<svg class="a" style="left:2535px;top:1565px" width="11" height="9" viewBox="0 0 11 9"><path d="M1 1.5h9L5.5 8z" fill="#eef0f3"/></svg>
</div>
<div class="wb"></div>
</body></html>
